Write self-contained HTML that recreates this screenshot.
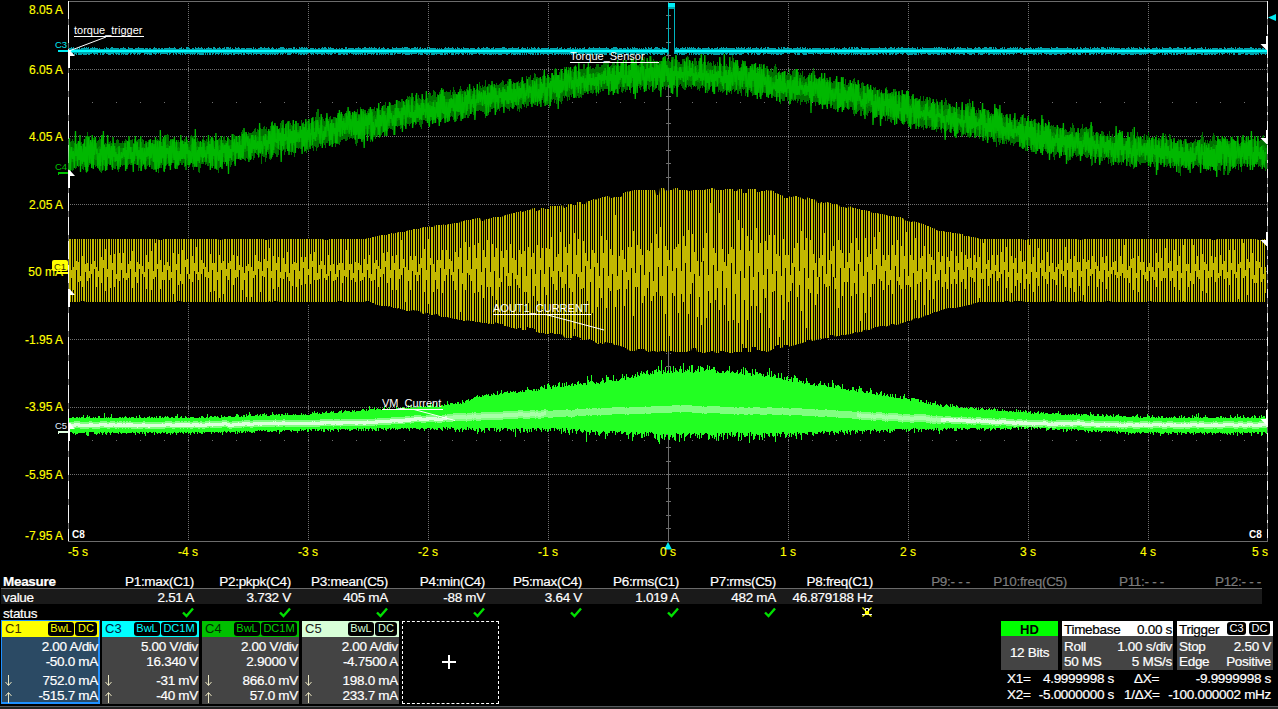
<!DOCTYPE html><html><head><meta charset="utf-8"><style>
*{margin:0;padding:0;box-sizing:border-box}
html,body{width:1278px;height:709px;background:#000;overflow:hidden}
body{position:relative;font-family:"Liberation Sans",sans-serif;color:#fff}
svg{position:absolute;left:0;top:0}
.t{position:absolute;white-space:nowrap;line-height:1}
.yl{color:#ffff00;font-size:12px;-webkit-text-stroke:0.15px currentColor;text-align:right;width:60px;left:3px}
.xl{color:#ffff00;font-size:12px;-webkit-text-stroke:0.15px currentColor}
.m{font-size:13.5px;letter-spacing:-0.3px;-webkit-text-stroke:0.2px currentColor}
.hdr{right:auto}
.box{position:absolute}
</style></head><body>
<svg width="1278" height="709" viewBox="0 0 1278 709">
<path d="M70 69.5H1267M70 136.5H1267M70 204.5H1267M70 271.5H1267M70 339.5H1267M70 407.5H1267M70 474.5H1267" stroke="#707070" stroke-width="1" stroke-dasharray="1 1" fill="none" shape-rendering="crispEdges"/>
<path d="M188.5 3V541M308.5 3V541M428.5 3V541M548.5 3V541M788.5 3V541M908.5 3V541M1028.5 3V541M1148.5 3V541" stroke="#707070" stroke-width="1" stroke-dasharray="1 1" fill="none" shape-rendering="crispEdges"/>
<path d="M92 102h1v1h-1zM116 102h1v1h-1zM140 102h1v1h-1zM164 102h1v1h-1zM188 101h1v3h-1zM212 102h1v1h-1zM236 102h1v1h-1zM260 102h1v1h-1zM284 102h1v1h-1zM308 101h1v3h-1zM332 102h1v1h-1zM356 102h1v1h-1zM380 102h1v1h-1zM404 102h1v1h-1zM428 101h1v3h-1zM452 102h1v1h-1zM476 102h1v1h-1zM500 102h1v1h-1zM524 102h1v1h-1zM548 101h1v3h-1zM572 102h1v1h-1zM596 102h1v1h-1zM620 102h1v1h-1zM644 102h1v1h-1zM668 101h1v3h-1zM692 102h1v1h-1zM716 102h1v1h-1zM740 102h1v1h-1zM764 102h1v1h-1zM788 101h1v3h-1zM812 102h1v1h-1zM836 102h1v1h-1zM860 102h1v1h-1zM884 102h1v1h-1zM908 101h1v3h-1zM932 102h1v1h-1zM956 102h1v1h-1zM980 102h1v1h-1zM1004 102h1v1h-1zM1028 101h1v3h-1zM1052 102h1v1h-1zM1076 102h1v1h-1zM1100 102h1v1h-1zM1124 102h1v1h-1zM1148 101h1v3h-1zM1172 102h1v1h-1zM1196 102h1v1h-1zM1220 102h1v1h-1zM1244 102h1v1h-1zM92 440h1v1h-1zM116 440h1v1h-1zM140 440h1v1h-1zM164 440h1v1h-1zM188 439h1v3h-1zM212 440h1v1h-1zM236 440h1v1h-1zM260 440h1v1h-1zM284 440h1v1h-1zM308 439h1v3h-1zM332 440h1v1h-1zM356 440h1v1h-1zM380 440h1v1h-1zM404 440h1v1h-1zM428 439h1v3h-1zM452 440h1v1h-1zM476 440h1v1h-1zM500 440h1v1h-1zM524 440h1v1h-1zM548 439h1v3h-1zM572 440h1v1h-1zM596 440h1v1h-1zM620 440h1v1h-1zM644 440h1v1h-1zM668 439h1v3h-1zM692 440h1v1h-1zM716 440h1v1h-1zM740 440h1v1h-1zM764 440h1v1h-1zM788 439h1v3h-1zM812 440h1v1h-1zM836 440h1v1h-1zM860 440h1v1h-1zM884 440h1v1h-1zM908 439h1v3h-1zM932 440h1v1h-1zM956 440h1v1h-1zM980 440h1v1h-1zM1004 440h1v1h-1zM1028 439h1v3h-1zM1052 440h1v1h-1zM1076 440h1v1h-1zM1100 440h1v1h-1zM1124 440h1v1h-1zM1148 439h1v3h-1zM1172 440h1v1h-1zM1196 440h1v1h-1zM1220 440h1v1h-1zM1244 440h1v1h-1zM188 68h1v3h-1zM188 135h1v3h-1zM188 203h1v3h-1zM188 270h1v3h-1zM188 338h1v3h-1zM188 406h1v3h-1zM188 473h1v3h-1zM308 68h1v3h-1zM308 135h1v3h-1zM308 203h1v3h-1zM308 270h1v3h-1zM308 338h1v3h-1zM308 406h1v3h-1zM308 473h1v3h-1zM428 68h1v3h-1zM428 135h1v3h-1zM428 203h1v3h-1zM428 270h1v3h-1zM428 338h1v3h-1zM428 406h1v3h-1zM428 473h1v3h-1zM548 68h1v3h-1zM548 135h1v3h-1zM548 203h1v3h-1zM548 270h1v3h-1zM548 338h1v3h-1zM548 406h1v3h-1zM548 473h1v3h-1zM668 68h1v3h-1zM668 135h1v3h-1zM668 203h1v3h-1zM668 270h1v3h-1zM668 338h1v3h-1zM668 406h1v3h-1zM668 473h1v3h-1zM788 68h1v3h-1zM788 135h1v3h-1zM788 203h1v3h-1zM788 270h1v3h-1zM788 338h1v3h-1zM788 406h1v3h-1zM788 473h1v3h-1zM908 68h1v3h-1zM908 135h1v3h-1zM908 203h1v3h-1zM908 270h1v3h-1zM908 338h1v3h-1zM908 406h1v3h-1zM908 473h1v3h-1zM1028 68h1v3h-1zM1028 135h1v3h-1zM1028 203h1v3h-1zM1028 270h1v3h-1zM1028 338h1v3h-1zM1028 406h1v3h-1zM1028 473h1v3h-1zM1148 68h1v3h-1zM1148 135h1v3h-1zM1148 203h1v3h-1zM1148 270h1v3h-1zM1148 338h1v3h-1zM1148 406h1v3h-1zM1148 473h1v3h-1z" fill="#707070" shape-rendering="crispEdges"/>
<path d="M668.5 1V541M666 15.5h5M666 28.5h5M666 42.5h5M666 55.5h5M666 69.5h5M666 82.5h5M666 96.5h5M666 109.5h5M666 123.5h5M666 136.5h5M666 150.5h5M666 163.5h5M666 177.5h5M666 190.5h5M666 204.5h5M666 217.5h5M666 231.5h5M666 244.5h5M666 258.5h5M666 271.5h5M666 285.5h5M666 298.5h5M666 312.5h5M666 325.5h5M666 339.5h5M666 353.5h5M666 366.5h5M666 380.5h5M666 393.5h5M666 407.5h5M666 420.5h5M666 434.5h5M666 447.5h5M666 461.5h5M666 474.5h5M666 488.5h5M666 501.5h5M666 515.5h5M666 528.5h5" stroke="#6e6e6e" stroke-width="1" fill="none" shape-rendering="crispEdges"/>
<path d="M68 1.5H1268M68 541.5H1268" stroke="#6c6c6c" stroke-width="1" shape-rendering="crispEdges"/>
<path d="M68.5 1V541M1267.5 1V541" stroke="#f4f4f4" stroke-width="1" shape-rendering="crispEdges"/>
<path d="M68.5 19V541M1267.5 19V541M1267.5 34V541" stroke="#6c6c6c" stroke-width="1" stroke-dasharray="6 18" shape-rendering="crispEdges"/>
<path d="M69.5 144V168M70.5 142V166M71.5 141V170M72.5 139V171M73.5 141V170M74.5 143V164M75.5 142V169M76.5 144V168M77.5 143V166M78.5 144V167M79.5 142V166M80.5 143V166M81.5 142V166M82.5 144V169M83.5 143V170M84.5 142V165M85.5 136V170M86.5 136V173M87.5 132V172M88.5 136V167M89.5 136V165M90.5 141V164M91.5 142V166M92.5 144V165M93.5 138V168M94.5 137V165M95.5 137V167M96.5 143V166M97.5 141V165M98.5 140V169M99.5 137V171M100.5 139V172M101.5 142V173M102.5 143V171M103.5 144V165M104.5 144V166M105.5 143V167M106.5 144V164M107.5 143V166M108.5 144V164M109.5 142V165M110.5 141V164M111.5 143V167M112.5 144V169M113.5 142V168M114.5 143V169M115.5 143V169M116.5 140V166M117.5 139V170M118.5 140V172M119.5 143V169M120.5 143V167M121.5 143V165M122.5 141V166M123.5 143V165M124.5 141V165M125.5 139V165M126.5 140V165M127.5 142V167M128.5 142V165M129.5 143V164M130.5 140V165M131.5 140V165M132.5 139V165M133.5 143V166M134.5 139V164M135.5 142V164M136.5 141V165M137.5 140V165M138.5 139V171M139.5 139V168M140.5 138V171M141.5 142V165M142.5 139V166M143.5 140V165M144.5 144V167M145.5 141V170M146.5 141V169M147.5 142V166M148.5 142V165M149.5 143V165M150.5 143V165M151.5 143V169M152.5 140V169M153.5 140V170M154.5 140V170M155.5 142V170M156.5 140V164M157.5 139V169M158.5 140V173M159.5 143V166M160.5 140V165M161.5 142V168M162.5 139V165M163.5 141V171M164.5 142V171M165.5 137V169M166.5 135V165M167.5 134V164M168.5 135V163M169.5 141V164M170.5 139V164M171.5 139V165M172.5 141V163M173.5 140V163M174.5 143V168M175.5 142V164M176.5 143V163M177.5 142V165M178.5 140V166M179.5 142V165M180.5 141V163M181.5 140V165M182.5 140V165M183.5 141V163M184.5 139V167M185.5 142V170M186.5 142V170M187.5 140V165M188.5 142V167M189.5 141V167M190.5 136V164M191.5 135V163M192.5 136V167M193.5 136V170M194.5 140V166M195.5 135V166M196.5 142V164M197.5 138V167M198.5 141V172M199.5 142V173M200.5 141V168M201.5 142V164M202.5 139V164M203.5 136V164M204.5 140V162M205.5 141V165M206.5 139V164M207.5 142V166M208.5 141V166M209.5 141V162M210.5 139V166M211.5 139V166M212.5 136V166M213.5 140V166M214.5 141V169M215.5 137V169M216.5 140V170M217.5 141V170M218.5 139V173M219.5 138V168M220.5 140V164M221.5 140V168M222.5 140V164M223.5 137V162M224.5 136V164M225.5 140V162M226.5 141V162M227.5 141V164M228.5 138V164M229.5 139V161M230.5 140V167M231.5 140V165M232.5 135V162M233.5 134V161M234.5 135V164M235.5 136V163M236.5 137V159M237.5 136V159M238.5 137V159M239.5 135V158M240.5 136V158M241.5 132V160M242.5 130V159M243.5 133V156M244.5 134V160M245.5 132V161M246.5 134V158M247.5 134V159M248.5 132V154M249.5 133V158M250.5 133V155M251.5 133V159M252.5 132V156M253.5 131V160M254.5 129V158M255.5 128V153M256.5 132V154M257.5 129V155M258.5 130V158M259.5 131V153M260.5 128V154M261.5 129V164M262.5 129V156M263.5 127V157M264.5 126V157M265.5 129V162M266.5 127V158M267.5 131V152M268.5 129V154M269.5 131V159M270.5 126V160M271.5 123V159M272.5 121V157M273.5 125V153M274.5 127V153M275.5 125V154M276.5 126V157M277.5 129V157M278.5 129V155M279.5 128V150M280.5 123V150M281.5 121V150M282.5 125V151M283.5 129V150M284.5 128V155M285.5 126V152M286.5 123V149M287.5 122V151M288.5 122V151M289.5 121V151M290.5 123V152M291.5 125V155M292.5 126V150M293.5 126V153M294.5 124V157M295.5 121V152M296.5 121V148M297.5 123V148M298.5 123V149M299.5 126V148M300.5 126V149M301.5 120V149M302.5 124V147M303.5 122V147M304.5 124V152M305.5 124V151M306.5 122V153M307.5 121V150M308.5 122V151M309.5 124V147M310.5 123V145M311.5 124V146M312.5 122V148M313.5 122V151M314.5 121V146M315.5 117V147M316.5 112V151M317.5 109V148M318.5 109V147M319.5 117V143M320.5 120V146M321.5 122V144M322.5 117V146M323.5 119V143M324.5 121V145M325.5 118V148M326.5 121V143M327.5 121V143M328.5 119V141M329.5 117V144M330.5 116V145M331.5 119V144M332.5 119V140M333.5 117V144M334.5 117V143M335.5 117V147M336.5 118V143M337.5 115V143M338.5 115V144M339.5 117V145M340.5 114V142M341.5 112V140M342.5 114V140M343.5 116V139M344.5 114V139M345.5 113V141M346.5 111V141M347.5 116V140M348.5 114V137M349.5 114V139M350.5 113V138M351.5 115V138M352.5 113V139M353.5 113V138M354.5 112V139M355.5 114V144M356.5 114V146M357.5 109V143M358.5 114V137M359.5 114V138M360.5 107V139M361.5 109V141M362.5 111V140M363.5 112V139M364.5 114V135M365.5 114V135M366.5 113V134M367.5 111V138M368.5 109V134M369.5 109V136M370.5 113V142M371.5 110V140M372.5 112V142M373.5 109V137M374.5 107V137M375.5 111V139M376.5 108V136M377.5 108V137M378.5 110V135M379.5 110V138M380.5 110V137M381.5 108V135M382.5 109V133M383.5 105V132M384.5 105V132M385.5 102V131M386.5 108V133M387.5 106V131M388.5 106V129M389.5 104V128M390.5 103V129M391.5 105V129M392.5 105V130M393.5 105V135M394.5 104V129M395.5 104V126M396.5 102V126M397.5 100V127M398.5 101V126M399.5 101V126M400.5 102V129M401.5 99V128M402.5 99V128M403.5 101V125M404.5 102V126M405.5 100V127M406.5 99V123M407.5 96V124M408.5 97V124M409.5 96V126M410.5 97V124M411.5 99V123M412.5 97V124M413.5 97V124M414.5 101V122M415.5 95V125M416.5 98V124M417.5 99V122M418.5 95V122M419.5 98V125M420.5 99V127M421.5 100V129M422.5 99V124M423.5 99V120M424.5 100V120M425.5 99V121M426.5 99V121M427.5 98V120M428.5 94V126M429.5 92V123M430.5 93V121M431.5 96V120M432.5 95V119M433.5 90V123M434.5 91V123M435.5 92V120M436.5 97V118M437.5 94V119M438.5 95V120M439.5 92V120M440.5 90V119M441.5 96V120M442.5 91V119M443.5 89V118M444.5 92V119M445.5 92V116M446.5 91V118M447.5 92V121M448.5 92V122M449.5 92V120M450.5 90V117M451.5 95V116M452.5 92V117M453.5 87V120M454.5 90V119M455.5 92V121M456.5 94V121M457.5 94V119M458.5 92V116M459.5 89V115M460.5 86V114M461.5 89V114M462.5 91V115M463.5 91V118M464.5 90V118M465.5 91V118M466.5 89V114M467.5 87V118M468.5 91V118M469.5 91V116M470.5 89V112M471.5 89V114M472.5 91V112M473.5 86V115M474.5 88V113M475.5 90V111M476.5 89V111M477.5 90V111M478.5 90V111M479.5 82V110M480.5 86V111M481.5 88V111M482.5 85V112M483.5 87V112M484.5 86V114M485.5 80V118M486.5 87V116M487.5 86V116M488.5 84V115M489.5 84V112M490.5 86V112M491.5 87V109M492.5 86V109M493.5 87V108M494.5 87V108M495.5 85V110M496.5 83V112M497.5 85V110M498.5 85V108M499.5 84V111M500.5 83V108M501.5 82V107M502.5 80V107M503.5 81V107M504.5 85V106M505.5 84V107M506.5 84V108M507.5 81V109M508.5 82V109M509.5 84V111M510.5 84V107M511.5 81V108M512.5 84V108M513.5 82V108M514.5 83V107M515.5 83V105M516.5 83V106M517.5 83V111M518.5 81V109M519.5 83V112M520.5 82V108M521.5 80V109M522.5 81V104M523.5 81V105M524.5 83V107M525.5 83V104M526.5 76V108M527.5 80V106M528.5 77V106M529.5 77V102M530.5 75V104M531.5 80V104M532.5 80V102M533.5 78V104M534.5 73V105M535.5 74V105M536.5 77V102M537.5 77V101M538.5 78V102M539.5 78V104M540.5 78V103M541.5 79V100M542.5 76V100M543.5 75V103M544.5 70V102M545.5 76V103M546.5 78V101M547.5 74V101M548.5 78V104M549.5 77V108M550.5 78V106M551.5 73V102M552.5 75V100M553.5 76V99M554.5 69V103M555.5 68V100M556.5 73V104M557.5 76V100M558.5 75V102M559.5 72V101M560.5 69V102M561.5 75V104M562.5 71V101M563.5 73V96M564.5 67V98M565.5 74V95M566.5 72V97M567.5 74V101M568.5 67V97M569.5 68V100M570.5 71V95M571.5 71V97M572.5 69V94M573.5 72V95M574.5 66V94M575.5 65V97M576.5 67V98M577.5 71V96M578.5 72V98M579.5 69V98M580.5 69V97M581.5 69V98M582.5 69V95M583.5 64V95M584.5 64V93M585.5 69V93M586.5 68V92M587.5 67V92M588.5 67V91M589.5 67V91M590.5 66V93M591.5 69V93M592.5 68V94M593.5 68V93M594.5 69V90M595.5 67V89M596.5 64V96M597.5 64V92M598.5 64V94M599.5 67V90M600.5 67V92M601.5 65V89M602.5 65V91M603.5 62V91M604.5 63V89M605.5 62V89M606.5 61V89M607.5 62V89M608.5 63V89M609.5 67V91M610.5 66V92M611.5 65V88M612.5 63V91M613.5 63V92M614.5 63V89M615.5 65V90M616.5 63V88M617.5 65V94M618.5 65V94M619.5 66V89M620.5 66V87M621.5 67V92M622.5 63V93M623.5 65V91M624.5 64V89M625.5 64V92M626.5 64V90M627.5 66V90M628.5 65V87M629.5 65V90M630.5 64V93M631.5 63V88M632.5 64V87M633.5 64V87M634.5 65V89M635.5 59V86M636.5 60V86M637.5 65V86M638.5 65V86M639.5 64V88M640.5 61V90M641.5 60V87M642.5 57V86M643.5 59V89M644.5 57V90M645.5 63V86M646.5 64V86M647.5 62V85M648.5 61V89M649.5 56V90M650.5 57V87M651.5 62V86M652.5 61V86M653.5 59V87M654.5 61V90M655.5 64V89M656.5 62V88M657.5 61V84M658.5 63V90M659.5 64V91M660.5 64V93M661.5 61V90M662.5 58V86M663.5 59V89M664.5 61V86M665.5 63V90M666.5 61V87M667.5 58V87M668.5 59V85M669.5 61V86M670.5 62V84M671.5 60V85M672.5 60V86M673.5 57V85M674.5 59V88M675.5 55V86M676.5 56V88M677.5 60V84M678.5 62V87M679.5 62V85M680.5 64V84M681.5 64V86M682.5 59V88M683.5 59V89M684.5 59V90M685.5 62V90M686.5 57V88M687.5 56V85M688.5 57V87M689.5 60V86M690.5 61V87M691.5 63V89M692.5 64V85M693.5 64V87M694.5 58V86M695.5 58V87M696.5 61V86M697.5 65V90M698.5 61V89M699.5 61V91M700.5 59V88M701.5 64V86M702.5 64V88M703.5 62V86M704.5 64V87M705.5 62V86M706.5 65V90M707.5 62V93M708.5 61V91M709.5 63V90M710.5 62V87M711.5 63V86M712.5 66V91M713.5 61V94M714.5 65V91M715.5 64V87M716.5 66V87M717.5 62V87M718.5 66V92M719.5 65V90M720.5 63V92M721.5 64V91M722.5 66V93M723.5 66V92M724.5 67V91M725.5 66V90M726.5 64V89M727.5 66V91M728.5 67V89M729.5 67V93M730.5 67V90M731.5 61V94M732.5 55V90M733.5 58V89M734.5 63V92M735.5 64V91M736.5 64V89M737.5 67V94M738.5 66V94M739.5 68V91M740.5 68V93M741.5 64V96M742.5 60V89M743.5 63V90M744.5 66V89M745.5 69V96M746.5 68V93M747.5 68V93M748.5 68V90M749.5 68V90M750.5 68V92M751.5 68V93M752.5 65V96M753.5 70V95M754.5 70V93M755.5 70V92M756.5 68V93M757.5 68V91M758.5 71V92M759.5 68V97M760.5 67V97M761.5 64V96M762.5 69V95M763.5 64V92M764.5 64V93M765.5 68V93M766.5 66V93M767.5 66V95M768.5 69V95M769.5 71V95M770.5 70V94M771.5 68V93M772.5 72V95M773.5 69V96M774.5 66V97M775.5 64V97M776.5 67V96M777.5 73V97M778.5 73V97M779.5 71V101M780.5 73V104M781.5 73V99M782.5 74V101M783.5 72V101M784.5 72V101M785.5 71V97M786.5 75V97M787.5 72V101M788.5 74V100M789.5 69V105M790.5 74V100M791.5 75V101M792.5 71V100M793.5 70V101M794.5 70V99M795.5 77V101M796.5 72V99M797.5 69V103M798.5 72V101M799.5 75V99M800.5 73V105M801.5 75V102M802.5 71V102M803.5 77V100M804.5 76V102M805.5 79V102M806.5 78V104M807.5 77V101M808.5 77V103M809.5 73V100M810.5 75V101M811.5 80V106M812.5 71V100M813.5 68V102M814.5 71V102M815.5 78V106M816.5 78V102M817.5 79V102M818.5 78V103M819.5 80V102M820.5 81V102M821.5 80V105M822.5 81V105M823.5 78V104M824.5 79V104M825.5 80V105M826.5 78V107M827.5 78V105M828.5 82V104M829.5 81V104M830.5 83V108M831.5 82V108M832.5 83V105M833.5 81V109M834.5 81V109M835.5 79V110M836.5 82V109M837.5 82V111M838.5 82V110M839.5 82V108M840.5 82V107M841.5 82V105M842.5 78V105M843.5 84V108M844.5 84V108M845.5 79V107M846.5 85V108M847.5 85V108M848.5 83V110M849.5 86V109M850.5 85V107M851.5 84V107M852.5 81V110M853.5 79V114M854.5 78V116M855.5 82V113M856.5 84V109M857.5 88V112M858.5 83V111M859.5 84V110M860.5 88V116M861.5 83V116M862.5 82V111M863.5 83V115M864.5 86V116M865.5 86V114M866.5 85V115M867.5 86V116M868.5 87V113M869.5 89V111M870.5 90V113M871.5 89V112M872.5 90V113M873.5 87V112M874.5 88V117M875.5 87V118M876.5 90V116M877.5 91V117M878.5 90V115M879.5 89V115M880.5 93V114M881.5 90V115M882.5 93V117M883.5 93V115M884.5 93V117M885.5 88V121M886.5 87V116M887.5 90V121M888.5 93V119M889.5 94V119M890.5 93V122M891.5 96V123M892.5 94V118M893.5 96V117M894.5 96V118M895.5 89V117M896.5 91V120M897.5 95V118M898.5 92V119M899.5 97V120M900.5 95V121M901.5 96V123M902.5 95V122M903.5 95V125M904.5 94V124M905.5 94V122M906.5 91V121M907.5 90V124M908.5 91V124M909.5 96V123M910.5 99V121M911.5 96V124M912.5 95V125M913.5 98V124M914.5 99V123M915.5 98V123M916.5 101V123M917.5 101V126M918.5 100V129M919.5 99V127M920.5 96V126M921.5 101V128M922.5 101V127M923.5 96V130M924.5 101V125M925.5 99V125M926.5 103V129M927.5 103V128M928.5 100V126M929.5 97V128M930.5 98V127M931.5 104V126M932.5 104V127M933.5 101V127M934.5 102V130M935.5 103V129M936.5 99V132M937.5 101V129M938.5 105V129M939.5 102V127M940.5 102V130M941.5 100V133M942.5 106V128M943.5 105V129M944.5 102V132M945.5 98V129M946.5 100V131M947.5 105V130M948.5 103V129M949.5 106V132M950.5 106V132M951.5 107V129M952.5 106V129M953.5 107V131M954.5 108V137M955.5 108V133M956.5 109V134M957.5 109V133M958.5 107V133M959.5 107V130M960.5 110V132M961.5 110V137M962.5 110V136M963.5 110V135M964.5 110V134M965.5 111V135M966.5 107V132M967.5 111V137M968.5 106V137M969.5 99V138M970.5 103V136M971.5 107V135M972.5 111V133M973.5 111V133M974.5 109V135M975.5 113V134M976.5 110V136M977.5 113V136M978.5 108V136M979.5 110V139M980.5 112V134M981.5 114V137M982.5 114V136M983.5 112V137M984.5 112V138M985.5 115V140M986.5 110V137M987.5 111V137M988.5 114V140M989.5 112V137M990.5 114V138M991.5 113V137M992.5 115V139M993.5 116V140M994.5 114V139M995.5 116V142M996.5 116V147M997.5 115V138M998.5 116V142M999.5 117V145M1000.5 117V143M1001.5 118V140M1002.5 118V139M1003.5 115V140M1004.5 117V144M1005.5 115V141M1006.5 115V144M1007.5 117V140M1008.5 118V142M1009.5 119V141M1010.5 119V145M1011.5 120V143M1012.5 120V143M1013.5 118V146M1014.5 119V144M1015.5 120V143M1016.5 120V142M1017.5 119V142M1018.5 122V142M1019.5 120V146M1020.5 117V146M1021.5 117V148M1022.5 117V148M1023.5 114V149M1024.5 118V148M1025.5 118V151M1026.5 123V145M1027.5 118V147M1028.5 117V146M1029.5 121V146M1030.5 122V148M1031.5 119V152M1032.5 124V152M1033.5 120V152M1034.5 122V147M1035.5 123V149M1036.5 123V147M1037.5 124V146M1038.5 122V149M1039.5 123V148M1040.5 125V150M1041.5 121V153M1042.5 126V152M1043.5 126V151M1044.5 127V149M1045.5 126V151M1046.5 124V152M1047.5 125V154M1048.5 120V150M1049.5 122V151M1050.5 126V154M1051.5 125V154M1052.5 126V152M1053.5 125V157M1054.5 127V160M1055.5 127V155M1056.5 129V154M1057.5 126V150M1058.5 127V153M1059.5 129V151M1060.5 129V152M1061.5 130V152M1062.5 128V152M1063.5 130V155M1064.5 130V152M1065.5 129V153M1066.5 130V154M1067.5 132V160M1068.5 132V161M1069.5 131V157M1070.5 127V156M1071.5 128V157M1072.5 123V158M1073.5 125V153M1074.5 128V153M1075.5 133V155M1076.5 132V157M1077.5 133V156M1078.5 132V156M1079.5 133V155M1080.5 129V155M1081.5 128V156M1082.5 124V154M1083.5 129V154M1084.5 128V155M1085.5 132V157M1086.5 131V158M1087.5 133V158M1088.5 132V157M1089.5 128V155M1090.5 125V159M1091.5 124V166M1092.5 126V165M1093.5 132V157M1094.5 135V157M1095.5 133V161M1096.5 132V159M1097.5 135V157M1098.5 133V157M1099.5 136V156M1100.5 136V163M1101.5 131V161M1102.5 131V161M1103.5 132V158M1104.5 135V160M1105.5 136V158M1106.5 136V157M1107.5 134V158M1108.5 136V164M1109.5 131V159M1110.5 137V163M1111.5 136V166M1112.5 134V162M1113.5 137V160M1114.5 137V158M1115.5 135V159M1116.5 132V162M1117.5 135V163M1118.5 136V165M1119.5 130V163M1120.5 133V162M1121.5 137V165M1122.5 133V162M1123.5 138V163M1124.5 138V160M1125.5 138V159M1126.5 138V161M1127.5 137V161M1128.5 136V162M1129.5 138V166M1130.5 132V167M1131.5 132V162M1132.5 129V165M1133.5 135V169M1134.5 135V168M1135.5 138V163M1136.5 136V161M1137.5 132V161M1138.5 136V162M1139.5 138V164M1140.5 138V165M1141.5 137V163M1142.5 139V163M1143.5 136V163M1144.5 134V163M1145.5 140V163M1146.5 135V162M1147.5 136V162M1148.5 132V161M1149.5 137V162M1150.5 140V163M1151.5 141V164M1152.5 141V162M1153.5 139V164M1154.5 139V167M1155.5 139V162M1156.5 135V163M1157.5 140V167M1158.5 141V163M1159.5 141V163M1160.5 139V164M1161.5 140V163M1162.5 141V163M1163.5 141V163M1164.5 138V163M1165.5 134V165M1166.5 136V167M1167.5 140V166M1168.5 140V164M1169.5 134V166M1170.5 135V163M1171.5 141V163M1172.5 142V166M1173.5 141V168M1174.5 140V166M1175.5 143V164M1176.5 143V164M1177.5 143V164M1178.5 139V173M1179.5 140V173M1180.5 139V176M1181.5 141V167M1182.5 144V165M1183.5 141V168M1184.5 139V166M1185.5 141V165M1186.5 142V166M1187.5 143V166M1188.5 143V167M1189.5 143V169M1190.5 142V165M1191.5 142V164M1192.5 143V169M1193.5 142V165M1194.5 141V166M1195.5 139V165M1196.5 142V165M1197.5 141V166M1198.5 143V167M1199.5 143V165M1200.5 139V167M1201.5 135V164M1202.5 132V165M1203.5 137V166M1204.5 142V166M1205.5 140V169M1206.5 143V171M1207.5 140V167M1208.5 143V169M1209.5 141V169M1210.5 139V171M1211.5 141V166M1212.5 136V166M1213.5 133V170M1214.5 135V169M1215.5 140V165M1216.5 141V165M1217.5 143V166M1218.5 141V170M1219.5 140V170M1220.5 139V171M1221.5 142V166M1222.5 142V165M1223.5 138V175M1224.5 140V175M1225.5 141V171M1226.5 141V165M1227.5 143V175M1228.5 141V175M1229.5 141V173M1230.5 143V164M1231.5 137V167M1232.5 136V169M1233.5 139V167M1234.5 143V167M1235.5 143V169M1236.5 141V166M1237.5 140V164M1238.5 143V170M1239.5 144V164M1240.5 143V167M1241.5 137V172M1242.5 136V166M1243.5 140V164M1244.5 140V166M1245.5 141V164M1246.5 138V164M1247.5 142V165M1248.5 141V164M1249.5 141V166M1250.5 142V165M1251.5 143V165M1252.5 139V164M1253.5 139V165M1254.5 137V164M1255.5 140V164M1256.5 141V165M1257.5 143V164M1258.5 139V167M1259.5 141V166M1260.5 140V167M1261.5 140V165M1262.5 136V164M1263.5 135V165M1264.5 138V168M1265.5 141V171M1266.5 142V169" stroke="#007000" stroke-width="1"/>
<path d="M69.5 149V161M70.5 149V160M71.5 148V162M72.5 147V162M73.5 148V162M74.5 149V159M75.5 149V161M76.5 149V161M77.5 149V160M78.5 149V160M79.5 148V160M80.5 149V160M81.5 149V160M82.5 149V161M83.5 149V161M84.5 148V160M85.5 146V161M86.5 146V163M87.5 145V162M88.5 146V160M89.5 146V160M90.5 148V159M91.5 148V160M92.5 149V160M93.5 147V161M94.5 146V159M95.5 146V160M96.5 149V160M97.5 148V160M98.5 147V161M99.5 146V162M100.5 147V162M101.5 148V162M102.5 149V162M103.5 149V160M104.5 149V160M105.5 149V160M106.5 149V159M107.5 148V160M108.5 149V159M109.5 148V159M110.5 148V159M111.5 149V160M112.5 149V161M113.5 148V161M114.5 148V161M115.5 149V161M116.5 148V160M117.5 147V161M118.5 147V162M119.5 149V161M120.5 148V160M121.5 148V159M122.5 148V160M123.5 148V159M124.5 148V159M125.5 147V159M126.5 147V159M127.5 148V160M128.5 148V159M129.5 149V159M130.5 147V159M131.5 147V159M132.5 147V159M133.5 149V160M134.5 147V159M135.5 148V159M136.5 148V159M137.5 147V159M138.5 147V161M139.5 147V160M140.5 146V162M141.5 148V159M142.5 147V160M143.5 147V159M144.5 149V160M145.5 148V161M146.5 148V161M147.5 148V159M148.5 148V159M149.5 148V159M150.5 148V159M151.5 148V161M152.5 147V161M153.5 147V161M154.5 147V161M155.5 148V161M156.5 147V159M157.5 147V161M158.5 147V162M159.5 148V159M160.5 147V159M161.5 148V160M162.5 147V159M163.5 148V161M164.5 148V161M165.5 146V160M166.5 145V159M167.5 144V158M168.5 145V158M169.5 147V158M170.5 147V158M171.5 146V159M172.5 147V158M173.5 147V158M174.5 148V160M175.5 147V158M176.5 148V158M177.5 148V159M178.5 147V159M179.5 148V159M180.5 147V158M181.5 147V159M182.5 147V159M183.5 147V158M184.5 146V159M185.5 147V160M186.5 147V160M187.5 146V158M188.5 147V159M189.5 147V159M190.5 145V158M191.5 144V158M192.5 145V159M193.5 145V160M194.5 147V159M195.5 145V159M196.5 147V158M197.5 146V159M198.5 147V161M199.5 147V161M200.5 147V160M201.5 147V158M202.5 146V158M203.5 145V158M204.5 146V157M205.5 147V158M206.5 146V158M207.5 147V158M208.5 147V159M209.5 147V157M210.5 146V158M211.5 146V159M212.5 144V159M213.5 146V159M214.5 147V160M215.5 145V160M216.5 146V160M217.5 147V160M218.5 146V161M219.5 145V159M220.5 146V158M221.5 146V159M222.5 146V158M223.5 145V157M224.5 144V158M225.5 146V157M226.5 146V157M227.5 146V157M228.5 145V157M229.5 145V156M230.5 145V158M231.5 145V157M232.5 143V156M233.5 142V155M234.5 143V156M235.5 143V156M236.5 143V154M237.5 142V153M238.5 142V153M239.5 141V152M240.5 141V152M241.5 139V152M242.5 138V152M243.5 139V151M244.5 140V152M245.5 139V152M246.5 139V151M247.5 139V151M248.5 138V149M249.5 138V150M250.5 138V149M251.5 138V150M252.5 138V149M253.5 137V151M254.5 136V150M255.5 136V148M256.5 137V148M257.5 136V149M258.5 137V150M259.5 137V148M260.5 136V148M261.5 136V152M262.5 136V148M263.5 135V149M264.5 134V149M265.5 135V151M266.5 135V149M267.5 136V147M268.5 135V147M269.5 136V149M270.5 134V150M271.5 133V149M272.5 132V148M273.5 133V146M274.5 134V146M275.5 133V147M276.5 133V148M277.5 135V148M278.5 135V147M279.5 134V145M280.5 132V145M281.5 131V144M282.5 132V145M283.5 134V144M284.5 134V146M285.5 133V145M286.5 131V144M287.5 131V144M288.5 131V144M289.5 130V144M290.5 131V144M291.5 132V146M292.5 132V143M293.5 132V145M294.5 131V146M295.5 130V144M296.5 130V142M297.5 130V142M298.5 130V143M299.5 131V142M300.5 131V142M301.5 129V142M302.5 130V141M303.5 129V141M304.5 130V143M305.5 130V143M306.5 129V143M307.5 128V142M308.5 129V142M309.5 130V141M310.5 129V140M311.5 129V140M312.5 128V141M313.5 128V142M314.5 128V140M315.5 126V140M316.5 124V141M317.5 122V140M318.5 122V140M319.5 125V138M320.5 127V139M321.5 127V138M322.5 125V139M323.5 126V137M324.5 126V138M325.5 125V139M326.5 126V137M327.5 126V137M328.5 125V136M329.5 124V137M330.5 124V137M331.5 125V136M332.5 124V135M333.5 123V136M334.5 123V136M335.5 123V137M336.5 124V135M337.5 122V135M338.5 122V136M339.5 123V136M340.5 121V135M341.5 120V134M342.5 121V134M343.5 122V133M344.5 121V133M345.5 120V134M346.5 120V134M347.5 122V133M348.5 121V132M349.5 121V133M350.5 120V132M351.5 121V132M352.5 120V132M353.5 120V132M354.5 119V132M355.5 120V134M356.5 120V135M357.5 118V134M358.5 120V131M359.5 120V131M360.5 117V132M361.5 118V132M362.5 118V132M363.5 119V131M364.5 119V130M365.5 119V129M366.5 119V129M367.5 118V131M368.5 117V129M369.5 117V129M370.5 118V132M371.5 117V131M372.5 117V131M373.5 116V129M374.5 115V129M375.5 117V130M376.5 115V128M377.5 115V129M378.5 116V127M379.5 115V129M380.5 115V128M381.5 114V127M382.5 114V126M383.5 113V125M384.5 112V125M385.5 111V125M386.5 113V125M387.5 112V124M388.5 112V123M389.5 111V123M390.5 110V123M391.5 111V123M392.5 111V123M393.5 111V125M394.5 110V122M395.5 110V121M396.5 109V120M397.5 108V121M398.5 108V120M399.5 108V120M400.5 108V121M401.5 107V121M402.5 107V121M403.5 108V119M404.5 108V119M405.5 107V120M406.5 106V118M407.5 105V118M408.5 105V118M409.5 105V119M410.5 105V118M411.5 106V117M412.5 105V118M413.5 105V118M414.5 106V117M415.5 104V118M416.5 105V117M417.5 105V116M418.5 104V116M419.5 105V117M420.5 105V118M421.5 105V119M422.5 105V116M423.5 105V115M424.5 105V115M425.5 104V115M426.5 104V115M427.5 104V115M428.5 102V117M429.5 101V116M430.5 101V115M431.5 102V114M432.5 102V114M433.5 100V115M434.5 100V115M435.5 100V114M436.5 102V113M437.5 101V113M438.5 101V113M439.5 100V113M440.5 99V113M441.5 101V113M442.5 99V112M443.5 98V112M444.5 100V112M445.5 99V111M446.5 99V112M447.5 99V113M448.5 99V113M449.5 99V112M450.5 98V111M451.5 100V111M452.5 99V111M453.5 96V112M454.5 98V111M455.5 98V112M456.5 99V112M457.5 99V111M458.5 98V110M459.5 97V109M460.5 95V109M461.5 96V108M462.5 97V109M463.5 97V110M464.5 97V110M465.5 97V110M466.5 96V108M467.5 95V109M468.5 97V109M469.5 97V109M470.5 96V107M471.5 96V107M472.5 96V107M473.5 94V108M474.5 95V107M475.5 95V106M476.5 95V106M477.5 95V105M478.5 95V105M479.5 92V105M480.5 93V105M481.5 94V105M482.5 93V106M483.5 93V105M484.5 93V106M485.5 90V108M486.5 93V107M487.5 93V107M488.5 92V106M489.5 92V105M490.5 92V105M491.5 93V104M492.5 92V103M493.5 93V103M494.5 92V103M495.5 91V104M496.5 91V104M497.5 91V103M498.5 91V102M499.5 91V103M500.5 90V102M501.5 90V102M502.5 89V102M503.5 89V101M504.5 91V101M505.5 90V101M506.5 90V102M507.5 89V102M508.5 89V102M509.5 90V103M510.5 90V101M511.5 88V101M512.5 90V101M513.5 89V101M514.5 89V101M515.5 89V99M516.5 89V100M517.5 89V102M518.5 88V101M519.5 88V102M520.5 88V100M521.5 87V100M522.5 87V99M523.5 87V99M524.5 88V99M525.5 88V98M526.5 85V100M527.5 86V99M528.5 85V99M529.5 85V97M530.5 84V98M531.5 86V97M532.5 86V96M533.5 85V97M534.5 83V98M535.5 83V98M536.5 84V96M537.5 84V96M538.5 84V96M539.5 84V97M540.5 84V96M541.5 84V95M542.5 83V95M543.5 83V96M544.5 80V95M545.5 83V96M546.5 83V95M547.5 82V95M548.5 83V96M549.5 83V97M550.5 83V96M551.5 81V95M552.5 82V94M553.5 82V93M554.5 79V94M555.5 78V93M556.5 80V94M557.5 81V93M558.5 81V93M559.5 80V93M560.5 78V93M561.5 80V94M562.5 79V93M563.5 79V91M564.5 77V91M565.5 79V90M566.5 79V91M567.5 79V92M568.5 77V90M569.5 76V91M570.5 78V89M571.5 77V90M572.5 77V88M573.5 78V89M574.5 75V89M575.5 75V89M576.5 75V90M577.5 77V89M578.5 77V89M579.5 76V89M580.5 76V89M581.5 76V89M582.5 75V88M583.5 73V88M584.5 73V87M585.5 75V87M586.5 75V86M587.5 74V86M588.5 74V85M589.5 74V85M590.5 73V86M591.5 74V86M592.5 74V86M593.5 74V86M594.5 74V84M595.5 73V84M596.5 72V87M597.5 72V85M598.5 72V86M599.5 73V84M600.5 73V85M601.5 72V83M602.5 72V84M603.5 70V84M604.5 71V83M605.5 71V83M606.5 70V83M607.5 70V83M608.5 71V83M609.5 72V84M610.5 72V84M611.5 71V82M612.5 71V84M613.5 71V84M614.5 70V83M615.5 71V83M616.5 70V82M617.5 71V85M618.5 71V85M619.5 72V83M620.5 71V82M621.5 72V84M622.5 70V84M623.5 71V83M624.5 70V82M625.5 70V84M626.5 70V83M627.5 71V83M628.5 71V81M629.5 71V83M630.5 70V84M631.5 70V82M632.5 70V81M633.5 70V81M634.5 71V82M635.5 68V81M636.5 68V81M637.5 70V81M638.5 70V81M639.5 70V82M640.5 69V82M641.5 68V81M642.5 67V81M643.5 68V82M644.5 67V82M645.5 69V80M646.5 70V80M647.5 69V80M648.5 68V81M649.5 66V82M650.5 67V81M651.5 68V80M652.5 68V80M653.5 67V80M654.5 68V81M655.5 69V81M656.5 68V81M657.5 68V79M658.5 69V81M659.5 69V82M660.5 69V83M661.5 68V82M662.5 67V80M663.5 67V81M664.5 68V80M665.5 68V81M666.5 68V80M667.5 67V80M668.5 67V79M669.5 68V80M670.5 68V79M671.5 67V79M672.5 67V80M673.5 66V79M674.5 67V80M675.5 65V80M676.5 66V81M677.5 67V79M678.5 68V80M679.5 68V79M680.5 69V79M681.5 69V80M682.5 67V81M683.5 67V81M684.5 67V82M685.5 68V82M686.5 67V81M687.5 66V80M688.5 66V81M689.5 68V80M690.5 68V81M691.5 69V81M692.5 69V80M693.5 69V81M694.5 67V80M695.5 67V80M696.5 68V80M697.5 70V82M698.5 69V82M699.5 69V83M700.5 67V81M701.5 70V80M702.5 70V81M703.5 69V81M704.5 70V81M705.5 69V81M706.5 70V82M707.5 69V83M708.5 69V83M709.5 70V82M710.5 69V81M711.5 70V81M712.5 71V83M713.5 69V84M714.5 71V83M715.5 70V81M716.5 71V82M717.5 70V82M718.5 72V84M719.5 71V83M720.5 70V84M721.5 71V84M722.5 72V84M723.5 72V84M724.5 72V84M725.5 72V83M726.5 71V83M727.5 72V84M728.5 72V83M729.5 72V85M730.5 73V84M731.5 70V85M732.5 68V84M733.5 69V84M734.5 71V85M735.5 71V84M736.5 72V84M737.5 73V85M738.5 73V86M739.5 73V85M740.5 73V86M741.5 72V87M742.5 70V84M743.5 72V84M744.5 73V84M745.5 74V87M746.5 74V86M747.5 74V86M748.5 74V85M749.5 74V85M750.5 74V86M751.5 74V86M752.5 73V87M753.5 75V87M754.5 75V86M755.5 75V86M756.5 75V87M757.5 74V86M758.5 76V86M759.5 75V88M760.5 74V89M761.5 73V88M762.5 75V88M763.5 74V87M764.5 74V87M765.5 76V87M766.5 75V87M767.5 75V88M768.5 76V89M769.5 77V89M770.5 77V88M771.5 76V88M772.5 78V89M773.5 77V90M774.5 76V90M775.5 75V90M776.5 76V90M777.5 79V91M778.5 79V91M779.5 78V92M780.5 79V93M781.5 79V92M782.5 80V93M783.5 79V93M784.5 79V93M785.5 79V91M786.5 81V92M787.5 80V93M788.5 80V93M789.5 79V95M790.5 81V93M791.5 81V94M792.5 80V93M793.5 79V94M794.5 80V93M795.5 83V94M796.5 80V93M797.5 79V95M798.5 81V94M799.5 82V94M800.5 81V96M801.5 82V95M802.5 81V95M803.5 83V94M804.5 83V95M805.5 84V96M806.5 84V96M807.5 84V95M808.5 84V96M809.5 82V95M810.5 83V96M811.5 85V97M812.5 82V95M813.5 81V96M814.5 82V96M815.5 85V98M816.5 85V96M817.5 85V96M818.5 85V97M819.5 86V97M820.5 86V97M821.5 86V98M822.5 87V98M823.5 86V98M824.5 86V98M825.5 87V98M826.5 86V99M827.5 86V99M828.5 88V98M829.5 87V98M830.5 88V100M831.5 88V100M832.5 88V99M833.5 88V101M834.5 88V101M835.5 87V101M836.5 88V101M837.5 88V102M838.5 88V102M839.5 89V101M840.5 89V101M841.5 89V100M842.5 87V100M843.5 90V101M844.5 90V101M845.5 88V101M846.5 90V102M847.5 90V102M848.5 90V102M849.5 91V102M850.5 91V102M851.5 91V102M852.5 90V103M853.5 89V105M854.5 89V106M855.5 90V105M856.5 91V103M857.5 93V105M858.5 91V104M859.5 92V104M860.5 94V106M861.5 92V107M862.5 91V105M863.5 92V107M864.5 93V107M865.5 94V106M866.5 93V107M867.5 94V108M868.5 94V106M869.5 95V106M870.5 96V107M871.5 95V107M872.5 96V107M873.5 95V107M874.5 95V109M875.5 95V110M876.5 96V109M877.5 97V109M878.5 97V109M879.5 96V109M880.5 98V109M881.5 97V109M882.5 98V110M883.5 99V109M884.5 99V110M885.5 97V112M886.5 97V110M887.5 98V112M888.5 99V112M889.5 100V112M890.5 100V113M891.5 101V114M892.5 100V112M893.5 101V112M894.5 101V112M895.5 99V112M896.5 100V113M897.5 101V113M898.5 100V113M899.5 102V114M900.5 102V114M901.5 103V115M902.5 102V115M903.5 102V116M904.5 102V116M905.5 102V115M906.5 101V115M907.5 101V116M908.5 101V116M909.5 104V116M910.5 105V116M911.5 104V117M912.5 103V117M913.5 105V117M914.5 105V117M915.5 105V117M916.5 106V117M917.5 106V119M918.5 106V120M919.5 106V119M920.5 105V119M921.5 107V120M922.5 107V119M923.5 105V121M924.5 107V119M925.5 107V119M926.5 108V121M927.5 108V120M928.5 107V120M929.5 106V120M930.5 107V120M931.5 109V120M932.5 109V120M933.5 108V121M934.5 109V122M935.5 109V122M936.5 108V123M937.5 109V122M938.5 111V122M939.5 109V121M940.5 109V123M941.5 109V124M942.5 111V122M943.5 111V122M944.5 110V124M945.5 109V123M946.5 109V124M947.5 111V123M948.5 111V123M949.5 112V124M950.5 112V125M951.5 113V124M952.5 113V124M953.5 113V125M954.5 113V127M955.5 114V126M956.5 114V126M957.5 114V126M958.5 114V126M959.5 114V125M960.5 115V126M961.5 115V128M962.5 115V128M963.5 115V127M964.5 116V127M965.5 116V128M966.5 115V127M967.5 117V129M968.5 115V129M969.5 112V129M970.5 113V129M971.5 115V129M972.5 117V128M973.5 117V128M974.5 116V129M975.5 118V129M976.5 117V129M977.5 118V130M978.5 117V130M979.5 118V131M980.5 118V129M981.5 119V130M982.5 119V130M983.5 119V131M984.5 119V131M985.5 120V132M986.5 118V131M987.5 119V131M988.5 120V132M989.5 119V131M990.5 120V132M991.5 120V132M992.5 121V132M993.5 122V133M994.5 121V133M995.5 122V134M996.5 122V136M997.5 122V133M998.5 122V135M999.5 122V136M1000.5 123V135M1001.5 123V134M1002.5 123V134M1003.5 122V134M1004.5 123V136M1005.5 122V135M1006.5 123V136M1007.5 123V135M1008.5 124V136M1009.5 125V135M1010.5 125V137M1011.5 125V136M1012.5 125V136M1013.5 125V138M1014.5 125V137M1015.5 126V137M1016.5 126V137M1017.5 126V137M1018.5 127V137M1019.5 126V139M1020.5 125V139M1021.5 125V140M1022.5 125V140M1023.5 124V141M1024.5 126V140M1025.5 126V141M1026.5 128V139M1027.5 127V140M1028.5 126V140M1029.5 128V140M1030.5 128V141M1031.5 128V143M1032.5 130V143M1033.5 128V143M1034.5 129V141M1035.5 130V142M1036.5 130V141M1037.5 130V141M1038.5 130V142M1039.5 130V142M1040.5 131V143M1041.5 129V144M1042.5 131V144M1043.5 132V144M1044.5 132V143M1045.5 132V144M1046.5 131V144M1047.5 132V145M1048.5 130V144M1049.5 131V144M1050.5 133V146M1051.5 132V146M1052.5 133V145M1053.5 132V147M1054.5 133V149M1055.5 134V147M1056.5 134V146M1057.5 133V145M1058.5 134V146M1059.5 135V146M1060.5 135V146M1061.5 135V146M1062.5 135V146M1063.5 136V148M1064.5 136V146M1065.5 135V147M1066.5 136V148M1067.5 137V150M1068.5 137V150M1069.5 137V149M1070.5 135V149M1071.5 135V149M1072.5 133V150M1073.5 135V148M1074.5 136V148M1075.5 138V149M1076.5 137V149M1077.5 138V149M1078.5 138V149M1079.5 138V149M1080.5 137V149M1081.5 137V150M1082.5 135V149M1083.5 137V149M1084.5 137V150M1085.5 138V150M1086.5 138V151M1087.5 139V151M1088.5 139V151M1089.5 137V150M1090.5 136V152M1091.5 136V155M1092.5 137V154M1093.5 139V151M1094.5 140V151M1095.5 140V153M1096.5 139V152M1097.5 141V151M1098.5 140V152M1099.5 141V151M1100.5 141V154M1101.5 139V153M1102.5 139V153M1103.5 140V152M1104.5 141V153M1105.5 142V152M1106.5 141V152M1107.5 141V153M1108.5 142V155M1109.5 140V153M1110.5 142V155M1111.5 142V156M1112.5 141V154M1113.5 143V154M1114.5 143V153M1115.5 142V153M1116.5 141V155M1117.5 142V155M1118.5 142V156M1119.5 140V155M1120.5 141V155M1121.5 143V156M1122.5 142V155M1123.5 144V155M1124.5 144V154M1125.5 144V154M1126.5 144V155M1127.5 143V155M1128.5 143V155M1129.5 144V157M1130.5 142V158M1131.5 141V156M1132.5 140V157M1133.5 143V158M1134.5 143V158M1135.5 144V156M1136.5 143V155M1137.5 142V155M1138.5 143V156M1139.5 144V157M1140.5 144V157M1141.5 144V156M1142.5 145V157M1143.5 144V156M1144.5 143V156M1145.5 145V157M1146.5 143V156M1147.5 144V156M1148.5 142V156M1149.5 144V156M1150.5 146V157M1151.5 146V157M1152.5 146V157M1153.5 145V157M1154.5 145V159M1155.5 146V157M1156.5 144V157M1157.5 146V159M1158.5 146V157M1159.5 146V158M1160.5 146V158M1161.5 146V157M1162.5 147V158M1163.5 147V157M1164.5 146V158M1165.5 144V159M1166.5 145V159M1167.5 147V159M1168.5 147V158M1169.5 145V159M1170.5 145V158M1171.5 147V158M1172.5 148V159M1173.5 147V160M1174.5 147V159M1175.5 148V159M1176.5 148V159M1177.5 149V159M1178.5 147V162M1179.5 147V162M1180.5 147V164M1181.5 148V160M1182.5 149V159M1183.5 148V160M1184.5 147V160M1185.5 148V159M1186.5 148V160M1187.5 149V160M1188.5 149V160M1189.5 149V161M1190.5 148V159M1191.5 148V159M1192.5 149V161M1193.5 148V160M1194.5 148V160M1195.5 147V159M1196.5 148V159M1197.5 148V160M1198.5 148V160M1199.5 149V159M1200.5 147V160M1201.5 145V159M1202.5 144V159M1203.5 146V160M1204.5 148V160M1205.5 147V161M1206.5 149V162M1207.5 147V160M1208.5 149V161M1209.5 148V161M1210.5 147V162M1211.5 148V160M1212.5 146V160M1213.5 144V161M1214.5 145V161M1215.5 147V159M1216.5 148V159M1217.5 148V160M1218.5 148V161M1219.5 147V161M1220.5 147V162M1221.5 148V160M1222.5 148V159M1223.5 147V163M1224.5 147V163M1225.5 147V162M1226.5 148V159M1227.5 149V163M1228.5 147V163M1229.5 148V163M1230.5 148V159M1231.5 146V160M1232.5 146V161M1233.5 147V160M1234.5 148V160M1235.5 148V161M1236.5 147V160M1237.5 147V159M1238.5 149V161M1239.5 149V159M1240.5 148V160M1241.5 146V162M1242.5 146V159M1243.5 147V159M1244.5 147V160M1245.5 148V159M1246.5 146V159M1247.5 148V159M1248.5 148V159M1249.5 147V159M1250.5 148V159M1251.5 148V159M1252.5 147V159M1253.5 147V159M1254.5 146V159M1255.5 147V159M1256.5 147V159M1257.5 148V159M1258.5 147V160M1259.5 148V159M1260.5 147V160M1261.5 147V159M1262.5 145V159M1263.5 145V159M1264.5 146V160M1265.5 148V161M1266.5 148V161" stroke="#008c00" stroke-width="1"/>
<path d="M69.0 170 L69.5 138 L70.3 172 L71.4 147 L72.5 159 L73.3 151 L74.4 168 L75.5 131 L76.0 156 L76.5 144 L77.6 166 L78.4 141 L79.2 160 L80.0 135 L80.5 172 L81.3 146 L82.4 164 L83.5 144 L84.0 162 L84.5 139 L85.0 167 L85.5 147 L86.3 172 L87.1 136 L87.6 171 L88.7 137 L89.8 163 L90.6 140 L91.7 168 L92.2 135 L93.3 169 L94.1 140 L94.6 155 L95.4 137 L96.5 154 L97.0 149 L97.8 168 L98.9 153 L99.7 170 L100.2 149 L100.7 166 L101.8 135 L102.9 170 L103.4 131 L103.9 160 L104.4 145 L105.5 171 L106.0 147 L106.8 170 L107.6 135 L108.7 158 L109.5 144 L110.3 165 L111.4 146 L112.5 170 L113.0 137 L114.1 157 L114.6 146 L115.1 162 L115.9 152 L116.4 161 L117.2 154 L118.0 169 L119.1 146 L120.2 167 L121.3 152 L122.4 158 L123.5 148 L124.3 157 L125.1 143 L125.6 171 L126.4 150 L126.9 169 L127.4 141 L128.2 159 L129.0 136 L130.1 159 L130.9 147 L131.4 163 L132.5 152 L133.3 172 L133.8 144 L134.3 161 L135.4 136 L136.2 156 L137.3 142 L137.8 165 L138.9 150 L140.0 159 L140.8 136 L141.3 171 L142.4 148 L143.5 164 L144.3 148 L145.1 169 L146.2 143 L147.0 157 L148.1 147 L148.6 156 L149.1 140 L149.6 167 L150.4 139 L151.2 158 L152.3 143 L153.4 162 L153.9 144 L155.0 169 L155.5 137 L156.3 172 L157.4 141 L158.2 169 L159.3 141 L159.8 168 L160.3 130 L161.4 163 L161.9 146 L163.0 158 L163.5 137 L164.3 172 L165.1 135 L165.6 166 L166.7 148 L167.2 154 L168.0 148 L169.1 166 L169.6 146 L170.4 170 L170.9 140 L171.7 163 L172.8 139 L173.9 160 L174.4 137 L175.5 169 L176.6 140 L177.1 169 L177.6 151 L178.4 165 L179.2 151 L180.3 161 L180.8 135 L181.6 159 L182.4 141 L182.9 159 L183.7 144 L184.5 159 L185.0 142 L185.5 166 L186.3 137 L187.1 154 L187.6 144 L188.4 165 L189.2 150 L189.7 165 L190.2 151 L191.3 163 L192.4 138 L193.2 164 L194.0 139 L194.8 167 L195.3 129 L196.4 167 L197.5 150 L198.0 161 L198.8 147 L199.3 163 L200.4 141 L201.2 157 L201.7 147 L202.5 162 L203.0 140 L203.5 158 L204.0 143 L204.5 157 L205.0 150 L206.1 162 L207.2 146 L207.7 154 L208.5 135 L209.3 163 L209.8 144 L210.3 170 L211.4 137 L212.2 168 L212.7 138 L213.8 156 L214.6 149 L215.4 168 L215.9 133 L216.4 169 L217.5 140 L218.6 161 L219.7 150 L220.5 167 L221.3 136 L222.1 169 L222.9 143 L223.7 153 L224.8 145 L225.3 162 L226.1 143 L226.6 166 L227.7 137 L228.5 174 L229.0 146 L230.1 158 L230.6 149 L231.7 160 L232.2 134 L233.3 152 L234.4 139 L235.2 166 L236.3 136 L236.8 153 L237.6 142 L238.7 159 L239.5 136 L240.3 160 L241.1 145 L241.9 158 L242.4 134 L243.2 159 L244.0 128 L245.1 149 L246.2 132 L247.3 146 L248.1 136 L248.9 162 L249.7 139 L250.5 160 L251.6 135 L252.1 153 L252.9 135 L253.7 149 L254.5 140 L255.0 153 L255.5 135 L256.6 150 L257.7 141 L258.8 157 L259.6 123 L260.4 153 L261.5 141 L262.6 154 L263.7 136 L264.8 146 L265.6 134 L266.1 155 L266.9 140 L268.0 150 L268.8 129 L269.3 144 L270.1 131 L271.2 158 L272.0 122 L272.8 155 L273.3 126 L273.8 150 L274.9 123 L275.4 142 L276.2 139 L276.7 143 L277.2 126 L278.3 149 L278.8 129 L279.9 141 L280.4 133 L281.2 162 L282.0 128 L282.5 146 L283.0 120 L283.8 149 L284.3 134 L285.4 141 L285.9 124 L286.4 140 L287.2 137 L287.7 151 L288.2 121 L289.0 155 L290.1 129 L290.9 143 L291.7 131 L292.2 152 L293.3 120 L293.8 143 L294.3 130 L295.4 153 L295.9 121 L297.0 142 L298.1 132 L299.2 142 L300.3 126 L300.8 138 L301.6 130 L302.1 154 L302.9 123 L303.7 146 L304.2 127 L305.0 151 L305.8 119 L306.9 149 L307.7 130 L308.2 140 L309.0 119 L310.1 149 L310.6 133 L311.1 135 L311.9 118 L312.4 145 L312.9 117 L313.7 139 L314.5 132 L315.3 141 L316.1 120 L316.6 137 L317.7 120 L318.5 134 L319.0 128 L320.1 144 L321.2 114 L322.3 148 L323.4 131 L324.2 140 L325.0 127 L325.8 137 L326.9 113 L328.0 131 L328.5 121 L329.6 146 L330.7 123 L331.2 140 L331.7 120 L332.2 147 L333.3 123 L334.4 134 L334.9 128 L335.7 143 L336.2 118 L337.0 144 L338.1 113 L338.9 132 L339.4 110 L340.2 137 L341.3 112 L342.4 136 L342.9 121 L343.4 130 L343.9 118 L344.7 134 L345.2 123 L345.7 130 L346.2 113 L347.3 130 L348.1 107 L349.2 134 L349.7 111 L350.2 130 L350.7 119 L351.5 136 L352.6 112 L353.7 135 L354.5 111 L355.3 140 L356.1 112 L356.6 135 L357.7 121 L358.5 139 L359.0 115 L360.1 139 L361.2 109 L362.0 142 L363.1 109 L364.2 148 L365.0 110 L365.8 126 L366.9 115 L367.4 141 L368.5 113 L369.3 125 L370.4 107 L371.2 139 L372.0 109 L372.5 141 L373.3 122 L374.4 135 L375.5 119 L376.6 127 L377.7 109 L378.2 135 L378.7 103 L379.8 137 L380.3 115 L381.4 126 L382.5 106 L383.3 132 L384.1 111 L384.9 136 L385.7 115 L386.8 136 L387.9 106 L389.0 126 L389.5 102 L390.6 119 L391.4 113 L392.5 126 L393.6 115 L394.7 135 L395.2 108 L396.0 126 L396.5 100 L397.3 118 L398.1 108 L398.9 118 L400.0 111 L400.8 125 L401.9 108 L402.4 132 L403.5 101 L404.0 115 L404.8 105 L405.9 129 L406.7 99 L407.8 117 L408.6 100 L409.7 117 L410.5 112 L411.0 118 L412.1 93 L412.6 128 L413.7 112 L414.2 122 L415.0 110 L415.5 123 L416.6 93 L417.1 118 L417.6 103 L418.1 118 L419.2 105 L419.7 120 L420.2 108 L420.7 119 L421.2 103 L421.7 120 L422.2 94 L423.3 115 L423.8 103 L424.3 112 L424.8 109 L425.6 118 L426.4 91 L427.5 123 L428.3 103 L429.4 127 L429.9 105 L431.0 117 L431.8 106 L432.6 124 L433.4 102 L433.9 120 L434.7 107 L435.5 123 L436.6 102 L437.7 117 L438.2 95 L439.3 126 L440.1 94 L440.6 122 L441.7 88 L442.5 113 L443.0 90 L443.5 114 L444.3 96 L445.1 123 L446.2 102 L447.3 122 L448.1 102 L449.2 121 L449.7 99 L450.2 113 L451.3 98 L451.8 108 L452.9 99 L453.4 111 L453.9 94 L455.0 122 L456.1 94 L456.6 111 L457.1 95 L457.9 112 L458.4 92 L459.2 112 L460.0 91 L461.1 121 L462.2 94 L462.7 119 L463.2 102 L464.0 113 L465.1 92 L466.2 115 L466.7 95 L467.2 111 L467.7 90 L468.8 104 L469.6 84 L470.7 114 L471.8 99 L472.6 104 L473.1 94 L473.6 108 L474.1 88 L474.9 120 L476.0 99 L476.8 103 L477.3 84 L478.4 103 L479.5 91 L480.3 102 L481.4 92 L482.5 106 L483.6 90 L484.7 104 L485.2 91 L486.3 116 L486.8 95 L487.3 105 L487.8 87 L488.3 113 L489.4 93 L490.5 107 L491.0 85 L491.5 104 L492.0 81 L493.1 102 L494.2 84 L495.3 115 L495.8 88 L496.6 102 L497.4 95 L498.2 109 L499.3 88 L500.1 98 L501.2 92 L502.0 104 L503.1 87 L503.9 113 L504.7 89 L505.5 100 L506.3 92 L507.1 104 L507.6 86 L508.7 104 L509.2 79 L510.0 100 L510.5 79 L511.3 103 L512.1 89 L512.9 109 L514.0 83 L514.8 102 L515.3 89 L516.1 105 L517.2 82 L518.3 105 L519.1 86 L519.6 99 L520.7 88 L521.2 98 L522.3 77 L523.1 104 L523.9 84 L525.0 102 L526.1 90 L526.6 96 L527.4 79 L528.5 98 L529.6 86 L530.4 93 L530.9 87 L532.0 107 L532.8 80 L533.6 103 L534.7 81 L535.5 102 L536.6 79 L537.4 106 L538.5 89 L539.6 101 L540.4 77 L540.9 107 L541.4 82 L541.9 98 L542.7 84 L543.2 93 L544.3 70 L545.1 106 L546.2 87 L547.0 105 L548.1 75 L548.6 88 L549.7 83 L550.2 106 L550.7 81 L551.2 99 L552.3 73 L553.4 92 L553.9 75 L555.0 93 L556.1 69 L556.6 97 L557.7 75 L558.2 109 L559.0 75 L559.5 98 L560.3 80 L560.8 93 L561.6 69 L562.1 92 L563.2 81 L564.0 90 L565.1 69 L565.9 96 L566.4 67 L567.2 91 L568.3 70 L569.4 88 L570.5 67 L571.6 89 L572.7 80 L573.8 98 L574.3 67 L574.8 98 L575.6 66 L576.7 87 L577.8 79 L578.3 93 L578.8 62 L579.3 86 L579.8 72 L580.6 94 L581.4 77 L582.2 83 L583.3 76 L584.4 91 L585.2 78 L586.3 91 L587.4 67 L587.9 94 L588.4 63 L588.9 85 L590.0 74 L591.1 90 L591.6 78 L592.7 85 L593.2 73 L594.3 86 L595.4 77 L596.2 93 L596.7 77 L597.2 86 L598.0 74 L598.5 93 L599.0 73 L599.8 80 L600.3 75 L601.4 87 L601.9 74 L602.7 81 L603.8 71 L604.3 84 L605.1 68 L605.9 80 L606.4 76 L607.2 86 L608.0 65 L608.8 95 L609.6 67 L610.4 81 L611.2 74 L611.7 91 L612.5 68 L613.3 95 L614.1 66 L614.6 93 L615.4 75 L616.2 89 L616.7 66 L617.2 93 L617.7 60 L618.8 84 L619.3 72 L620.1 80 L621.2 63 L621.7 78 L622.2 63 L623.0 87 L623.5 60 L624.0 87 L624.5 75 L625.3 83 L626.1 60 L627.2 86 L627.7 75 L628.5 86 L629.0 65 L629.8 90 L630.6 70 L631.1 83 L631.6 58 L632.7 78 L633.2 59 L633.7 94 L634.5 63 L635.3 99 L636.1 61 L637.2 93 L638.0 66 L639.1 84 L640.2 67 L640.7 85 L641.8 57 L642.9 80 L643.4 66 L644.5 92 L645.6 69 L646.1 91 L647.2 58 L648.0 81 L649.1 68 L649.9 82 L650.7 56 L651.8 81 L652.3 67 L652.8 92 L653.9 68 L654.4 78 L654.9 61 L656.0 88 L656.8 61 L657.3 85 L658.1 65 L659.2 78 L660.0 61 L660.8 97 L661.9 61 L662.7 87 L663.5 57 L664.3 82 L665.1 56 L666.2 76 L667.0 65 L667.8 82 L668.6 68 L669.7 88 L670.5 68 L671.3 93 L672.1 57 L672.6 94 L673.7 71 L674.2 85 L675.0 66 L675.5 76 L676.0 55 L677.1 97 L677.9 71 L679.0 78 L679.8 67 L680.3 80 L680.8 67 L681.9 78 L682.7 72 L683.5 82 L684.6 61 L685.7 87 L686.5 58 L687.6 80 L688.4 71 L688.9 76 L689.7 60 L690.2 77 L691.3 68 L691.8 76 L692.6 61 L693.1 85 L693.6 73 L694.4 86 L695.5 66 L696.0 81 L696.5 72 L697.6 80 L698.7 72 L699.5 78 L700.0 58 L700.8 81 L701.3 52 L702.4 85 L703.2 73 L703.7 80 L704.8 55 L705.6 93 L706.7 71 L707.5 83 L708.3 73 L709.1 89 L710.2 70 L711.3 82 L712.4 70 L712.9 92 L713.7 74 L714.5 94 L715.0 66 L715.5 81 L716.6 72 L717.4 86 L718.2 71 L719.3 78 L719.8 57 L720.9 82 L721.4 76 L722.5 86 L723.0 76 L723.5 89 L724.3 54 L725.1 83 L726.2 70 L726.7 95 L727.5 75 L728.0 90 L728.5 70 L729.0 92 L729.8 57 L730.6 91 L731.7 72 L732.8 86 L733.9 62 L735.0 82 L735.8 60 L736.3 90 L737.4 60 L738.5 80 L739.6 71 L740.1 89 L741.2 67 L742.3 87 L743.1 61 L743.9 81 L745.0 61 L746.1 87 L746.6 66 L747.7 97 L748.8 72 L749.9 88 L750.4 66 L751.5 91 L752.0 64 L753.1 81 L754.2 64 L755.0 95 L755.5 63 L756.0 95 L756.5 73 L757.3 99 L757.8 67 L758.9 93 L759.7 64 L760.8 99 L761.6 69 L762.7 93 L763.5 65 L764.6 85 L765.7 77 L766.8 97 L767.6 69 L768.4 98 L768.9 75 L770.0 94 L770.8 77 L771.9 98 L773.0 82 L774.1 89 L775.2 82 L775.7 91 L776.2 75 L776.7 101 L777.5 79 L778.3 93 L778.8 72 L779.6 102 L780.4 75 L780.9 91 L781.4 81 L781.9 93 L782.4 72 L783.5 94 L784.3 71 L784.8 92 L785.3 83 L786.4 97 L787.5 80 L788.0 89 L789.1 80 L790.2 104 L790.7 76 L791.8 99 L792.9 80 L793.7 93 L794.2 77 L795.0 100 L796.1 69 L796.6 95 L797.1 69 L797.6 95 L798.4 86 L799.2 95 L800.0 78 L801.1 90 L802.2 85 L803.3 94 L804.4 85 L804.9 96 L806.0 82 L806.8 95 L807.6 86 L808.1 92 L808.9 75 L809.7 98 L810.5 81 L811.0 113 L811.5 73 L812.3 102 L813.4 82 L813.9 96 L814.7 75 L815.8 94 L816.9 79 L818.0 98 L818.8 79 L819.3 105 L819.8 77 L820.6 104 L821.7 73 L822.5 109 L823.0 79 L824.1 105 L824.6 73 L825.4 104 L826.5 82 L827.3 109 L827.8 80 L828.9 101 L830.0 77 L831.1 106 L831.6 90 L832.1 101 L832.9 89 L834.0 102 L835.1 89 L835.6 99 L836.7 76 L837.8 112 L838.6 82 L839.1 108 L839.6 93 L840.7 107 L841.5 77 L842.3 112 L843.1 77 L843.6 110 L844.1 87 L844.6 101 L845.4 90 L846.5 103 L847.3 91 L847.8 109 L848.6 87 L849.4 100 L850.2 80 L850.7 101 L851.5 83 L852.6 102 L853.4 84 L854.5 110 L855.6 84 L856.1 114 L856.9 85 L857.4 101 L858.2 80 L859.0 101 L860.1 96 L861.2 107 L862.3 99 L863.1 109 L863.9 86 L865.0 119 L865.5 93 L866.6 104 L867.7 84 L868.5 103 L869.0 90 L869.8 101 L870.6 85 L871.4 105 L872.5 90 L873.0 125 L874.1 101 L874.9 118 L875.4 94 L876.5 117 L877.6 90 L878.4 111 L879.5 97 L880.6 126 L881.4 92 L881.9 119 L883.0 94 L883.8 116 L884.3 101 L885.1 106 L885.9 89 L886.7 115 L887.8 94 L888.6 116 L889.1 99 L889.6 108 L890.1 93 L890.9 117 L892.0 92 L893.1 120 L893.9 89 L894.7 125 L895.8 92 L896.6 124 L897.4 104 L898.5 118 L899.0 91 L899.8 111 L900.9 108 L901.7 121 L902.2 90 L902.7 124 L903.5 94 L904.3 122 L904.8 95 L905.9 114 L906.7 91 L907.2 118 L908.3 91 L909.1 127 L910.2 106 L910.7 129 L911.5 108 L912.0 113 L913.1 94 L914.2 124 L915.3 99 L916.1 129 L916.9 98 L917.4 118 L918.2 101 L918.7 127 L919.2 99 L920.3 118 L921.4 111 L922.5 117 L923.6 110 L924.4 120 L925.5 104 L926.0 128 L927.1 97 L927.9 116 L929.0 112 L929.5 118 L930.0 110 L930.5 118 L931.6 103 L932.1 130 L933.2 99 L934.0 130 L934.5 104 L935.3 129 L936.4 114 L936.9 127 L937.4 102 L938.5 117 L939.6 113 L940.1 118 L940.9 114 L941.4 129 L941.9 100 L943.0 123 L944.1 116 L945.2 140 L946.3 115 L947.4 122 L948.2 109 L948.7 125 L949.8 104 L950.9 133 L952.0 113 L953.1 127 L954.2 107 L954.7 136 L955.2 112 L956.0 138 L956.5 103 L957.0 134 L958.1 118 L959.2 122 L960.0 119 L961.1 127 L962.2 102 L963.0 134 L964.1 120 L965.2 123 L966.0 104 L967.1 133 L967.9 103 L968.4 133 L969.5 116 L970.6 137 L971.1 109 L972.2 129 L972.7 101 L973.2 128 L974.0 107 L975.1 138 L975.9 116 L976.4 127 L976.9 122 L978.0 126 L979.1 119 L979.9 137 L980.4 110 L981.5 125 L982.6 103 L983.1 141 L983.6 109 L984.4 128 L984.9 109 L985.4 136 L986.5 123 L987.6 143 L988.1 110 L989.2 132 L989.7 118 L990.2 132 L990.7 116 L991.8 137 L992.9 114 L994.0 142 L994.8 104 L995.9 133 L996.4 108 L997.5 131 L998.0 109 L999.1 138 L999.9 105 L1001.0 138 L1001.8 113 L1002.9 144 L1003.4 126 L1003.9 136 L1005.0 127 L1006.1 139 L1006.9 114 L1008.0 139 L1008.5 123 L1009.0 140 L1010.1 114 L1010.9 136 L1011.7 122 L1012.2 138 L1013.3 129 L1013.8 139 L1014.9 113 L1015.4 133 L1015.9 128 L1016.7 136 L1017.8 126 L1018.6 135 L1019.1 122 L1019.9 147 L1020.7 124 L1021.8 143 L1022.3 115 L1022.8 149 L1023.3 126 L1024.4 147 L1025.5 126 L1026.3 140 L1026.8 121 L1027.3 151 L1028.1 116 L1028.6 137 L1029.4 127 L1029.9 138 L1030.4 121 L1031.2 150 L1032.0 121 L1032.8 145 L1033.3 127 L1034.1 152 L1034.9 119 L1036.0 154 L1037.1 133 L1037.6 151 L1038.4 123 L1039.5 149 L1040.3 135 L1040.8 153 L1041.9 115 L1042.4 155 L1042.9 119 L1043.4 147 L1043.9 131 L1044.4 144 L1045.5 123 L1046.0 149 L1047.1 126 L1047.9 153 L1048.7 122 L1049.5 160 L1050.3 129 L1051.4 153 L1052.5 136 L1053.3 152 L1053.8 138 L1054.9 146 L1055.7 135 L1056.2 143 L1057.3 125 L1057.8 152 L1058.9 138 L1059.7 158 L1060.2 128 L1061.3 156 L1062.1 128 L1062.6 147 L1063.4 123 L1063.9 145 L1064.7 137 L1065.2 155 L1066.0 135 L1066.5 164 L1067.6 135 L1068.1 148 L1069.2 135 L1070.0 160 L1070.5 134 L1071.0 147 L1072.1 132 L1072.9 156 L1074.0 137 L1075.1 151 L1076.2 132 L1077.3 148 L1078.1 128 L1079.2 154 L1080.0 141 L1080.5 161 L1081.3 141 L1082.1 156 L1083.2 140 L1083.7 147 L1084.5 132 L1085.6 152 L1086.1 127 L1086.9 150 L1088.0 129 L1088.8 153 L1089.9 138 L1090.7 159 L1091.2 122 L1091.7 156 L1092.8 136 L1093.9 149 L1094.7 141 L1095.2 163 L1095.7 144 L1096.2 154 L1097.0 132 L1097.8 149 L1098.6 144 L1099.7 165 L1100.5 134 L1101.3 157 L1102.1 136 L1103.2 148 L1103.7 136 L1104.5 154 L1105.6 142 L1106.4 157 L1107.2 136 L1108.3 157 L1108.8 140 L1109.9 150 L1110.4 138 L1111.5 157 L1112.6 143 L1113.4 165 L1114.5 143 L1115.3 162 L1116.1 126 L1117.2 158 L1118.3 133 L1118.8 162 L1119.6 130 L1120.1 150 L1120.6 132 L1121.7 155 L1122.2 131 L1123.3 162 L1124.1 146 L1125.2 150 L1126.3 141 L1126.8 166 L1127.9 132 L1128.7 158 L1129.5 137 L1130.0 154 L1130.8 148 L1131.9 164 L1133.0 145 L1133.5 156 L1134.3 127 L1134.8 167 L1135.9 139 L1136.4 167 L1137.2 149 L1137.7 155 L1138.5 137 L1139.6 157 L1140.4 136 L1141.5 155 L1142.0 146 L1143.1 153 L1144.2 143 L1145.3 160 L1146.1 143 L1146.6 155 L1147.7 140 L1148.5 166 L1149.3 138 L1150.4 167 L1151.5 138 L1152.3 162 L1152.8 137 L1153.6 154 L1154.4 149 L1154.9 155 L1155.7 137 L1156.5 175 L1157.3 145 L1157.8 170 L1158.9 138 L1159.7 157 L1160.2 148 L1161.0 165 L1162.1 136 L1162.6 159 L1163.1 133 L1164.2 167 L1165.3 143 L1166.1 156 L1166.6 139 L1167.1 159 L1168.2 146 L1169.3 163 L1169.8 151 L1170.6 168 L1171.1 139 L1171.9 158 L1172.7 149 L1173.2 162 L1174.0 138 L1174.8 166 L1175.9 143 L1176.7 172 L1177.5 141 L1178.6 166 L1179.4 151 L1180.5 158 L1181.0 140 L1181.8 166 L1182.6 147 L1183.1 165 L1184.2 152 L1185.3 168 L1185.8 139 L1186.3 168 L1187.4 144 L1188.2 170 L1189.0 151 L1190.1 173 L1190.6 147 L1191.7 162 L1192.8 143 L1193.3 168 L1194.1 153 L1195.2 161 L1196.3 146 L1196.8 155 L1197.9 140 L1199.0 163 L1199.5 140 L1200.6 173 L1201.7 144 L1202.5 155 L1203.3 152 L1203.8 169 L1204.6 143 L1205.4 169 L1206.5 145 L1207.0 169 L1207.5 148 L1208.3 170 L1208.8 144 L1209.6 166 L1210.4 150 L1210.9 167 L1211.4 147 L1212.5 167 L1213.0 149 L1213.8 170 L1214.3 149 L1215.4 171 L1216.2 145 L1216.7 177 L1217.8 136 L1218.6 163 L1219.1 139 L1219.6 163 L1220.4 141 L1221.2 165 L1222.3 136 L1223.1 154 L1223.9 139 L1224.4 169 L1225.2 137 L1226.3 166 L1227.1 139 L1228.2 157 L1229.0 144 L1230.1 171 L1231.2 137 L1232.3 166 L1232.8 139 L1233.3 168 L1234.1 140 L1234.9 167 L1235.4 141 L1235.9 159 L1236.4 151 L1236.9 158 L1237.7 136 L1238.8 158 L1239.9 146 L1241.0 167 L1241.8 142 L1242.3 157 L1243.1 135 L1244.2 163 L1244.7 143 L1245.8 160 L1246.3 137 L1247.4 167 L1248.2 136 L1248.7 156 L1249.8 140 L1250.3 170 L1251.4 131 L1252.5 170 L1253.6 152 L1254.4 167 L1254.9 136 L1256.0 164 L1256.5 146 L1257.3 162 L1257.8 136 L1258.3 156 L1259.1 152 L1259.9 159 L1260.4 147 L1260.9 159 L1261.7 146 L1262.2 169 L1263.3 150 L1264.1 167 L1265.2 152" fill="none" stroke="#00b800" stroke-width="1.3"/>
<path d="M69.5 48V55M70.5 48V55M71.5 47V53M72.5 48V55M73.5 47V53M74.5 49V55M75.5 48V54M76.5 49V55M77.5 48V53M78.5 49V55M79.5 47V55M80.5 49V55M81.5 48V55M82.5 48V54M83.5 48V55M84.5 47V55M85.5 48V55M86.5 47V55M87.5 48V54M88.5 47V55M89.5 49V55M90.5 48V54M91.5 48V54M92.5 47V53M93.5 48V54M94.5 47V55M95.5 48V54M96.5 48V54M97.5 48V55M98.5 49V53M99.5 48V53M100.5 49V55M101.5 49V53M102.5 49V55M103.5 49V55M104.5 48V54M105.5 49V53M106.5 47V54M107.5 48V54M108.5 48V55M109.5 49V55M110.5 48V55M111.5 47V54M112.5 47V54M113.5 48V55M114.5 48V53M115.5 48V54M116.5 48V55M117.5 48V54M118.5 48V55M119.5 49V55M120.5 48V53M121.5 48V55M122.5 48V54M123.5 47V55M124.5 48V54M125.5 48V55M126.5 49V55M127.5 49V55M128.5 47V54M129.5 48V53M130.5 48V55M131.5 48V54M132.5 48V53M133.5 49V54M134.5 49V55M135.5 48V54M136.5 48V53M137.5 48V55M138.5 47V54M139.5 48V55M140.5 48V54M141.5 48V53M142.5 48V53M143.5 48V53M144.5 49V55M145.5 48V54M146.5 48V54M147.5 48V55M148.5 49V54M149.5 48V55M150.5 48V55M151.5 49V55M152.5 49V53M153.5 48V54M154.5 47V54M155.5 48V55M156.5 48V54M157.5 49V53M158.5 48V54M159.5 48V53M160.5 49V55M161.5 48V54M162.5 48V54M163.5 49V54M164.5 48V54M165.5 48V54M166.5 48V54M167.5 48V55M168.5 48V53M169.5 47V55M170.5 48V54M171.5 48V53M172.5 48V53M173.5 48V55M174.5 47V53M175.5 48V54M176.5 49V55M177.5 49V53M178.5 49V54M179.5 48V54M180.5 48V55M181.5 47V53M182.5 49V55M183.5 48V53M184.5 49V54M185.5 49V55M186.5 47V54M187.5 47V54M188.5 47V54M189.5 48V54M190.5 49V55M191.5 49V54M192.5 48V55M193.5 48V54M194.5 49V55M195.5 47V54M196.5 48V53M197.5 48V55M198.5 47V54M199.5 48V55M200.5 48V55M201.5 47V55M202.5 48V55M203.5 49V55M204.5 48V53M205.5 49V55M206.5 48V53M207.5 48V55M208.5 47V53M209.5 48V55M210.5 48V55M211.5 48V53M212.5 49V55M213.5 47V54M214.5 47V53M215.5 48V55M216.5 49V54M217.5 48V54M218.5 48V55M219.5 47V54M220.5 48V53M221.5 49V55M222.5 48V53M223.5 48V55M224.5 47V54M225.5 49V55M226.5 47V54M227.5 47V55M228.5 47V55M229.5 48V54M230.5 47V54M231.5 49V55M232.5 48V53M233.5 49V55M234.5 49V55M235.5 47V54M236.5 48V54M237.5 48V54M238.5 47V55M239.5 48V54M240.5 49V54M241.5 48V55M242.5 48V53M243.5 48V55M244.5 48V55M245.5 49V53M246.5 48V54M247.5 48V54M248.5 48V55M249.5 48V54M250.5 48V54M251.5 48V55M252.5 49V53M253.5 47V55M254.5 49V54M255.5 48V54M256.5 49V55M257.5 49V54M258.5 48V54M259.5 48V54M260.5 47V55M261.5 47V55M262.5 48V54M263.5 48V54M264.5 47V54M265.5 48V55M266.5 48V54M267.5 48V55M268.5 47V55M269.5 48V54M270.5 49V55M271.5 48V54M272.5 47V55M273.5 48V54M274.5 49V55M275.5 49V55M276.5 48V54M277.5 49V55M278.5 48V54M279.5 48V53M280.5 47V55M281.5 47V54M282.5 47V55M283.5 47V54M284.5 48V53M285.5 49V54M286.5 48V53M287.5 49V55M288.5 48V55M289.5 48V55M290.5 48V55M291.5 48V54M292.5 49V53M293.5 47V54M294.5 47V53M295.5 49V54M296.5 48V54M297.5 49V53M298.5 49V55M299.5 47V54M300.5 48V55M301.5 47V55M302.5 47V54M303.5 48V55M304.5 47V55M305.5 48V54M306.5 47V55M307.5 48V54M308.5 49V53M309.5 49V53M310.5 48V54M311.5 48V55M312.5 48V54M313.5 48V55M314.5 49V53M315.5 48V54M316.5 49V54M317.5 49V55M318.5 48V54M319.5 48V54M320.5 49V54M321.5 48V55M322.5 47V55M323.5 48V54M324.5 47V55M325.5 47V53M326.5 48V54M327.5 49V54M328.5 47V55M329.5 48V54M330.5 47V55M331.5 48V55M332.5 48V54M333.5 48V53M334.5 49V54M335.5 49V54M336.5 48V53M337.5 49V53M338.5 49V55M339.5 48V55M340.5 49V55M341.5 48V54M342.5 48V54M343.5 49V55M344.5 49V55M345.5 47V54M346.5 47V55M347.5 49V55M348.5 48V53M349.5 48V54M350.5 48V53M351.5 48V54M352.5 48V54M353.5 48V55M354.5 49V54M355.5 48V55M356.5 48V55M357.5 48V54M358.5 47V55M359.5 48V54M360.5 48V55M361.5 49V54M362.5 48V55M363.5 48V53M364.5 47V55M365.5 47V55M366.5 48V53M367.5 48V55M368.5 48V54M369.5 47V54M370.5 48V54M371.5 47V55M372.5 48V54M373.5 48V55M374.5 47V54M375.5 48V53M376.5 48V55M377.5 49V55M378.5 48V53M379.5 47V55M380.5 49V54M381.5 48V55M382.5 48V54M383.5 47V55M384.5 48V54M385.5 49V55M386.5 49V54M387.5 48V54M388.5 48V55M389.5 49V53M390.5 49V55M391.5 49V55M392.5 47V55M393.5 48V53M394.5 48V55M395.5 48V54M396.5 47V53M397.5 48V54M398.5 48V54M399.5 48V54M400.5 48V54M401.5 48V53M402.5 47V55M403.5 48V54M404.5 47V54M405.5 47V55M406.5 47V55M407.5 47V55M408.5 48V55M409.5 48V55M410.5 49V54M411.5 48V55M412.5 48V54M413.5 48V54M414.5 47V54M415.5 47V54M416.5 48V54M417.5 47V53M418.5 49V55M419.5 48V54M420.5 47V55M421.5 49V55M422.5 48V55M423.5 49V53M424.5 48V54M425.5 48V54M426.5 49V55M427.5 47V55M428.5 49V54M429.5 47V55M430.5 48V53M431.5 48V55M432.5 48V55M433.5 48V55M434.5 48V55M435.5 48V54M436.5 49V55M437.5 48V54M438.5 49V54M439.5 48V54M440.5 49V55M441.5 48V55M442.5 49V55M443.5 49V53M444.5 48V55M445.5 47V55M446.5 48V54M447.5 48V55M448.5 47V53M449.5 48V54M450.5 48V53M451.5 48V55M452.5 47V55M453.5 48V55M454.5 49V53M455.5 48V55M456.5 49V54M457.5 47V54M458.5 48V55M459.5 48V54M460.5 49V53M461.5 48V54M462.5 49V55M463.5 47V55M464.5 48V53M465.5 48V54M466.5 48V53M467.5 48V55M468.5 48V53M469.5 49V55M470.5 48V54M471.5 48V55M472.5 48V55M473.5 48V54M474.5 48V54M475.5 49V54M476.5 49V54M477.5 48V53M478.5 47V54M479.5 48V55M480.5 49V54M481.5 48V54M482.5 48V54M483.5 47V55M484.5 48V55M485.5 48V54M486.5 47V54M487.5 47V55M488.5 48V54M489.5 48V55M490.5 49V55M491.5 48V55M492.5 48V54M493.5 47V55M494.5 49V54M495.5 48V55M496.5 48V54M497.5 48V54M498.5 48V55M499.5 48V55M500.5 48V55M501.5 48V55M502.5 47V54M503.5 47V54M504.5 47V54M505.5 48V54M506.5 48V55M507.5 49V55M508.5 48V54M509.5 48V54M510.5 48V53M511.5 48V55M512.5 47V54M513.5 48V55M514.5 48V55M515.5 48V55M516.5 48V54M517.5 48V55M518.5 47V54M519.5 49V55M520.5 49V55M521.5 48V53M522.5 47V55M523.5 48V53M524.5 48V55M525.5 48V53M526.5 49V55M527.5 47V53M528.5 49V54M529.5 48V54M530.5 49V55M531.5 47V54M532.5 48V55M533.5 48V55M534.5 47V53M535.5 48V55M536.5 49V53M537.5 48V55M538.5 47V55M539.5 48V53M540.5 49V55M541.5 48V54M542.5 48V54M543.5 48V55M544.5 48V54M545.5 48V54M546.5 48V54M547.5 48V55M548.5 47V55M549.5 49V54M550.5 48V54M551.5 48V54M552.5 48V55M553.5 48V53M554.5 48V55M555.5 48V55M556.5 48V54M557.5 47V54M558.5 49V55M559.5 48V54M560.5 48V54M561.5 47V55M562.5 49V54M563.5 49V55M564.5 48V54M565.5 49V55M566.5 49V54M567.5 48V55M568.5 48V54M569.5 48V55M570.5 47V54M571.5 49V55M572.5 48V54M573.5 48V55M574.5 49V54M575.5 47V54M576.5 49V55M577.5 48V53M578.5 49V54M579.5 48V55M580.5 48V54M581.5 49V54M582.5 48V55M583.5 48V54M584.5 47V53M585.5 49V54M586.5 49V54M587.5 49V55M588.5 48V55M589.5 47V55M590.5 48V54M591.5 48V55M592.5 48V55M593.5 47V53M594.5 48V55M595.5 48V55M596.5 48V55M597.5 48V55M598.5 48V54M599.5 47V54M600.5 48V54M601.5 48V54M602.5 48V55M603.5 48V54M604.5 48V55M605.5 48V55M606.5 47V55M607.5 48V53M608.5 48V53M609.5 49V55M610.5 49V55M611.5 48V53M612.5 48V53M613.5 47V54M614.5 47V53M615.5 47V55M616.5 47V54M617.5 48V55M618.5 49V55M619.5 48V54M620.5 48V55M621.5 48V55M622.5 49V54M623.5 48V54M624.5 48V53M625.5 48V53M626.5 49V55M627.5 47V55M628.5 48V55M629.5 49V53M630.5 48V55M631.5 49V55M632.5 47V54M633.5 48V54M634.5 47V55M635.5 48V53M636.5 48V54M637.5 48V54M638.5 49V54M639.5 48V54M640.5 49V54M641.5 48V55M642.5 49V55M643.5 48V55M644.5 49V55M645.5 47V54M646.5 48V54M647.5 49V55M648.5 47V53M649.5 48V54M650.5 48V55M651.5 47V53M652.5 49V54M653.5 49V55M654.5 48V55M655.5 47V54M656.5 47V54M657.5 47V55M658.5 48V54M659.5 48V54M660.5 49V55M661.5 49V55M662.5 47V55M663.5 48V54M664.5 48V55M665.5 48V53M666.5 49V53M667.5 49V55M675.5 48V54M676.5 47V54M677.5 48V55M678.5 48V53M679.5 49V55M680.5 48V54M681.5 48V55M682.5 47V55M683.5 48V55M684.5 48V55M685.5 47V54M686.5 49V54M687.5 47V53M688.5 48V53M689.5 47V55M690.5 48V53M691.5 47V55M692.5 48V53M693.5 47V55M694.5 48V54M695.5 48V55M696.5 49V55M697.5 48V54M698.5 47V55M699.5 48V55M700.5 48V54M701.5 49V54M702.5 48V54M703.5 48V55M704.5 48V54M705.5 48V54M706.5 48V54M707.5 48V55M708.5 47V55M709.5 48V54M710.5 49V54M711.5 48V55M712.5 48V54M713.5 49V55M714.5 48V55M715.5 48V55M716.5 48V55M717.5 47V55M718.5 49V55M719.5 48V55M720.5 48V54M721.5 47V55M722.5 48V55M723.5 47V54M724.5 48V53M725.5 48V54M726.5 47V55M727.5 48V54M728.5 48V53M729.5 48V55M730.5 48V55M731.5 48V55M732.5 48V55M733.5 48V55M734.5 48V54M735.5 49V55M736.5 47V55M737.5 48V54M738.5 47V54M739.5 48V55M740.5 48V55M741.5 47V55M742.5 48V54M743.5 48V54M744.5 47V53M745.5 49V53M746.5 48V53M747.5 48V54M748.5 47V55M749.5 48V53M750.5 47V53M751.5 49V55M752.5 48V54M753.5 48V53M754.5 48V55M755.5 48V53M756.5 47V54M757.5 48V55M758.5 48V55M759.5 49V55M760.5 48V54M761.5 47V53M762.5 49V53M763.5 48V55M764.5 48V54M765.5 47V54M766.5 49V53M767.5 47V54M768.5 47V54M769.5 48V54M770.5 48V54M771.5 48V55M772.5 48V54M773.5 48V55M774.5 48V54M775.5 48V54M776.5 49V55M777.5 49V55M778.5 47V55M779.5 48V54M780.5 49V55M781.5 47V55M782.5 49V54M783.5 47V54M784.5 47V53M785.5 48V53M786.5 48V53M787.5 47V54M788.5 48V54M789.5 48V54M790.5 48V53M791.5 48V53M792.5 49V53M793.5 48V53M794.5 48V54M795.5 48V55M796.5 48V53M797.5 47V55M798.5 48V55M799.5 48V55M800.5 47V53M801.5 49V53M802.5 47V54M803.5 48V55M804.5 48V55M805.5 47V55M806.5 49V55M807.5 48V53M808.5 49V54M809.5 48V54M810.5 48V54M811.5 49V54M812.5 48V54M813.5 48V55M814.5 48V53M815.5 48V54M816.5 48V53M817.5 48V54M818.5 48V54M819.5 48V54M820.5 48V55M821.5 49V54M822.5 48V54M823.5 48V53M824.5 49V54M825.5 48V54M826.5 48V54M827.5 48V54M828.5 48V54M829.5 49V54M830.5 48V53M831.5 48V55M832.5 48V53M833.5 48V54M834.5 47V55M835.5 49V53M836.5 48V53M837.5 48V54M838.5 49V55M839.5 48V54M840.5 49V54M841.5 49V55M842.5 48V54M843.5 48V54M844.5 47V55M845.5 48V55M846.5 48V54M847.5 49V54M848.5 48V55M849.5 47V54M850.5 49V53M851.5 47V55M852.5 47V53M853.5 49V55M854.5 47V54M855.5 48V55M856.5 47V54M857.5 47V55M858.5 48V54M859.5 49V54M860.5 49V55M861.5 47V55M862.5 48V54M863.5 48V55M864.5 48V55M865.5 48V55M866.5 48V53M867.5 48V55M868.5 48V55M869.5 49V55M870.5 48V54M871.5 48V54M872.5 48V55M873.5 48V55M874.5 48V54M875.5 48V54M876.5 48V55M877.5 48V55M878.5 48V53M879.5 47V54M880.5 48V54M881.5 48V53M882.5 48V54M883.5 48V55M884.5 48V53M885.5 47V54M886.5 48V55M887.5 49V53M888.5 48V53M889.5 48V55M890.5 47V55M891.5 47V54M892.5 48V55M893.5 48V54M894.5 47V53M895.5 49V55M896.5 48V55M897.5 48V54M898.5 47V54M899.5 48V53M900.5 48V54M901.5 47V54M902.5 47V55M903.5 48V54M904.5 48V53M905.5 48V53M906.5 48V54M907.5 48V55M908.5 47V55M909.5 48V55M910.5 48V55M911.5 48V55M912.5 47V55M913.5 48V54M914.5 48V55M915.5 48V55M916.5 49V55M917.5 47V53M918.5 49V55M919.5 49V53M920.5 48V54M921.5 49V55M922.5 47V54M923.5 48V54M924.5 48V54M925.5 48V54M926.5 48V53M927.5 48V54M928.5 48V55M929.5 48V55M930.5 48V55M931.5 48V54M932.5 48V54M933.5 48V55M934.5 47V54M935.5 48V54M936.5 47V54M937.5 48V55M938.5 47V55M939.5 47V55M940.5 48V53M941.5 47V55M942.5 48V54M943.5 48V55M944.5 48V54M945.5 48V55M946.5 49V53M947.5 47V53M948.5 49V54M949.5 48V54M950.5 49V55M951.5 48V53M952.5 49V53M953.5 48V54M954.5 47V53M955.5 49V55M956.5 48V54M957.5 47V54M958.5 47V54M959.5 48V55M960.5 47V54M961.5 48V54M962.5 48V54M963.5 48V55M964.5 48V55M965.5 48V53M966.5 49V53M967.5 47V54M968.5 48V54M969.5 48V55M970.5 48V55M971.5 48V55M972.5 49V54M973.5 49V54M974.5 48V55M975.5 47V53M976.5 48V53M977.5 48V53M978.5 47V55M979.5 47V54M980.5 48V55M981.5 49V55M982.5 48V55M983.5 48V54M984.5 47V54M985.5 47V53M986.5 47V54M987.5 48V53M988.5 48V55M989.5 47V55M990.5 47V54M991.5 47V54M992.5 49V54M993.5 47V55M994.5 49V55M995.5 47V54M996.5 48V55M997.5 49V54M998.5 49V55M999.5 49V54M1000.5 48V55M1001.5 48V53M1002.5 47V54M1003.5 49V55M1004.5 47V55M1005.5 49V53M1006.5 49V55M1007.5 48V54M1008.5 48V54M1009.5 48V55M1010.5 47V54M1011.5 48V54M1012.5 48V54M1013.5 47V55M1014.5 48V54M1015.5 47V53M1016.5 48V54M1017.5 47V53M1018.5 49V53M1019.5 48V53M1020.5 47V54M1021.5 48V54M1022.5 48V53M1023.5 49V55M1024.5 49V55M1025.5 48V55M1026.5 48V53M1027.5 48V55M1028.5 48V54M1029.5 48V54M1030.5 47V54M1031.5 48V54M1032.5 49V54M1033.5 48V55M1034.5 49V55M1035.5 48V54M1036.5 48V55M1037.5 48V53M1038.5 47V55M1039.5 48V54M1040.5 47V54M1041.5 47V55M1042.5 48V53M1043.5 48V53M1044.5 48V54M1045.5 48V54M1046.5 48V55M1047.5 48V54M1048.5 48V54M1049.5 48V55M1050.5 49V55M1051.5 47V55M1052.5 48V54M1053.5 48V54M1054.5 48V55M1055.5 48V55M1056.5 47V55M1057.5 47V54M1058.5 48V54M1059.5 48V54M1060.5 48V55M1061.5 48V55M1062.5 48V54M1063.5 48V54M1064.5 48V55M1065.5 48V54M1066.5 48V54M1067.5 47V53M1068.5 48V53M1069.5 48V54M1070.5 48V54M1071.5 48V53M1072.5 49V55M1073.5 48V55M1074.5 48V54M1075.5 49V55M1076.5 48V53M1077.5 47V54M1078.5 49V55M1079.5 49V55M1080.5 47V55M1081.5 48V53M1082.5 49V54M1083.5 48V53M1084.5 48V53M1085.5 47V55M1086.5 48V53M1087.5 48V53M1088.5 48V53M1089.5 49V55M1090.5 47V55M1091.5 49V54M1092.5 48V54M1093.5 48V55M1094.5 47V54M1095.5 48V53M1096.5 48V55M1097.5 47V53M1098.5 48V54M1099.5 48V54M1100.5 49V53M1101.5 47V55M1102.5 47V55M1103.5 47V54M1104.5 48V53M1105.5 48V55M1106.5 49V54M1107.5 47V54M1108.5 49V54M1109.5 47V54M1110.5 48V54M1111.5 47V55M1112.5 48V53M1113.5 47V55M1114.5 48V54M1115.5 48V53M1116.5 48V53M1117.5 48V55M1118.5 48V54M1119.5 48V54M1120.5 49V54M1121.5 48V55M1122.5 48V55M1123.5 48V55M1124.5 48V55M1125.5 49V54M1126.5 48V54M1127.5 48V55M1128.5 47V54M1129.5 48V54M1130.5 49V55M1131.5 47V55M1132.5 48V55M1133.5 47V55M1134.5 48V54M1135.5 48V55M1136.5 48V54M1137.5 48V54M1138.5 49V54M1139.5 47V55M1140.5 48V55M1141.5 48V55M1142.5 49V54M1143.5 49V55M1144.5 47V54M1145.5 48V55M1146.5 49V54M1147.5 48V54M1148.5 48V54M1149.5 48V53M1150.5 49V54M1151.5 49V54M1152.5 48V54M1153.5 48V55M1154.5 48V55M1155.5 48V55M1156.5 47V54M1157.5 48V54M1158.5 49V53M1159.5 48V54M1160.5 49V53M1161.5 49V53M1162.5 47V55M1163.5 48V53M1164.5 48V55M1165.5 48V55M1166.5 48V54M1167.5 48V55M1168.5 48V53M1169.5 47V54M1170.5 47V54M1171.5 48V55M1172.5 49V53M1173.5 48V55M1174.5 48V55M1175.5 48V53M1176.5 48V55M1177.5 47V55M1178.5 47V54M1179.5 48V54M1180.5 48V55M1181.5 48V54M1182.5 48V54M1183.5 49V54M1184.5 47V53M1185.5 47V55M1186.5 49V53M1187.5 48V55M1188.5 48V55M1189.5 47V55M1190.5 47V55M1191.5 49V55M1192.5 49V54M1193.5 49V55M1194.5 48V55M1195.5 48V53M1196.5 49V55M1197.5 48V54M1198.5 48V54M1199.5 48V54M1200.5 48V54M1201.5 47V55M1202.5 48V55M1203.5 49V53M1204.5 49V55M1205.5 47V55M1206.5 49V55M1207.5 49V55M1208.5 48V54M1209.5 49V55M1210.5 48V54M1211.5 49V55M1212.5 48V55M1213.5 48V54M1214.5 48V55M1215.5 48V55M1216.5 48V54M1217.5 48V54M1218.5 49V53M1219.5 48V55M1220.5 48V53M1221.5 48V54M1222.5 49V55M1223.5 49V54M1224.5 47V54M1225.5 48V53M1226.5 49V53M1227.5 48V54M1228.5 48V53M1229.5 48V55M1230.5 48V53M1231.5 47V54M1232.5 48V53M1233.5 48V55M1234.5 49V55M1235.5 47V53M1236.5 49V53M1237.5 48V53M1238.5 48V55M1239.5 47V55M1240.5 48V55M1241.5 48V54M1242.5 48V54M1243.5 49V54M1244.5 48V53M1245.5 48V55M1246.5 48V55M1247.5 48V55M1248.5 48V54M1249.5 48V54M1250.5 47V55M1251.5 47V55M1252.5 48V55M1253.5 48V55M1254.5 49V54M1255.5 48V55M1256.5 48V55M1257.5 49V54M1258.5 48V55M1259.5 48V53M1260.5 48V54M1261.5 49V55M1262.5 48V54M1263.5 48V54M1264.5 49V54M1265.5 49V55M1266.5 47V54" stroke="#00a4ae" stroke-width="1"/>
<rect x="69" y="50" width="599" height="2" fill="#00ffff"/>
<rect x="675" y="50" width="592" height="2" fill="#00ffff"/>
<path d="M668.5 54V4M674.5 4V54" stroke="#00b4be" stroke-width="1"/>
<rect x="668" y="3" width="7" height="4" fill="#00f0f8"/>
<rect x="669" y="7" width="5" height="2" fill="#00a8b0"/>
<path d="M69 239L70 239L71 239L72 239L73 239L74 239L75 239L76 239L77 239L78 239L79 239L80 239L81 239L82 239L83 239L84 239L85 239L86 239L87 239L88 239L89 239L90 239L91 239L92 239L93 239L94 239L95 239L96 239L97 239L98 239L99 239L100 239L101 239L102 239L103 239L104 239L105 239L106 239L107 239L108 239L109 239L110 239L111 239L112 239L113 239L114 239L115 239L116 239L117 239L118 239L119 239L120 239L121 239L122 239L123 239L124 239L125 239L126 239L127 239L128 239L129 239L130 239L131 239L132 239L133 239L134 239L135 239L136 239L137 239L138 239L139 239L140 239L141 239L142 239L143 239L144 239L145 239L146 239L147 239L148 239L149 239L150 239L151 239L152 239L153 239L154 239L155 239L156 239L157 239L158 239L159 240L160 240L161 240L162 240L163 239L164 239L165 239L166 239L167 239L168 239L169 239L170 239L171 239L172 239L173 239L174 239L175 239L176 239L177 239L178 239L179 239L180 239L181 239L182 239L183 239L184 239L185 239L186 239L187 239L188 239L189 239L190 239L191 239L192 239L193 239L194 239L195 239L196 239L197 239L198 239L199 239L200 239L201 239L202 239L203 239L204 239L205 239L206 239L207 239L208 239L209 239L210 239L211 239L212 239L213 239L214 239L215 239L216 239L217 239L218 239L219 240L220 240L221 240L222 240L223 239L224 239L225 239L226 239L227 239L228 239L229 239L230 239L231 239L232 239L233 239L234 239L235 239L236 239L237 239L238 239L239 239L240 239L241 239L242 239L243 239L244 239L245 239L246 239L247 239L248 239L249 239L250 239L251 239L252 239L253 239L254 239L255 239L256 239L257 239L258 239L259 239L260 239L261 239L262 239L263 239L264 239L265 240L266 240L267 240L268 240L269 239L270 239L271 239L272 239L273 239L274 239L275 239L276 239L277 239L278 239L279 239L280 239L281 239L282 239L283 239L284 239L285 239L286 239L287 239L288 239L289 239L290 239L291 239L292 239L293 239L294 239L295 239L296 239L297 239L298 239L299 239L300 239L301 239L302 239L303 239L304 239L305 239L306 239L307 239L308 239L309 239L310 239L311 239L312 239L313 239L314 239L315 239L316 239L317 239L318 239L319 239L320 239L321 239L322 239L323 239L324 240L325 240L326 240L327 240L328 240L329 239L330 239L331 239L332 239L333 239L334 239L335 239L336 239L337 239L338 239L339 239L340 239L341 239L342 239L343 239L344 239L345 239L346 239L347 239L348 239L349 239L350 239L351 239L352 239L353 239L354 239L355 239L356 239L357 239L358 239L359 239L360 239L361 239L362 239L363 239L364 239L365 239L366 239L367 238L368 238L369 238L370 238L371 238L372 237L373 237L374 237L375 237L376 236L377 236L378 236L379 236L380 235L381 235L382 235L383 235L384 235L385 235L386 235L387 235L388 234L389 234L390 234L391 233L392 233L393 234L394 233L395 233L396 233L397 233L398 232L399 232L400 232L401 232L402 232L403 232L404 232L405 232L406 231L407 231L408 230L409 230L410 230L411 230L412 230L413 229L414 229L415 229L416 229L417 229L418 229L419 229L420 228L421 228L422 228L423 227L424 227L425 227L426 227L427 227L428 227L429 226L430 227L431 227L432 227L433 227L434 227L435 225L436 225L437 225L438 225L439 225L440 225L441 225L442 225L443 224L444 225L445 225L446 225L447 225L448 224L449 224L450 224L451 224L452 224L453 223L454 223L455 223L456 223L457 223L458 223L459 223L460 222L461 222L462 221L463 221L464 221L465 220L466 220L467 220L468 220L469 220L470 220L471 220L472 219L473 219L474 219L475 219L476 218L477 218L478 218L479 218L480 218L481 221L482 221L483 221L484 221L485 219L486 219L487 219L488 219L489 219L490 218L491 218L492 218L493 217L494 217L495 217L496 217L497 217L498 217L499 217L500 217L501 217L502 217L503 216L504 216L505 215L506 215L507 215L508 214L509 214L510 214L511 214L512 213L513 213L514 213L515 213L516 212L517 212L518 212L519 212L520 211L521 211L522 212L523 212L524 211L525 211L526 211L527 210L528 210L529 210L530 210L531 209L532 209L533 208L534 208L535 208L536 211L537 211L538 211L539 210L540 210L541 208L542 208L543 208L544 208L545 209L546 209L547 209L548 209L549 209L550 206L551 206L552 206L553 206L554 206L555 206L556 206L557 206L558 206L559 206L560 206L561 206L562 205L563 205L564 208L565 208L566 207L567 207L568 204L569 204L570 204L571 204L572 204L573 205L574 205L575 205L576 205L577 202L578 202L579 202L580 202L581 202L582 204L583 204L584 204L585 204L586 204L587 201L588 201L589 201L590 201L591 200L592 200L593 199L594 199L595 199L596 200L597 199L598 199L599 198L600 198L601 198L602 197L603 197L604 197L605 197L606 196L607 196L608 196L609 196L610 198L611 198L612 198L613 198L614 197L615 197L616 197L617 197L618 197L619 197L620 197L621 197L622 196L623 193L624 193L625 192L626 192L627 191L628 192L629 192L630 191L631 191L632 191L633 190L634 190L635 190L636 190L637 190L638 190L639 190L640 190L641 190L642 190L643 190L644 190L645 190L646 190L647 190L648 190L649 190L650 190L651 190L652 190L653 190L654 190L655 190L656 195L657 195L658 195L659 195L660 188L661 188L662 188L663 188L664 188L665 191L666 191L667 191L668 191L669 190L670 190L671 190L672 190L673 190L674 188L675 188L676 188L677 188L678 188L679 190L680 190L681 190L682 190L683 190L684 190L685 190L686 190L687 190L688 191L689 191L690 191L691 191L692 190L693 190L694 190L695 190L696 190L697 190L698 190L699 190L700 190L701 190L702 190L703 190L704 190L705 190L706 189L707 189L708 189L709 189L710 189L711 188L712 188L713 188L714 188L715 190L716 190L717 190L718 190L719 190L720 190L721 190L722 190L723 190L724 190L725 189L726 189L727 189L728 189L729 189L730 189L731 189L732 189L733 189L734 191L735 191L736 191L737 191L738 189L739 189L740 189L741 189L742 189L743 193L744 193L745 193L746 193L747 193L748 189L749 189L750 189L751 189L752 189L753 189L754 189L755 189L756 189L757 192L758 192L759 192L760 192L761 191L762 191L763 191L764 191L765 191L766 190L767 190L768 190L769 191L770 191L771 190L772 191L773 191L774 191L775 193L776 193L777 193L778 194L779 194L780 195L781 195L782 195L783 196L784 198L785 198L786 198L787 198L788 198L789 196L790 197L791 197L792 197L793 197L794 196L795 196L796 196L797 196L798 197L799 197L800 197L801 198L802 198L803 199L804 199L805 199L806 200L807 197L808 198L809 198L810 198L811 199L812 199L813 199L814 199L815 200L816 200L817 203L818 203L819 203L820 204L821 202L822 202L823 203L824 203L825 203L826 202L827 202L828 202L829 203L830 203L831 203L832 204L833 204L834 204L835 204L836 204L837 204L838 205L839 205L840 207L841 207L842 207L843 207L844 207L845 207L846 208L847 208L848 208L849 206L850 206L851 207L852 207L853 208L854 208L855 208L856 208L857 209L858 209L859 209L860 209L861 210L862 210L863 210L864 210L865 210L866 210L867 211L868 211L869 211L870 211L871 212L872 213L873 213L874 213L875 213L876 213L877 213L878 213L879 214L880 214L881 214L882 214L883 214L884 214L885 215L886 215L887 215L888 216L889 216L890 216L891 216L892 216L893 216L894 216L895 217L896 217L897 217L898 217L899 217L900 217L901 217L902 218L903 218L904 220L905 220L906 221L907 221L908 221L909 221L910 222L911 222L912 222L913 221L914 221L915 222L916 222L917 222L918 222L919 223L920 223L921 223L922 224L923 224L924 224L925 225L926 225L927 226L928 226L929 226L930 227L931 227L932 228L933 228L934 228L935 229L936 230L937 230L938 231L939 231L940 231L941 231L942 231L943 231L944 231L945 232L946 232L947 232L948 232L949 232L950 232L951 232L952 233L953 233L954 233L955 233L956 233L957 233L958 234L959 233L960 234L961 234L962 234L963 234L964 236L965 236L966 236L967 236L968 236L969 236L970 237L971 237L972 237L973 237L974 237L975 237L976 238L977 238L978 238L979 239L980 239L981 239L982 239L983 239L984 239L985 239L986 239L987 239L988 239L989 239L990 239L991 239L992 239L993 239L994 239L995 239L996 239L997 239L998 239L999 239L1000 239L1001 239L1002 239L1003 239L1004 239L1005 239L1006 239L1007 239L1008 239L1009 239L1010 239L1011 239L1012 239L1013 239L1014 239L1015 239L1016 239L1017 239L1018 239L1019 239L1020 239L1021 239L1022 239L1023 239L1024 240L1025 240L1026 240L1027 240L1028 239L1029 239L1030 239L1031 239L1032 239L1033 239L1034 239L1035 239L1036 239L1037 239L1038 239L1039 239L1040 239L1041 239L1042 239L1043 239L1044 239L1045 239L1046 239L1047 239L1048 239L1049 239L1050 239L1051 239L1052 239L1053 239L1054 239L1055 239L1056 239L1057 239L1058 239L1059 239L1060 239L1061 239L1062 239L1063 239L1064 239L1065 239L1066 239L1067 239L1068 239L1069 239L1070 239L1071 239L1072 239L1073 239L1074 239L1075 239L1076 239L1077 239L1078 239L1079 240L1080 240L1081 240L1082 240L1083 239L1084 239L1085 239L1086 239L1087 239L1088 239L1089 239L1090 239L1091 239L1092 239L1093 239L1094 239L1095 239L1096 239L1097 239L1098 239L1099 239L1100 239L1101 239L1102 239L1103 239L1104 239L1105 239L1106 239L1107 239L1108 239L1109 239L1110 239L1111 239L1112 239L1113 239L1114 239L1115 239L1116 239L1117 239L1118 239L1119 239L1120 239L1121 239L1122 239L1123 239L1124 239L1125 239L1126 239L1127 239L1128 239L1129 239L1130 239L1131 239L1132 239L1133 239L1134 239L1135 239L1136 239L1137 239L1138 239L1139 239L1140 239L1141 239L1142 239L1143 239L1144 239L1145 239L1146 239L1147 239L1148 239L1149 239L1150 239L1151 239L1152 239L1153 239L1154 239L1155 239L1156 239L1157 239L1158 239L1159 239L1160 239L1161 239L1162 239L1163 239L1164 239L1165 239L1166 239L1167 239L1168 239L1169 239L1170 239L1171 239L1172 239L1173 239L1174 239L1175 239L1176 239L1177 239L1178 239L1179 239L1180 239L1181 239L1182 239L1183 239L1184 239L1185 239L1186 239L1187 239L1188 239L1189 239L1190 239L1191 239L1192 239L1193 239L1194 239L1195 239L1196 239L1197 239L1198 239L1199 239L1200 239L1201 239L1202 239L1203 239L1204 239L1205 239L1206 239L1207 239L1208 239L1209 239L1210 239L1211 239L1212 240L1213 240L1214 240L1215 240L1216 240L1217 239L1218 239L1219 239L1220 239L1221 239L1222 239L1223 239L1224 239L1225 239L1226 239L1227 239L1228 239L1229 239L1230 239L1231 239L1232 239L1233 239L1234 239L1235 239L1236 239L1237 239L1238 239L1239 239L1240 239L1241 239L1242 239L1243 239L1244 239L1245 239L1246 239L1247 239L1248 239L1249 239L1250 239L1251 239L1252 239L1253 239L1254 239L1255 239L1256 239L1257 239L1258 240L1259 240L1260 240L1261 240L1262 240L1263 239L1264 239L1265 239L1266 239L1266 302L1265 302L1264 302L1263 302L1262 302L1261 302L1260 302L1259 302L1258 302L1257 302L1256 302L1255 302L1254 302L1253 302L1252 302L1251 302L1250 302L1249 302L1248 302L1247 302L1246 302L1245 302L1244 302L1243 302L1242 302L1241 302L1240 302L1239 302L1238 302L1237 302L1236 302L1235 302L1234 302L1233 302L1232 302L1231 302L1230 302L1229 302L1228 302L1227 302L1226 302L1225 302L1224 302L1223 302L1222 302L1221 302L1220 302L1219 302L1218 302L1217 302L1216 302L1215 302L1214 302L1213 302L1212 302L1211 302L1210 302L1209 302L1208 302L1207 302L1206 302L1205 302L1204 302L1203 302L1202 302L1201 302L1200 302L1199 302L1198 302L1197 302L1196 302L1195 302L1194 302L1193 302L1192 302L1191 302L1190 302L1189 302L1188 302L1187 302L1186 302L1185 302L1184 302L1183 302L1182 302L1181 302L1180 302L1179 302L1178 302L1177 302L1176 302L1175 302L1174 302L1173 302L1172 302L1171 302L1170 302L1169 302L1168 302L1167 302L1166 302L1165 302L1164 302L1163 302L1162 302L1161 302L1160 302L1159 302L1158 302L1157 302L1156 302L1155 302L1154 302L1153 302L1152 302L1151 301L1150 301L1149 301L1148 301L1147 302L1146 302L1145 302L1144 302L1143 302L1142 302L1141 302L1140 302L1139 302L1138 302L1137 302L1136 302L1135 302L1134 302L1133 302L1132 302L1131 302L1130 302L1129 302L1128 302L1127 302L1126 302L1125 302L1124 302L1123 302L1122 302L1121 302L1120 302L1119 302L1118 302L1117 302L1116 302L1115 302L1114 302L1113 302L1112 302L1111 302L1110 301L1109 301L1108 301L1107 301L1106 301L1105 302L1104 302L1103 302L1102 302L1101 302L1100 302L1099 302L1098 302L1097 302L1096 302L1095 302L1094 302L1093 302L1092 302L1091 302L1090 302L1089 302L1088 302L1087 302L1086 302L1085 302L1084 302L1083 302L1082 301L1081 301L1080 301L1079 301L1078 302L1077 302L1076 302L1075 302L1074 302L1073 302L1072 302L1071 302L1070 302L1069 302L1068 302L1067 302L1066 302L1065 302L1064 302L1063 302L1062 302L1061 302L1060 302L1059 302L1058 302L1057 302L1056 302L1055 301L1054 301L1053 301L1052 301L1051 301L1050 302L1049 302L1048 302L1047 302L1046 302L1045 302L1044 302L1043 302L1042 302L1041 302L1040 302L1039 302L1038 302L1037 302L1036 302L1035 302L1034 302L1033 302L1032 302L1031 302L1030 302L1029 302L1028 302L1027 302L1026 302L1025 302L1024 302L1023 301L1022 301L1021 301L1020 301L1019 301L1018 301L1017 301L1016 301L1015 301L1014 301L1013 302L1012 302L1011 302L1010 302L1009 301L1008 301L1007 301L1006 301L1005 301L1004 302L1003 302L1002 302L1001 302L1000 302L999 302L998 302L997 302L996 302L995 302L994 302L993 302L992 302L991 302L990 302L989 302L988 302L987 302L986 302L985 302L984 302L983 302L982 302L981 302L980 302L979 302L978 302L977 303L976 303L975 303L974 303L973 304L972 304L971 305L970 305L969 305L968 305L967 305L966 306L965 306L964 306L963 306L962 307L961 307L960 307L959 307L958 307L957 308L956 308L955 308L954 308L953 308L952 308L951 308L950 308L949 308L948 308L947 308L946 309L945 309L944 309L943 310L942 310L941 310L940 311L939 311L938 311L937 312L936 312L935 312L934 312L933 313L932 313L931 314L930 314L929 315L928 315L927 315L926 315L925 316L924 316L923 317L922 317L921 318L920 318L919 318L918 319L917 318L916 318L915 318L914 319L913 319L912 320L911 321L910 321L909 321L908 321L907 321L906 322L905 322L904 322L903 323L902 323L901 323L900 324L899 324L898 325L897 325L896 325L895 325L894 324L893 324L892 324L891 324L890 325L889 326L888 326L887 326L886 327L885 326L884 326L883 326L882 326L881 326L880 326L879 326L878 327L877 327L876 327L875 327L874 328L873 328L872 328L871 330L870 330L869 330L868 330L867 331L866 329L865 330L864 330L863 330L862 332L861 332L860 332L859 332L858 333L857 332L856 332L855 332L854 333L853 333L852 334L851 334L850 334L849 335L848 334L847 334L846 335L845 335L844 335L843 335L842 335L841 335L840 336L839 336L838 336L837 336L836 337L835 337L834 335L833 335L832 335L831 335L830 335L829 338L828 338L827 338L826 338L825 338L824 338L823 339L822 339L821 339L820 338L819 339L818 339L817 339L816 340L815 340L814 341L813 341L812 341L811 339L810 340L809 340L808 340L807 340L806 342L805 342L804 342L803 343L802 343L801 343L800 344L799 344L798 344L797 344L796 345L795 345L794 345L793 346L792 346L791 346L790 346L789 347L788 345L787 345L786 345L785 345L784 345L783 347L782 348L781 348L780 348L779 345L778 345L777 345L776 346L775 346L774 349L773 349L772 350L771 350L770 351L769 351L768 352L767 352L766 352L765 351L764 351L763 351L762 351L761 351L760 350L759 350L758 350L757 350L756 347L755 347L754 347L753 347L752 347L751 352L750 352L749 352L748 352L747 348L746 348L745 348L744 348L743 348L742 352L741 352L740 352L739 352L738 352L737 352L736 352L735 352L734 352L733 353L732 353L731 353L730 353L729 353L728 352L727 352L726 352L725 352L724 351L723 351L722 351L721 351L720 351L719 353L718 353L717 353L716 353L715 353L714 351L713 351L712 351L711 351L710 352L709 352L708 352L707 352L706 352L705 353L704 353L703 353L702 353L701 352L700 352L699 352L698 352L697 352L696 348L695 348L694 348L693 348L692 348L691 351L690 351L689 351L688 351L687 352L686 352L685 352L684 352L683 352L682 352L681 352L680 352L679 352L678 352L677 352L676 352L675 352L674 352L673 351L672 351L671 351L670 351L669 351L668 352L667 352L666 352L665 352L664 351L663 351L662 351L661 351L660 351L659 352L658 352L657 352L656 352L655 351L654 351L653 351L652 351L651 351L650 352L649 352L648 352L647 351L646 351L645 349L644 349L643 349L642 349L641 349L640 349L639 349L638 349L637 349L636 351L635 351L634 351L633 351L632 351L631 351L630 351L629 350L628 350L627 349L626 348L625 348L624 347L623 347L622 347L621 346L620 346L619 346L618 345L617 345L616 345L615 345L614 345L613 343L612 343L611 343L610 343L609 343L608 343L607 342L606 342L605 342L604 344L603 344L602 344L601 343L600 343L599 344L598 344L597 343L596 343L595 342L594 341L593 341L592 340L591 340L590 339L589 339L588 339L587 339L586 340L585 340L584 340L583 340L582 340L581 338L580 338L579 337L578 337L577 337L576 336L575 336L574 336L573 336L572 338L571 338L570 338L569 338L568 338L567 338L566 338L565 338L564 337L563 335L562 335L561 334L560 334L559 334L558 334L557 334L556 334L555 334L554 334L553 333L552 333L551 333L550 333L549 334L548 334L547 334L546 334L545 334L544 333L543 333L542 333L541 333L540 333L539 333L538 332L537 332L536 332L535 329L534 329L533 328L532 328L531 328L530 328L529 328L528 327L527 327L526 330L525 330L524 330L523 330L522 330L521 328L520 328L519 328L518 328L517 329L516 329L515 329L514 328L513 328L512 328L511 328L510 327L509 327L508 327L507 326L506 326L505 326L504 326L503 324L502 324L501 324L500 324L499 324L498 323L497 323L496 323L495 322L494 324L493 324L492 324L491 324L490 323L489 324L488 324L487 323L486 323L485 323L484 323L483 323L482 323L481 323L480 322L479 322L478 322L477 322L476 322L475 322L474 321L473 321L472 321L471 321L470 321L469 321L468 320L467 320L466 321L465 321L464 321L463 321L462 320L461 320L460 320L459 320L458 320L457 319L456 319L455 319L454 319L453 318L452 319L451 318L450 318L449 318L448 317L447 317L446 317L445 317L444 317L443 317L442 317L441 317L440 316L439 316L438 314L437 314L436 314L435 314L434 315L433 315L432 315L431 315L430 315L429 313L428 313L427 313L426 312L425 314L424 314L423 314L422 313L421 313L420 311L419 311L418 311L417 311L416 310L415 311L414 310L413 310L412 310L411 311L410 311L409 311L408 311L407 311L406 311L405 310L404 310L403 310L402 309L401 309L400 309L399 308L398 308L397 309L396 308L395 308L394 308L393 308L392 307L391 307L390 306L389 306L388 307L387 306L386 306L385 306L384 306L383 306L382 306L381 306L380 306L379 305L378 305L377 305L376 305L375 304L374 303L373 303L372 303L371 302L370 302L369 301L368 301L367 301L366 301L365 302L364 302L363 302L362 302L361 302L360 302L359 302L358 302L357 302L356 302L355 302L354 302L353 302L352 302L351 302L350 302L349 302L348 302L347 302L346 302L345 302L344 302L343 302L342 301L341 301L340 301L339 301L338 301L337 302L336 302L335 302L334 302L333 302L332 302L331 302L330 302L329 302L328 302L327 302L326 302L325 302L324 302L323 302L322 302L321 302L320 302L319 302L318 302L317 302L316 302L315 302L314 302L313 302L312 302L311 302L310 302L309 302L308 302L307 302L306 302L305 302L304 302L303 302L302 302L301 302L300 302L299 302L298 302L297 302L296 302L295 302L294 302L293 302L292 302L291 302L290 302L289 302L288 302L287 302L286 302L285 302L284 302L283 302L282 302L281 302L280 302L279 302L278 302L277 301L276 301L275 301L274 301L273 302L272 302L271 302L270 302L269 302L268 302L267 302L266 302L265 302L264 302L263 302L262 302L261 302L260 302L259 302L258 302L257 302L256 302L255 302L254 302L253 302L252 302L251 302L250 302L249 302L248 302L247 302L246 302L245 302L244 302L243 302L242 302L241 302L240 302L239 302L238 302L237 302L236 302L235 302L234 302L233 302L232 302L231 302L230 302L229 302L228 302L227 302L226 302L225 302L224 302L223 302L222 302L221 302L220 302L219 302L218 302L217 302L216 302L215 302L214 302L213 302L212 302L211 302L210 302L209 302L208 302L207 302L206 302L205 302L204 302L203 302L202 302L201 302L200 302L199 302L198 302L197 302L196 302L195 302L194 302L193 302L192 302L191 302L190 302L189 302L188 302L187 302L186 302L185 302L184 302L183 302L182 302L181 301L180 301L179 301L178 301L177 301L176 302L175 302L174 302L173 302L172 302L171 302L170 302L169 302L168 302L167 302L166 302L165 302L164 302L163 302L162 302L161 302L160 302L159 302L158 302L157 302L156 302L155 302L154 302L153 302L152 302L151 302L150 302L149 302L148 302L147 302L146 302L145 302L144 302L143 302L142 302L141 302L140 302L139 302L138 302L137 302L136 302L135 302L134 302L133 302L132 302L131 302L130 302L129 302L128 302L127 302L126 302L125 302L124 302L123 302L122 302L121 302L120 302L119 302L118 302L117 302L116 302L115 302L114 302L113 302L112 302L111 302L110 302L109 302L108 302L107 302L106 302L105 302L104 302L103 302L102 302L101 302L100 302L99 302L98 302L97 302L96 302L95 302L94 302L93 302L92 302L91 302L90 302L89 302L88 302L87 302L86 302L85 302L84 301L83 301L82 301L81 301L80 302L79 302L78 302L77 302L76 302L75 302L74 302L73 302L72 302L71 302L70 302L69 302Z" fill="#c2b800"/>
<path d="M71.5 238V270M71.5 278V304M73.5 238V267M73.5 304V290M76.5 238V261M76.5 270V304M78.5 238V262M78.5 304V282M80.5 238V276M80.5 281V304M82.5 238V256M82.5 304V287M85.5 238V264M85.5 272V304M87.5 238V263M87.5 304V281M89.5 238V271M89.5 278V304M91.5 238V264M91.5 304V274M94.5 238V261M94.5 269V304M96.5 238V267M96.5 304V287M98.5 238V271M98.5 277V304M101.5 238V257M101.5 304V283M103.5 238V260M103.5 268V304M105.5 238V249M105.5 304V291M107.5 238V269M107.5 277V304M110.5 238V255M110.5 304V288M112.5 238V263M112.5 270V304M114.5 238V254M114.5 304V287M116.5 238V274M116.5 279V304M119.5 238V253M119.5 304V281M121.5 238V263M121.5 270V304M123.5 238V253M123.5 304V278M126.5 238V273M126.5 280V304M128.5 238V264M128.5 304V278M130.5 238V261M130.5 269V304M132.5 238V251M132.5 304V288M135.5 238V272M135.5 277V304M137.5 238V262M137.5 304V283M139.5 238V264M139.5 269V304M142.5 238V266M142.5 304V274M144.5 238V272M144.5 277V304M146.5 238V255M146.5 304V289M148.5 238V262M148.5 269V304M151.5 238V251M151.5 304V290M153.5 238V271M153.5 279V304M155.5 238V243M155.5 304V277M157.5 238V264M157.5 269V304M160.5 238V260M160.5 304V289M162.5 238V272M162.5 280V304M164.5 238V265M164.5 304V280M167.5 238V262M167.5 270V304M169.5 238V266M169.5 304V280M171.5 238V272M171.5 278V304M173.5 238V253M173.5 304V294M176.5 238V264M176.5 270V304M178.5 238V254M178.5 304V285M180.5 238V274M180.5 281V304M182.5 238V250M182.5 304V284M185.5 238V260M185.5 267V304M187.5 238V259M187.5 304V274M189.5 238V274M189.5 279V304M192.5 238V256M192.5 304V282M194.5 238V263M194.5 271V304M196.5 238V247M196.5 304V274M198.5 238V272M198.5 280V304M201.5 238V260M201.5 304V274M203.5 238V263M203.5 269V304M205.5 238V267M205.5 304V277M208.5 238V272M208.5 278V304M210.5 238V254M210.5 304V292M212.5 238V263M212.5 270V304M214.5 238V263M214.5 304V291M217.5 238V272M217.5 280V304M219.5 238V255M219.5 304V298M221.5 238V263M221.5 270V304M223.5 238V261M223.5 304V294M226.5 238V269M226.5 276V304M228.5 238V263M228.5 304V280M230.5 238V261M230.5 269V304M233.5 238V255M233.5 304V285M235.5 238V270M235.5 278V304M237.5 238V256M237.5 304V277M239.5 238V265M239.5 270V304M242.5 238V267M242.5 304V290M244.5 238V273M244.5 280V304M246.5 238V266M246.5 304V297M248.5 238V264M248.5 271V304M251.5 238V267M251.5 304V297M253.5 238V271M253.5 278V304M255.5 238V255M255.5 304V275M258.5 238V261M258.5 269V304M260.5 238V262M260.5 304V292M262.5 238V271M262.5 276V304M264.5 238V259M264.5 304V277M267.5 238V261M267.5 268V304M269.5 238V248M269.5 304V301M271.5 238V271M271.5 278V304M273.5 238V256M273.5 304V289M276.5 238V263M276.5 270V304M278.5 238V257M278.5 304V287M280.5 238V272M280.5 278V304M283.5 238V258M283.5 304V279M285.5 238V264M285.5 272V304M287.5 238V252M287.5 304V277M289.5 238V273M289.5 281V304M292.5 238V264M292.5 304V286M294.5 238V262M294.5 270V304M296.5 238V263M296.5 304V287M299.5 238V271M299.5 279V304M301.5 238V257M301.5 304V285M303.5 238V262M303.5 268V304M305.5 238V257M305.5 304V284M308.5 238V269M308.5 275V304M310.5 238V254M310.5 304V284M312.5 238V261M312.5 267V304M314.5 238V252M314.5 304V280M317.5 238V273M317.5 280V304M319.5 238V265M319.5 304V279M321.5 238V261M321.5 269V304M324.5 238V265M324.5 304V278M326.5 238V274M326.5 280V304M328.5 238V255M328.5 304V276M330.5 238V265M330.5 271V304M333.5 238V264M333.5 304V281M335.5 238V274M335.5 280V304M337.5 238V265M337.5 304V277M339.5 238V263M339.5 270V304M342.5 238V263M342.5 304V283M344.5 238V270M344.5 276V304M346.5 238V250M346.5 304V277M349.5 238V264M349.5 270V304M351.5 238V264M351.5 304V280M353.5 238V273M353.5 278V304M355.5 238V262M355.5 304V282M358.5 238V263M358.5 270V304M360.5 238V265M360.5 304V281M362.5 238V273M362.5 280V304M364.5 238V259M364.5 304V277M367.5 237V264M367.5 270V304M369.5 237V255M369.5 304V278M371.5 237V274M371.5 281V304M374.5 237V263M374.5 304V280M376.5 235V260M376.5 269V306M378.5 235V266M378.5 306V287M380.5 234V269M380.5 277V307M383.5 234V253M383.5 307V274M385.5 233V261M385.5 267V308M387.5 233V252M387.5 308V283M390.5 232V270M390.5 278V309M392.5 232V256M392.5 309V290M394.5 232V263M394.5 270V309M396.5 232V255M396.5 309V290M399.5 231V269M399.5 279V310M401.5 231V240M401.5 310V275M403.5 230V259M403.5 268V311M405.5 230V267M405.5 311V302M408.5 229V270M408.5 281V312M410.5 229V256M410.5 312V290M412.5 228V260M412.5 271V313M415.5 228V256M415.5 313V275M417.5 227V272M417.5 281V314M419.5 227V264M419.5 314V275M421.5 227V258M421.5 268V314M424.5 227V249M424.5 314V292M426.5 226V270M426.5 280V315M428.5 226V239M428.5 315V304M430.5 225V258M430.5 265V316M433.5 225V264M433.5 316V292M435.5 224V272M435.5 280V317M437.5 224V260M437.5 317V289M440.5 223V260M440.5 268V318M442.5 223V250M442.5 318V293M444.5 223V269M444.5 281V318M446.5 223V250M446.5 318V275M449.5 222V259M449.5 269V319M451.5 222V261M451.5 319V275M453.5 221V272M453.5 281V320M455.5 221V252M455.5 320V290M458.5 220V257M458.5 269V321M460.5 220V248M460.5 321V312M462.5 219V273M462.5 284V322M465.5 219V242M465.5 322V290M467.5 219V260M467.5 273V322M469.5 219V247M469.5 322V275M471.5 218V269M471.5 281V323M474.5 218V245M474.5 323V293M476.5 217V258M476.5 269V324M478.5 217V243M478.5 324V292M481.5 217V272M481.5 285V324M483.5 217V250M483.5 324V298M485.5 216V257M485.5 268V324M487.5 216V240M487.5 324V287M490.5 216V272M490.5 287V325M492.5 216V244M492.5 325V296M494.5 216V257M494.5 271V325M496.5 216V248M496.5 325V300M499.5 215V278M499.5 287V326M501.5 215V251M501.5 326V282M503.5 214V258M503.5 267V327M506.5 214V250M506.5 327V276M508.5 213V273M508.5 286V328M510.5 213V244M510.5 328V286M512.5 212V258M512.5 273V329M515.5 212V260M515.5 329V279M517.5 211V275M517.5 285V330M519.5 211V250M519.5 330V288M521.5 210V254M521.5 267V331M524.5 210V251M524.5 331V292M526.5 209V276M526.5 292V332M528.5 209V247M528.5 332V303M531.5 208V257M531.5 269V333M533.5 208V253M533.5 333V296M535.5 207V274M535.5 286V334M537.5 207V245M537.5 334V301M540.5 206V258M540.5 270V335M542.5 206V248M542.5 335V309M544.5 206V274M544.5 287V335M546.5 206V248M546.5 335V295M549.5 205V249M549.5 267V336M551.5 205V237M551.5 336V277M553.5 205V271M553.5 284V336M556.5 205V257M556.5 336V290M558.5 205V254M558.5 271V336M560.5 205V232M560.5 336V277M562.5 203V272M562.5 288V338M565.5 203V247M565.5 338V284M567.5 202V253M567.5 265V339M569.5 202V244M569.5 339V288M572.5 201V274M572.5 292V340M574.5 201V233M574.5 340V329M576.5 201V255M576.5 274V340M578.5 201V239M578.5 340V277M581.5 200V272M581.5 289V341M583.5 200V241M583.5 341V288M585.5 200V253M585.5 266V341M587.5 200V261M587.5 341V301M590.5 199V269M590.5 282V342M592.5 199V250M592.5 342V313M594.5 198V253M594.5 267V343M597.5 198V263M597.5 343V307M599.5 196V276M599.5 288V345M601.5 196V236M601.5 345V298M603.5 195V253M603.5 268V346M606.5 195V240M606.5 346V308M608.5 194V276M608.5 288V347M610.5 194V249M610.5 347V291M612.5 194V255M612.5 274V347M615.5 194V215M615.5 347V307M617.5 194V276M617.5 290V347M619.5 194V256M619.5 347V289M622.5 192V250M622.5 270V349M624.5 192V259M624.5 349V306M626.5 190V272M626.5 289V350M628.5 190V247M628.5 350V280M631.5 189V247M631.5 268V352M633.5 189V231M633.5 352V316M635.5 188V273M635.5 287V353M637.5 188V245M637.5 353V287M640.5 188V249M640.5 265V353M642.5 188V255M642.5 353V303M644.5 188V275M644.5 296V353M647.5 188V250M647.5 353V288M649.5 187V251M649.5 272V354M651.5 187V243M651.5 354V301M653.5 187V281M653.5 296V354M656.5 187V234M656.5 354V292M658.5 187V248M658.5 267V354M660.5 187V227M660.5 354V296M662.5 187V276M662.5 296V354M665.5 187V246M665.5 354V314M667.5 187V250M667.5 266V354M669.5 187V260M669.5 354V336M672.5 187V271M672.5 293V354M674.5 187V249M674.5 354V296M676.5 187V247M676.5 268V354M678.5 187V244M678.5 354V313M681.5 187V271M681.5 294V354M683.5 187V236M683.5 354V302M685.5 187V246M685.5 263V354M688.5 187V230M688.5 354V314M690.5 187V272M690.5 294V354M692.5 187V234M692.5 354V283M694.5 187V252M694.5 274V354M697.5 187V261M697.5 354V317M699.5 187V276M699.5 297V354M701.5 187V262M701.5 354V325M703.5 187V248M703.5 261V354M706.5 187V233M706.5 354V318M708.5 187V275M708.5 291V354M710.5 187V203M710.5 354V303M713.5 187V248M713.5 265V354M715.5 187V253M715.5 354V300M717.5 187V271M717.5 288V354M719.5 187V213M719.5 354V310M722.5 187V249M722.5 271V354M724.5 187V262M724.5 354V305M726.5 187V266M726.5 288V354M728.5 187V254M728.5 354V321M731.5 187V247M731.5 263V354M733.5 187V249M733.5 354V320M735.5 187V274M735.5 294V354M738.5 187V220M738.5 354V323M740.5 187V250M740.5 271V354M742.5 187V228M742.5 354V344M744.5 187V278M744.5 300V354M747.5 187V236M747.5 354V320M749.5 187V251M749.5 266V354M751.5 187V240M751.5 354V306M753.5 188V277M753.5 290V353M756.5 188V228M756.5 353V306M758.5 188V253M758.5 272V353M760.5 188V243M760.5 353V313M763.5 188V275M763.5 289V353M765.5 188V241M765.5 353V298M767.5 188V250M767.5 269V353M769.5 188V235M769.5 353V328M772.5 189V274M772.5 292V352M774.5 189V235M774.5 352V291M776.5 190V254M776.5 271V351M779.5 190V256M779.5 351V337M781.5 192V276M781.5 295V349M783.5 192V239M783.5 349V320M785.5 192V255M785.5 268V349M788.5 192V255M788.5 349V302M790.5 193V275M790.5 291V348M792.5 193V263M792.5 348V283M794.5 194V248M794.5 267V347M797.5 194V243M797.5 347V297M799.5 194V271M799.5 285V347M801.5 194V231M801.5 347V311M804.5 196V250M804.5 268V345M806.5 196V238M806.5 345V328M808.5 197V278M808.5 289V344M810.5 197V240M810.5 344V293M813.5 198V254M813.5 270V343M815.5 198V263M815.5 343V305M817.5 199V277M817.5 294V342M819.5 199V258M819.5 342V277M822.5 200V255M822.5 266V341M824.5 200V233M824.5 341V284M826.5 201V274M826.5 287V340M829.5 201V260M829.5 340V286M831.5 201V251M831.5 264V340M833.5 201V246M833.5 340V277M835.5 202V278M835.5 289V339M838.5 202V240M838.5 339V308M840.5 203V250M840.5 268V338M842.5 203V253M842.5 338V296M844.5 204V268M844.5 282V338M847.5 204V262M847.5 338V282M849.5 205V253M849.5 268V336M851.5 205V243M851.5 336V296M854.5 206V271M854.5 283V335M856.5 206V238M856.5 335V294M858.5 207V250M858.5 264V334M860.5 207V262M860.5 334V321M863.5 208V276M863.5 293V333M865.5 208V238M865.5 333V313M867.5 209V257M867.5 272V332M870.5 209V254M870.5 332V297M872.5 210V270M872.5 284V330M874.5 210V237M874.5 330V284M876.5 212V249M876.5 265V330M879.5 212V232M879.5 330V279M881.5 213V266M881.5 281V328M883.5 213V255M883.5 328V290M885.5 213V260M885.5 271V328M888.5 213V255M888.5 328V285M890.5 214V270M890.5 280V327M892.5 214V245M892.5 327V294M895.5 214V255M895.5 266V327M897.5 214V240M897.5 327V281M899.5 215V277M899.5 285V326M901.5 215V246M901.5 326V289M904.5 216V256M904.5 269V325M906.5 216V232M906.5 325V285M908.5 218V276M908.5 285V323M910.5 218V255M910.5 323V287M913.5 219V260M913.5 273V322M915.5 219V238M915.5 322V300M917.5 221V271M917.5 284V320M920.5 221V258M920.5 320V282M922.5 223V256M922.5 269V318M924.5 223V246M924.5 318V305M926.5 224V272M926.5 279V317M929.5 224V254M929.5 317V290M931.5 226V257M931.5 265V315M933.5 226V260M933.5 315V299M935.5 228V274M935.5 281V313M938.5 228V252M938.5 313V280M940.5 229V262M940.5 270V312M942.5 229V256M942.5 312V287M945.5 230V274M945.5 282V311M947.5 230V257M947.5 311V289M949.5 231V261M949.5 267V310M951.5 231V251M951.5 310V284M954.5 232V272M954.5 279V309M956.5 232V256M956.5 309V284M958.5 232V263M958.5 270V309M961.5 232V252M961.5 309V282M963.5 233V270M963.5 279V308M965.5 233V255M965.5 308V289M967.5 234V259M967.5 267V307M970.5 234V258M970.5 307V277M972.5 236V270M972.5 278V306M974.5 236V255M974.5 306V282M976.5 236V262M976.5 268V304M979.5 236V257M979.5 304V298M981.5 237V273M981.5 279V304M983.5 237V243M983.5 304V279M986.5 238V264M986.5 269V304M988.5 238V260M988.5 304V286M990.5 238V270M990.5 278V304M992.5 238V255M992.5 304V274M995.5 238V265M995.5 271V304M997.5 238V255M997.5 304V281M999.5 238V272M999.5 278V304M1001.5 238V252M1001.5 304V274M1004.5 238V262M1004.5 270V304M1006.5 238V247M1006.5 304V288M1008.5 238V272M1008.5 277V304M1011.5 238V256M1011.5 304V293M1013.5 238V263M1013.5 269V304M1015.5 238V258M1015.5 304V286M1017.5 238V273M1017.5 280V304M1020.5 238V251M1020.5 304V283M1022.5 238V262M1022.5 269V304M1024.5 238V261M1024.5 304V289M1026.5 238V274M1026.5 279V304M1029.5 238V245M1029.5 304V284M1031.5 238V264M1031.5 272V304M1033.5 238V257M1033.5 304V292M1036.5 238V272M1036.5 278V304M1038.5 238V248M1038.5 304V286M1040.5 238V263M1040.5 268V304M1042.5 238V260M1042.5 304V276M1045.5 238V272M1045.5 279V304M1047.5 238V252M1047.5 304V284M1049.5 238V266M1049.5 272V304M1052.5 238V263M1052.5 304V279M1054.5 238V272M1054.5 280V304M1056.5 238V267M1056.5 304V285M1058.5 238V264M1058.5 269V304M1061.5 238V260M1061.5 304V274M1063.5 238V271M1063.5 276V304M1065.5 238V247M1065.5 304V287M1067.5 238V263M1067.5 270V304M1070.5 238V259M1070.5 304V288M1072.5 238V272M1072.5 278V304M1074.5 238V256M1074.5 304V292M1077.5 238V262M1077.5 270V304M1079.5 238V262M1079.5 304V286M1081.5 238V271M1081.5 277V304M1083.5 238V259M1083.5 304V295M1086.5 238V262M1086.5 269V304M1088.5 238V260M1088.5 304V286M1090.5 238V269M1090.5 276V304M1092.5 238V256M1092.5 304V274M1095.5 238V262M1095.5 269V304M1097.5 238V266M1097.5 304V287M1099.5 238V271M1099.5 279V304M1102.5 238V257M1102.5 304V282M1104.5 238V263M1104.5 270V304M1106.5 238V256M1106.5 304V289M1108.5 238V271M1108.5 277V304M1111.5 238V267M1111.5 304V274M1113.5 238V262M1113.5 270V304M1115.5 238V261M1115.5 304V275M1117.5 238V272M1117.5 278V304M1120.5 238V256M1120.5 304V276M1122.5 238V264M1122.5 273V304M1124.5 238V245M1124.5 304V278M1127.5 238V270M1127.5 278V304M1129.5 238V266M1129.5 304V283M1131.5 238V259M1131.5 268V304M1133.5 238V258M1133.5 304V290M1136.5 238V273M1136.5 278V304M1138.5 238V256M1138.5 304V292M1140.5 238V262M1140.5 270V304M1143.5 238V262M1143.5 304V275M1145.5 238V272M1145.5 279V304M1147.5 238V267M1147.5 304V281M1149.5 238V263M1149.5 271V304M1152.5 238V267M1152.5 304V277M1154.5 238V272M1154.5 280V304M1156.5 238V253M1156.5 304V287M1158.5 238V262M1158.5 268V304M1161.5 238V258M1161.5 304V281M1163.5 238V271M1163.5 278V304M1165.5 238V248M1165.5 304V278M1168.5 238V263M1168.5 268V304M1170.5 238V261M1170.5 304V281M1172.5 238V271M1172.5 278V304M1174.5 238V250M1174.5 304V287M1177.5 238V265M1177.5 271V304M1179.5 238V256M1179.5 304V290M1181.5 238V273M1181.5 278V304M1183.5 238V245M1183.5 304V301M1186.5 238V264M1186.5 271V304M1188.5 238V264M1188.5 304V287M1190.5 238V273M1190.5 281V304M1193.5 238V245M1193.5 304V284M1195.5 238V264M1195.5 271V304M1197.5 238V256M1197.5 304V277M1199.5 238V270M1199.5 279V304M1202.5 238V254M1202.5 304V291M1204.5 238V262M1204.5 270V304M1206.5 238V264M1206.5 304V293M1208.5 238V271M1208.5 278V304M1211.5 238V256M1211.5 304V277M1213.5 238V263M1213.5 270V304M1215.5 238V257M1215.5 304V282M1218.5 238V273M1218.5 278V304M1220.5 238V255M1220.5 304V276M1222.5 238V264M1222.5 270V304M1224.5 238V261M1224.5 304V279M1227.5 238V272M1227.5 278V304M1229.5 238V250M1229.5 304V285M1231.5 238V263M1231.5 270V304M1234.5 238V250M1234.5 304V274M1236.5 238V272M1236.5 278V304M1238.5 238V264M1238.5 304V299M1240.5 238V262M1240.5 268V304M1243.5 238V243M1243.5 304V278M1245.5 238V270M1245.5 276V304M1247.5 238V259M1247.5 304V295M1249.5 238V262M1249.5 268V304M1252.5 238V253M1252.5 304V279M1254.5 238V275M1254.5 283V304M1256.5 238V261M1256.5 304V283M1259.5 238V262M1259.5 268V304M1261.5 238V267M1261.5 304V282M1263.5 238V274M1263.5 279V304M1265.5 238V267M1265.5 304V293" stroke="#000" stroke-width="1"/>
<path d="M69.5 418V434M70.5 418V432M71.5 418V432M72.5 417V433M73.5 417V434M74.5 418V433M75.5 418V435M76.5 417V434M77.5 417V434M78.5 418V433M79.5 417V433M80.5 418V433M81.5 417V433M82.5 417V433M83.5 415V433M84.5 418V433M85.5 418V432M86.5 417V435M87.5 415V436M88.5 417V436M89.5 416V432M90.5 418V432M91.5 418V432M92.5 418V432M93.5 417V432M94.5 418V434M95.5 417V434M96.5 418V435M97.5 418V434M98.5 416V433M99.5 416V434M100.5 418V432M101.5 418V433M102.5 418V435M103.5 418V433M104.5 413V432M105.5 418V434M106.5 417V435M107.5 418V433M108.5 417V432M109.5 418V433M110.5 417V435M111.5 414V433M112.5 418V432M113.5 418V433M114.5 418V433M115.5 418V433M116.5 418V433M117.5 418V433M118.5 418V434M119.5 417V432M120.5 417V433M121.5 418V434M122.5 417V433M123.5 418V433M124.5 417V433M125.5 416V433M126.5 417V434M127.5 418V433M128.5 418V433M129.5 417V433M130.5 418V433M131.5 417V433M132.5 417V432M133.5 417V433M134.5 418V433M135.5 418V435M136.5 416V432M137.5 418V433M138.5 418V433M139.5 415V434M140.5 417V432M141.5 418V432M142.5 418V434M143.5 418V432M144.5 417V434M145.5 418V436M146.5 418V432M147.5 417V433M148.5 417V433M149.5 416V432M150.5 418V432M151.5 417V433M152.5 417V433M153.5 418V432M154.5 417V435M155.5 418V432M156.5 416V433M157.5 418V434M158.5 418V433M159.5 416V433M160.5 416V434M161.5 418V433M162.5 417V432M163.5 418V433M164.5 417V433M165.5 416V432M166.5 417V434M167.5 416V434M168.5 417V433M169.5 418V433M170.5 418V435M171.5 417V433M172.5 417V434M173.5 418V433M174.5 418V432M175.5 416V433M176.5 416V435M177.5 414V433M178.5 418V433M179.5 418V432M180.5 417V433M181.5 416V432M182.5 418V433M183.5 418V434M184.5 418V432M185.5 416V433M186.5 417V433M187.5 418V432M188.5 418V434M189.5 418V433M190.5 417V435M191.5 417V433M192.5 417V432M193.5 417V433M194.5 418V434M195.5 418V432M196.5 418V432M197.5 418V434M198.5 418V432M199.5 417V433M200.5 418V433M201.5 416V434M202.5 416V434M203.5 417V432M204.5 418V433M205.5 418V432M206.5 417V432M207.5 414V432M208.5 418V432M209.5 417V432M210.5 416V432M211.5 416V434M212.5 417V432M213.5 417V432M214.5 416V433M215.5 416V432M216.5 417V432M217.5 416V432M218.5 417V433M219.5 418V432M220.5 418V433M221.5 415V432M222.5 417V435M223.5 417V432M224.5 416V431M225.5 417V432M226.5 417V433M227.5 417V432M228.5 416V431M229.5 416V432M230.5 416V433M231.5 417V432M232.5 417V432M233.5 417V432M234.5 417V432M235.5 416V434M236.5 414V431M237.5 414V434M238.5 415V432M239.5 417V433M240.5 417V431M241.5 416V433M242.5 417V433M243.5 415V432M244.5 415V431M245.5 417V433M246.5 414V431M247.5 416V432M248.5 415V431M249.5 412V432M250.5 414V432M251.5 416V433M252.5 416V433M253.5 416V432M254.5 416V433M255.5 415V431M256.5 415V431M257.5 414V431M258.5 416V430M259.5 415V431M260.5 414V430M261.5 416V431M262.5 414V431M263.5 414V430M264.5 413V431M265.5 415V431M266.5 414V430M267.5 416V432M268.5 416V432M269.5 416V432M270.5 415V431M271.5 415V432M272.5 412V432M273.5 414V431M274.5 415V431M275.5 415V431M276.5 414V432M277.5 415V430M278.5 414V430M279.5 414V434M280.5 416V432M281.5 414V432M282.5 414V431M283.5 415V430M284.5 415V431M285.5 413V430M286.5 415V430M287.5 413V430M288.5 415V430M289.5 415V430M290.5 415V431M291.5 415V432M292.5 415V430M293.5 414V431M294.5 415V431M295.5 414V431M296.5 415V431M297.5 415V433M298.5 415V431M299.5 415V431M300.5 415V429M301.5 413V431M302.5 415V430M303.5 414V431M304.5 415V430M305.5 414V430M306.5 415V429M307.5 415V432M308.5 415V432M309.5 415V429M310.5 414V430M311.5 414V431M312.5 412V429M313.5 413V429M314.5 411V429M315.5 413V431M316.5 413V429M317.5 412V431M318.5 414V431M319.5 413V430M320.5 414V429M321.5 414V431M322.5 412V429M323.5 413V432M324.5 413V432M325.5 412V429M326.5 411V429M327.5 413V430M328.5 413V431M329.5 413V429M330.5 412V432M331.5 411V430M332.5 412V430M333.5 411V431M334.5 413V429M335.5 413V429M336.5 413V429M337.5 413V430M338.5 412V432M339.5 411V429M340.5 411V430M341.5 410V429M342.5 413V429M343.5 412V429M344.5 411V429M345.5 410V430M346.5 411V429M347.5 411V430M348.5 411V429M349.5 411V431M350.5 412V431M351.5 412V430M352.5 410V430M353.5 411V429M354.5 410V429M355.5 412V429M356.5 411V430M357.5 411V428M358.5 411V431M359.5 411V429M360.5 411V429M361.5 410V431M362.5 409V429M363.5 409V431M364.5 410V428M365.5 411V431M366.5 409V429M367.5 411V429M368.5 410V431M369.5 406V429M370.5 409V428M371.5 409V429M372.5 409V431M373.5 409V429M374.5 407V430M375.5 410V431M376.5 409V431M377.5 408V428M378.5 409V431M379.5 409V428M380.5 409V428M381.5 410V429M382.5 409V429M383.5 408V430M384.5 406V428M385.5 409V430M386.5 409V431M387.5 408V429M388.5 410V429M389.5 407V428M390.5 409V430M391.5 409V429M392.5 409V428M393.5 409V429M394.5 409V428M395.5 409V430M396.5 406V429M397.5 408V430M398.5 408V429M399.5 409V429M400.5 408V429M401.5 408V428M402.5 407V428M403.5 407V429M404.5 408V428M405.5 408V428M406.5 408V429M407.5 408V428M408.5 405V429M409.5 408V431M410.5 408V428M411.5 406V428M412.5 408V429M413.5 406V428M414.5 408V428M415.5 407V428M416.5 408V429M417.5 407V429M418.5 406V429M419.5 407V430M420.5 406V429M421.5 406V428M422.5 407V428M423.5 406V429M424.5 407V431M425.5 406V429M426.5 407V429M427.5 406V428M428.5 405V428M429.5 405V428M430.5 404V430M431.5 406V429M432.5 404V428M433.5 407V429M434.5 407V430M435.5 406V429M436.5 403V430M437.5 407V430M438.5 407V428M439.5 405V428M440.5 407V429M441.5 405V430M442.5 405V431M443.5 406V427M444.5 404V428M445.5 405V429M446.5 405V427M447.5 401V430M448.5 404V428M449.5 405V429M450.5 403V429M451.5 403V427M452.5 403V428M453.5 404V428M454.5 404V430M455.5 403V432M456.5 404V430M457.5 402V429M458.5 402V430M459.5 404V432M460.5 403V429M461.5 404V428M462.5 400V432M463.5 402V430M464.5 403V429M465.5 401V430M466.5 400V430M467.5 400V427M468.5 399V430M469.5 401V428M470.5 400V429M471.5 399V430M472.5 399V428M473.5 398V430M474.5 397V431M475.5 397V431M476.5 396V429M477.5 395V434M478.5 397V432M479.5 396V428M480.5 397V429M481.5 397V432M482.5 395V431M483.5 396V430M484.5 395V433M485.5 395V428M486.5 394V428M487.5 395V428M488.5 394V430M489.5 396V431M490.5 396V428M491.5 394V428M492.5 395V428M493.5 393V428M494.5 394V431M495.5 395V428M496.5 395V432M497.5 391V430M498.5 395V429M499.5 394V432M500.5 393V431M501.5 390V428M502.5 394V430M503.5 393V429M504.5 392V428M505.5 392V428M506.5 392V428M507.5 391V431M508.5 393V429M509.5 393V429M510.5 391V430M511.5 392V431M512.5 392V429M513.5 391V432M514.5 392V429M515.5 391V437M516.5 393V428M517.5 393V429M518.5 392V429M519.5 392V431M520.5 391V433M521.5 392V428M522.5 390V428M523.5 392V432M524.5 392V432M525.5 390V429M526.5 390V431M527.5 387V433M528.5 389V429M529.5 390V432M530.5 390V429M531.5 390V432M532.5 391V428M533.5 389V428M534.5 389V430M535.5 391V429M536.5 389V431M537.5 391V428M538.5 389V428M539.5 390V429M540.5 387V430M541.5 386V432M542.5 387V428M543.5 388V430M544.5 385V429M545.5 389V431M546.5 389V429M547.5 384V432M548.5 383V431M549.5 385V429M550.5 387V431M551.5 389V428M552.5 386V428M553.5 385V428M554.5 387V431M555.5 385V428M556.5 387V429M557.5 386V430M558.5 383V429M559.5 382V431M560.5 387V429M561.5 387V434M562.5 383V428M563.5 387V432M564.5 383V431M565.5 386V433M566.5 382V428M567.5 386V430M568.5 385V433M569.5 385V435M570.5 386V430M571.5 384V429M572.5 383V433M573.5 386V429M574.5 384V429M575.5 384V431M576.5 385V434M577.5 382V431M578.5 381V430M579.5 384V429M580.5 383V431M581.5 384V432M582.5 385V433M583.5 383V432M584.5 383V430M585.5 383V431M586.5 385V442M587.5 376V432M588.5 380V432M589.5 382V435M590.5 381V433M591.5 375V430M592.5 381V432M593.5 382V432M594.5 383V432M595.5 384V435M596.5 382V431M597.5 383V432M598.5 383V435M599.5 384V436M600.5 382V434M601.5 381V433M602.5 378V432M603.5 380V431M604.5 383V432M605.5 382V439M606.5 375V434M607.5 377V436M608.5 377V433M609.5 380V433M610.5 380V431M611.5 380V431M612.5 381V433M613.5 375V431M614.5 381V431M615.5 381V435M616.5 379V432M617.5 381V433M618.5 381V432M619.5 380V432M620.5 379V431M621.5 378V434M622.5 374V434M623.5 378V433M624.5 376V432M625.5 380V432M626.5 374V435M627.5 377V435M628.5 377V439M629.5 378V434M630.5 378V433M631.5 377V432M632.5 375V441M633.5 378V437M634.5 376V434M635.5 374V435M636.5 377V432M637.5 372V435M638.5 375V434M639.5 376V434M640.5 373V433M641.5 371V438M642.5 374V438M643.5 372V434M644.5 373V437M645.5 374V432M646.5 371V436M647.5 370V433M648.5 374V436M649.5 375V432M650.5 373V433M651.5 374V432M652.5 371V433M653.5 374V434M654.5 370V438M655.5 370V439M656.5 369V434M657.5 372V440M658.5 366V442M659.5 370V444M660.5 371V435M661.5 360V438M662.5 374V439M663.5 370V434M664.5 372V440M665.5 367V437M666.5 373V434M667.5 371V434M668.5 370V439M669.5 373V440M670.5 367V437M671.5 371V435M672.5 373V438M673.5 366V437M674.5 372V440M675.5 368V441M676.5 370V433M677.5 371V434M678.5 372V434M679.5 369V442M680.5 366V435M681.5 369V438M682.5 373V434M683.5 363V433M684.5 372V441M685.5 370V437M686.5 371V436M687.5 369V435M688.5 370V434M689.5 366V433M690.5 372V438M691.5 365V435M692.5 365V434M693.5 373V434M694.5 372V433M695.5 370V436M696.5 371V434M697.5 369V438M698.5 366V435M699.5 372V439M700.5 366V433M701.5 367V438M702.5 367V435M703.5 368V435M704.5 371V434M705.5 370V433M706.5 369V433M707.5 365V434M708.5 370V440M709.5 366V439M710.5 370V435M711.5 369V436M712.5 369V438M713.5 367V435M714.5 367V439M715.5 370V437M716.5 373V440M717.5 371V433M718.5 372V441M719.5 373V436M720.5 373V434M721.5 373V437M722.5 371V433M723.5 371V440M724.5 373V435M725.5 372V433M726.5 371V433M727.5 370V439M728.5 371V433M729.5 366V435M730.5 373V436M731.5 372V432M732.5 371V437M733.5 372V435M734.5 373V437M735.5 373V436M736.5 372V433M737.5 370V432M738.5 374V441M739.5 373V437M740.5 372V433M741.5 369V440M742.5 374V433M743.5 367V435M744.5 375V437M745.5 368V437M746.5 370V436M747.5 371V436M748.5 373V433M749.5 373V443M750.5 373V432M751.5 376V436M752.5 369V434M753.5 374V440M754.5 375V439M755.5 369V436M756.5 372V434M757.5 372V435M758.5 374V435M759.5 373V440M760.5 373V435M761.5 374V437M762.5 376V440M763.5 374V433M764.5 377V438M765.5 376V433M766.5 376V434M767.5 372V434M768.5 375V436M769.5 368V437M770.5 377V433M771.5 371V433M772.5 377V436M773.5 376V437M774.5 374V436M775.5 375V442M776.5 378V433M777.5 378V436M778.5 373V433M779.5 378V434M780.5 378V437M781.5 373V434M782.5 379V432M783.5 380V432M784.5 377V434M785.5 380V438M786.5 377V437M787.5 376V435M788.5 381V433M789.5 379V437M790.5 379V433M791.5 377V437M792.5 382V434M793.5 378V435M794.5 375V433M795.5 376V436M796.5 378V439M797.5 378V432M798.5 382V434M799.5 380V433M800.5 381V435M801.5 381V440M802.5 383V433M803.5 381V433M804.5 384V433M805.5 383V434M806.5 378V434M807.5 381V435M808.5 383V432M809.5 383V432M810.5 385V432M811.5 385V432M812.5 385V435M813.5 384V436M814.5 383V433M815.5 386V434M816.5 385V434M817.5 386V434M818.5 384V432M819.5 383V432M820.5 381V433M821.5 385V432M822.5 385V431M823.5 385V434M824.5 383V433M825.5 385V431M826.5 386V432M827.5 387V432M828.5 383V432M829.5 387V435M830.5 387V432M831.5 387V431M832.5 380V431M833.5 383V433M834.5 388V435M835.5 385V432M836.5 386V433M837.5 385V433M838.5 385V434M839.5 386V431M840.5 387V432M841.5 389V430M842.5 384V432M843.5 389V433M844.5 389V435M845.5 389V431M846.5 390V433M847.5 390V434M848.5 389V430M849.5 391V432M850.5 390V435M851.5 390V431M852.5 387V430M853.5 387V431M854.5 390V430M855.5 391V434M856.5 389V432M857.5 392V433M858.5 389V430M859.5 386V431M860.5 388V431M861.5 388V431M862.5 391V434M863.5 392V431M864.5 393V432M865.5 393V430M866.5 391V431M867.5 391V430M868.5 393V430M869.5 392V430M870.5 388V434M871.5 390V431M872.5 394V430M873.5 394V431M874.5 394V429M875.5 395V430M876.5 392V432M877.5 393V431M878.5 395V431M879.5 394V433M880.5 392V431M881.5 391V430M882.5 396V430M883.5 395V432M884.5 393V430M885.5 396V430M886.5 395V431M887.5 394V432M888.5 396V429M889.5 397V433M890.5 394V433M891.5 397V431M892.5 394V432M893.5 397V430M894.5 398V431M895.5 394V429M896.5 398V429M897.5 398V429M898.5 398V429M899.5 398V429M900.5 396V429M901.5 399V429M902.5 399V430M903.5 396V429M904.5 394V430M905.5 398V429M906.5 398V432M907.5 399V429M908.5 399V431M909.5 399V431M910.5 401V430M911.5 398V429M912.5 398V429M913.5 398V428M914.5 398V433M915.5 399V428M916.5 399V429M917.5 399V429M918.5 399V432M919.5 402V430M920.5 400V429M921.5 400V432M922.5 402V429M923.5 402V429M924.5 403V429M925.5 403V430M926.5 400V430M927.5 404V429M928.5 402V430M929.5 404V429M930.5 402V429M931.5 405V430M932.5 403V429M933.5 403V431M934.5 403V430M935.5 401V428M936.5 405V430M937.5 404V428M938.5 405V431M939.5 406V434M940.5 404V430M941.5 405V430M942.5 407V431M943.5 407V429M944.5 406V428M945.5 405V429M946.5 404V430M947.5 405V429M948.5 406V428M949.5 407V429M950.5 404V428M951.5 407V428M952.5 404V429M953.5 406V428M954.5 406V431M955.5 407V431M956.5 405V431M957.5 406V428M958.5 408V429M959.5 408V429M960.5 408V428M961.5 407V430M962.5 408V430M963.5 408V428M964.5 408V428M965.5 408V429M966.5 407V429M967.5 408V430M968.5 409V429M969.5 408V429M970.5 407V428M971.5 407V428M972.5 408V428M973.5 408V428M974.5 409V428M975.5 408V428M976.5 408V429M977.5 410V430M978.5 408V429M979.5 410V430M980.5 409V428M981.5 408V429M982.5 408V428M983.5 409V428M984.5 410V431M985.5 410V430M986.5 409V429M987.5 410V429M988.5 409V429M989.5 408V428M990.5 410V431M991.5 409V430M992.5 410V429M993.5 409V428M994.5 408V429M995.5 409V430M996.5 411V428M997.5 409V428M998.5 411V428M999.5 411V428M1000.5 411V430M1001.5 411V429M1002.5 409V429M1003.5 411V429M1004.5 410V428M1005.5 411V430M1006.5 411V428M1007.5 411V429M1008.5 412V429M1009.5 411V429M1010.5 411V430M1011.5 411V429M1012.5 412V427M1013.5 411V428M1014.5 412V428M1015.5 412V428M1016.5 409V427M1017.5 412V428M1018.5 410V430M1019.5 412V427M1020.5 410V427M1021.5 412V429M1022.5 412V427M1023.5 411V427M1024.5 412V429M1025.5 410V429M1026.5 411V428M1027.5 413V429M1028.5 412V428M1029.5 412V427M1030.5 411V427M1031.5 414V430M1032.5 413V427M1033.5 414V428M1034.5 412V429M1035.5 413V428M1036.5 413V428M1037.5 412V429M1038.5 411V427M1039.5 414V428M1040.5 413V429M1041.5 412V428M1042.5 413V428M1043.5 412V428M1044.5 414V428M1045.5 413V428M1046.5 413V431M1047.5 413V430M1048.5 414V430M1049.5 414V429M1050.5 414V428M1051.5 414V428M1052.5 413V430M1053.5 413V430M1054.5 414V430M1055.5 413V429M1056.5 413V429M1057.5 413V430M1058.5 411V430M1059.5 414V430M1060.5 413V429M1061.5 415V429M1062.5 415V429M1063.5 415V432M1064.5 415V429M1065.5 414V429M1066.5 415V432M1067.5 415V431M1068.5 414V429M1069.5 415V430M1070.5 414V429M1071.5 415V431M1072.5 414V429M1073.5 414V429M1074.5 415V430M1075.5 415V429M1076.5 413V429M1077.5 415V430M1078.5 414V431M1079.5 414V430M1080.5 416V430M1081.5 414V430M1082.5 415V430M1083.5 414V430M1084.5 414V431M1085.5 414V432M1086.5 414V430M1087.5 415V431M1088.5 415V433M1089.5 416V431M1090.5 412V431M1091.5 414V432M1092.5 415V432M1093.5 414V430M1094.5 416V431M1095.5 416V432M1096.5 416V432M1097.5 414V430M1098.5 414V432M1099.5 416V431M1100.5 416V431M1101.5 416V433M1102.5 414V432M1103.5 415V431M1104.5 417V431M1105.5 416V431M1106.5 414V431M1107.5 415V432M1108.5 416V431M1109.5 416V432M1110.5 415V431M1111.5 416V431M1112.5 417V432M1113.5 414V431M1114.5 417V432M1115.5 416V431M1116.5 415V433M1117.5 415V434M1118.5 414V431M1119.5 416V432M1120.5 416V433M1121.5 416V432M1122.5 417V432M1123.5 416V432M1124.5 416V432M1125.5 416V434M1126.5 417V432M1127.5 417V432M1128.5 417V435M1129.5 417V433M1130.5 417V433M1131.5 417V434M1132.5 416V433M1133.5 416V433M1134.5 417V434M1135.5 416V433M1136.5 415V432M1137.5 414V433M1138.5 417V432M1139.5 418V433M1140.5 416V434M1141.5 418V433M1142.5 418V432M1143.5 417V432M1144.5 417V433M1145.5 417V433M1146.5 417V433M1147.5 414V433M1148.5 416V433M1149.5 416V432M1150.5 418V434M1151.5 417V432M1152.5 415V433M1153.5 417V435M1154.5 417V432M1155.5 418V432M1156.5 417V433M1157.5 418V432M1158.5 416V433M1159.5 417V433M1160.5 418V436M1161.5 416V434M1162.5 416V434M1163.5 418V434M1164.5 418V433M1165.5 418V432M1166.5 417V433M1167.5 418V433M1168.5 418V435M1169.5 417V433M1170.5 418V434M1171.5 417V434M1172.5 418V432M1173.5 417V432M1174.5 416V433M1175.5 417V433M1176.5 418V433M1177.5 418V435M1178.5 418V432M1179.5 416V433M1180.5 418V432M1181.5 415V435M1182.5 418V433M1183.5 417V433M1184.5 416V433M1185.5 418V434M1186.5 418V434M1187.5 418V432M1188.5 417V432M1189.5 417V433M1190.5 418V434M1191.5 418V433M1192.5 415V433M1193.5 418V435M1194.5 416V432M1195.5 417V434M1196.5 414V433M1197.5 417V433M1198.5 413V433M1199.5 418V433M1200.5 417V432M1201.5 418V433M1202.5 418V434M1203.5 417V433M1204.5 417V435M1205.5 415V432M1206.5 417V433M1207.5 417V434M1208.5 418V433M1209.5 418V433M1210.5 418V432M1211.5 418V433M1212.5 418V435M1213.5 418V433M1214.5 418V433M1215.5 418V434M1216.5 417V433M1217.5 417V433M1218.5 417V433M1219.5 418V432M1220.5 416V433M1221.5 416V433M1222.5 418V434M1223.5 417V433M1224.5 418V434M1225.5 417V433M1226.5 418V434M1227.5 418V435M1228.5 418V433M1229.5 418V434M1230.5 415V435M1231.5 417V433M1232.5 418V433M1233.5 418V435M1234.5 417V432M1235.5 416V433M1236.5 418V432M1237.5 414V436M1238.5 417V432M1239.5 417V433M1240.5 416V434M1241.5 418V433M1242.5 418V435M1243.5 415V432M1244.5 417V433M1245.5 418V433M1246.5 418V433M1247.5 417V433M1248.5 417V432M1249.5 418V433M1250.5 418V433M1251.5 417V436M1252.5 416V432M1253.5 418V433M1254.5 415V433M1255.5 416V432M1256.5 418V432M1257.5 418V434M1258.5 418V434M1259.5 416V432M1260.5 418V432M1261.5 415V436M1262.5 417V435M1263.5 416V432M1264.5 416V432M1265.5 418V433M1266.5 417V434" stroke="#22ff22" stroke-width="1"/>
<path d="M69.5 422V429M70.5 422V429M71.5 422V429M72.5 422V429M73.5 422V429M74.5 421V428M75.5 421V428M76.5 421V428M77.5 421V428M78.5 421V428M79.5 421V428M80.5 422V429M81.5 422V429M82.5 422V429M83.5 422V429M84.5 422V429M85.5 422V429M86.5 422V429M87.5 422V429M88.5 422V429M89.5 421V428M90.5 421V428M91.5 421V428M92.5 422V429M93.5 422V429M94.5 422V429M95.5 422V429M96.5 422V429M97.5 422V429M98.5 422V429M99.5 422V429M100.5 421V428M101.5 421V428M102.5 421V428M103.5 421V428M104.5 421V428M105.5 421V428M106.5 421V428M107.5 422V429M108.5 422V429M109.5 422V429M110.5 421V428M111.5 421V428M112.5 421V428M113.5 421V428M114.5 421V428M115.5 422V429M116.5 422V429M117.5 421V428M118.5 422V429M119.5 421V428M120.5 421V428M121.5 421V428M122.5 422V429M123.5 421V428M124.5 421V428M125.5 422V429M126.5 421V428M127.5 421V428M128.5 422V429M129.5 421V428M130.5 421V428M131.5 422V429M132.5 422V429M133.5 422V429M134.5 422V429M135.5 422V429M136.5 422V429M137.5 422V429M138.5 422V429M139.5 422V429M140.5 422V429M141.5 422V429M142.5 422V429M143.5 421V428M144.5 421V428M145.5 422V429M146.5 422V429M147.5 422V429M148.5 422V429M149.5 422V429M150.5 422V429M151.5 422V429M152.5 422V429M153.5 422V429M154.5 422V429M155.5 422V429M156.5 422V429M157.5 422V429M158.5 422V429M159.5 422V429M160.5 422V429M161.5 422V429M162.5 422V429M163.5 422V429M164.5 422V429M165.5 421V428M166.5 421V428M167.5 421V428M168.5 421V428M169.5 421V428M170.5 421V428M171.5 421V428M172.5 422V429M173.5 422V429M174.5 422V429M175.5 421V428M176.5 421V428M177.5 421V428M178.5 421V428M179.5 421V428M180.5 422V429M181.5 421V428M182.5 421V428M183.5 422V429M184.5 421V428M185.5 421V428M186.5 421V428M187.5 422V429M188.5 421V428M189.5 421V428M190.5 422V429M191.5 422V429M192.5 422V429M193.5 421V428M194.5 421V428M195.5 421V428M196.5 421V428M197.5 421V428M198.5 422V429M199.5 422V429M200.5 421V428M201.5 421V428M202.5 422V429M203.5 422V429M204.5 422V429M205.5 421V428M206.5 421V428M207.5 421V428M208.5 421V428M209.5 420V427M210.5 421V428M211.5 421V428M212.5 421V428M213.5 421V428M214.5 421V428M215.5 421V428M216.5 421V428M217.5 421V428M218.5 421V428M219.5 421V428M220.5 421V428M221.5 421V428M222.5 420V427M223.5 420V427M224.5 420V427M225.5 420V427M226.5 420V427M227.5 421V428M228.5 421V428M229.5 422V429M230.5 422V429M231.5 422V429M232.5 421V428M233.5 421V428M234.5 421V428M235.5 421V428M236.5 421V428M237.5 421V428M238.5 421V428M239.5 421V428M240.5 421V428M241.5 421V428M242.5 420V427M243.5 421V428M244.5 420V427M245.5 420V427M246.5 420V427M247.5 420V427M248.5 420V427M249.5 420V427M250.5 421V428M251.5 421V428M252.5 421V428M253.5 420V427M254.5 420V427M255.5 420V427M256.5 420V427M257.5 420V427M258.5 420V427M259.5 420V427M260.5 420V427M261.5 420V427M262.5 420V427M263.5 420V427M264.5 420V427M265.5 420V427M266.5 420V427M267.5 420V427M268.5 420V427M269.5 420V427M270.5 420V427M271.5 420V427M272.5 420V427M273.5 420V427M274.5 420V427M275.5 419V426M276.5 420V427M277.5 420V427M278.5 420V427M279.5 420V427M280.5 420V427M281.5 420V427M282.5 420V427M283.5 419V426M284.5 419V426M285.5 420V427M286.5 420V427M287.5 420V427M288.5 420V427M289.5 420V427M290.5 420V427M291.5 420V427M292.5 420V427M293.5 420V427M294.5 420V427M295.5 420V427M296.5 420V427M297.5 420V427M298.5 420V427M299.5 420V427M300.5 420V427M301.5 420V427M302.5 420V427M303.5 420V427M304.5 420V427M305.5 420V427M306.5 420V427M307.5 420V427M308.5 420V427M309.5 420V427M310.5 420V427M311.5 420V427M312.5 420V427M313.5 420V427M314.5 420V427M315.5 420V427M316.5 420V427M317.5 420V427M318.5 420V427M319.5 420V427M320.5 419V426M321.5 419V426M322.5 419V426M323.5 419V426M324.5 419V426M325.5 419V426M326.5 419V426M327.5 419V426M328.5 419V426M329.5 419V426M330.5 419V426M331.5 419V426M332.5 419V426M333.5 420V427M334.5 419V426M335.5 419V426M336.5 419V426M337.5 419V426M338.5 419V426M339.5 419V426M340.5 420V427M341.5 419V426M342.5 419V426M343.5 419V426M344.5 419V426M345.5 419V426M346.5 419V426M347.5 419V426M348.5 419V426M349.5 419V426M350.5 419V426M351.5 419V426M352.5 419V426M353.5 419V426M354.5 419V426M355.5 419V426M356.5 419V426M357.5 419V426M358.5 419V426M359.5 419V426M360.5 419V426M361.5 419V426M362.5 419V426M363.5 419V426M364.5 419V426M365.5 419V426M366.5 419V426M367.5 419V426M368.5 419V426M369.5 419V426M370.5 419V426M371.5 419V426M372.5 419V426M373.5 419V426M374.5 419V426M375.5 418V425M376.5 419V426M377.5 418V425M378.5 418V425M379.5 418V425M380.5 418V425M381.5 418V425M382.5 418V425M383.5 418V425M384.5 418V425M385.5 418V425M386.5 418V425M387.5 418V425M388.5 418V425M389.5 418V425M390.5 418V425M391.5 417V424M392.5 417V424M393.5 417V424M394.5 417V424M395.5 417V424M396.5 417V424M397.5 417V424M398.5 417V424M399.5 417V424M400.5 417V424M401.5 417V424M402.5 417V424M403.5 417V424M404.5 417V424M405.5 416V423M406.5 416V423M407.5 416V423M408.5 416V423M409.5 416V423M410.5 417V424M411.5 416V423M412.5 416V423M413.5 416V423M414.5 415V422M415.5 415V422M416.5 415V422M417.5 415V422M418.5 415V422M419.5 415V422M420.5 415V422M421.5 416V423M422.5 416V423M423.5 416V423M424.5 416V423M425.5 416V423M426.5 415V422M427.5 415V422M428.5 415V422M429.5 415V422M430.5 415V422M431.5 415V422M432.5 415V422M433.5 415V422M434.5 415V422M435.5 416V423M436.5 415V422M437.5 416V423M438.5 416V423M439.5 416V423M440.5 416V423M441.5 416V423M442.5 415V422M443.5 415V422M444.5 415V422M445.5 414V421M446.5 415V422M447.5 414V422M448.5 414V422M449.5 414V422M450.5 414V422M451.5 414V422M452.5 414V422M453.5 413V421M454.5 413V421M455.5 413V421M456.5 413V421M457.5 413V421M458.5 413V421M459.5 413V421M460.5 413V421M461.5 413V421M462.5 413V421M463.5 413V421M464.5 413V421M465.5 413V421M466.5 414V422M467.5 413V421M468.5 413V421M469.5 413V421M470.5 413V421M471.5 413V421M472.5 412V420M473.5 413V421M474.5 412V420M475.5 412V420M476.5 413V421M477.5 413V421M478.5 413V421M479.5 413V421M480.5 413V421M481.5 412V420M482.5 412V420M483.5 412V420M484.5 412V420M485.5 412V420M486.5 412V420M487.5 412V420M488.5 412V420M489.5 412V420M490.5 412V420M491.5 412V420M492.5 412V420M493.5 412V420M494.5 412V420M495.5 412V420M496.5 412V420M497.5 412V420M498.5 412V420M499.5 412V420M500.5 412V420M501.5 412V420M502.5 412V420M503.5 411V419M504.5 411V419M505.5 411V419M506.5 411V419M507.5 411V419M508.5 411V419M509.5 411V419M510.5 411V419M511.5 411V419M512.5 411V419M513.5 411V419M514.5 411V419M515.5 411V419M516.5 411V419M517.5 411V419M518.5 410V418M519.5 410V418M520.5 410V418M521.5 410V418M522.5 410V418M523.5 411V419M524.5 411V419M525.5 411V419M526.5 411V419M527.5 411V419M528.5 411V419M529.5 411V419M530.5 410V418M531.5 410V418M532.5 410V418M533.5 410V418M534.5 410V418M535.5 411V419M536.5 410V418M537.5 410V418M538.5 411V419M539.5 411V419M540.5 411V419M541.5 410V418M542.5 410V418M543.5 410V418M544.5 409V417M545.5 409V417M546.5 410V417M547.5 410V417M548.5 411V418M549.5 411V418M550.5 411V418M551.5 411V418M552.5 411V418M553.5 410V417M554.5 410V417M555.5 410V417M556.5 410V417M557.5 410V417M558.5 410V417M559.5 410V417M560.5 410V417M561.5 410V417M562.5 410V417M563.5 410V417M564.5 410V417M565.5 410V417M566.5 409V416M567.5 409V416M568.5 410V417M569.5 410V417M570.5 410V417M571.5 411V418M572.5 410V417M573.5 410V417M574.5 410V417M575.5 409V416M576.5 409V416M577.5 408V415M578.5 409V416M579.5 409V416M580.5 409V416M581.5 409V416M582.5 409V416M583.5 409V416M584.5 409V416M585.5 409V416M586.5 408V415M587.5 408V415M588.5 409V416M589.5 408V415M590.5 409V416M591.5 409V416M592.5 408V415M593.5 408V415M594.5 408V415M595.5 408V415M596.5 408V415M597.5 409V416M598.5 408V415M599.5 408V415M600.5 409V416M601.5 408V415M602.5 408V415M603.5 408V415M604.5 408V415M605.5 408V415M606.5 408V415M607.5 408V415M608.5 408V415M609.5 408V415M610.5 408V415M611.5 408V415M612.5 407V414M613.5 407V414M614.5 407V414M615.5 407V414M616.5 407V414M617.5 407V414M618.5 407V414M619.5 407V414M620.5 407V414M621.5 407V414M622.5 407V414M623.5 407V414M624.5 407V414M625.5 408V415M626.5 407V414M627.5 408V415M628.5 408V415M629.5 407V414M630.5 407V414M631.5 407V414M632.5 407V414M633.5 407V414M634.5 407V414M635.5 407V414M636.5 407V414M637.5 407V414M638.5 407V414M639.5 407V414M640.5 407V414M641.5 407V414M642.5 407V414M643.5 407V414M644.5 407V414M645.5 406V413M646.5 407V414M647.5 407V414M648.5 407V414M649.5 407V414M650.5 407V414M651.5 406V413M652.5 406V413M653.5 406V413M654.5 406V413M655.5 406V413M656.5 406V413M657.5 406V413M658.5 406V413M659.5 406V413M660.5 406V413M661.5 406V413M662.5 406V413M663.5 406V413M664.5 406V413M665.5 406V413M666.5 406V413M667.5 406V413M668.5 406V413M669.5 406V413M670.5 406V413M671.5 406V413M672.5 405V412M673.5 405V412M674.5 405V412M675.5 405V412M676.5 405V412M677.5 405V412M678.5 405V412M679.5 405V412M680.5 406V413M681.5 405V412M682.5 405V412M683.5 405V412M684.5 405V412M685.5 405V412M686.5 405V412M687.5 405V412M688.5 405V412M689.5 405V412M690.5 405V412M691.5 405V412M692.5 406V413M693.5 406V413M694.5 406V413M695.5 406V413M696.5 406V413M697.5 406V413M698.5 406V413M699.5 406V413M700.5 406V413M701.5 406V413M702.5 407V414M703.5 406V413M704.5 407V414M705.5 407V414M706.5 407V414M707.5 406V413M708.5 406V413M709.5 406V413M710.5 406V413M711.5 406V413M712.5 406V413M713.5 406V413M714.5 406V413M715.5 406V413M716.5 406V413M717.5 406V413M718.5 406V413M719.5 406V413M720.5 407V414M721.5 407V414M722.5 407V414M723.5 407V414M724.5 407V414M725.5 407V414M726.5 407V414M727.5 407V414M728.5 407V414M729.5 407V414M730.5 407V414M731.5 407V414M732.5 407V414M733.5 407V414M734.5 408V415M735.5 407V414M736.5 407V414M737.5 408V415M738.5 408V415M739.5 407V414M740.5 407V414M741.5 407V414M742.5 407V414M743.5 407V414M744.5 408V415M745.5 408V415M746.5 408V415M747.5 408V415M748.5 407V414M749.5 407V414M750.5 408V415M751.5 408V415M752.5 408V415M753.5 407V414M754.5 407V414M755.5 407V414M756.5 407V414M757.5 407V414M758.5 407V414M759.5 407V414M760.5 408V415M761.5 408V415M762.5 408V415M763.5 408V415M764.5 408V415M765.5 408V415M766.5 408V415M767.5 407V414M768.5 407V414M769.5 407V414M770.5 407V414M771.5 407V414M772.5 408V415M773.5 408V415M774.5 408V415M775.5 408V415M776.5 408V415M777.5 408V415M778.5 408V415M779.5 408V415M780.5 408V415M781.5 408V415M782.5 407V414M783.5 408V415M784.5 408V415M785.5 408V415M786.5 408V415M787.5 408V415M788.5 408V415M789.5 409V416M790.5 409V416M791.5 408V415M792.5 408V415M793.5 408V415M794.5 408V415M795.5 408V415M796.5 408V415M797.5 408V415M798.5 408V415M799.5 408V415M800.5 408V415M801.5 408V415M802.5 409V416M803.5 409V416M804.5 409V416M805.5 409V416M806.5 409V416M807.5 409V416M808.5 409V416M809.5 409V416M810.5 409V416M811.5 409V416M812.5 409V416M813.5 409V416M814.5 409V416M815.5 410V417M816.5 409V416M817.5 409V416M818.5 410V417M819.5 410V417M820.5 410V417M821.5 410V417M822.5 410V417M823.5 410V417M824.5 410V417M825.5 409V416M826.5 409V416M827.5 410V417M828.5 410V417M829.5 410V417M830.5 410V417M831.5 410V417M832.5 410V417M833.5 410V417M834.5 410V417M835.5 410V417M836.5 411V418M837.5 410V417M838.5 411V418M839.5 411V418M840.5 411V418M841.5 411V418M842.5 411V418M843.5 411V418M844.5 411V418M845.5 411V418M846.5 411V418M847.5 411V418M848.5 411V418M849.5 411V418M850.5 411V418M851.5 411V418M852.5 412V419M853.5 412V419M854.5 412V419M855.5 412V419M856.5 412V419M857.5 411V419M858.5 411V419M859.5 412V420M860.5 411V419M861.5 412V420M862.5 412V420M863.5 412V420M864.5 412V420M865.5 412V420M866.5 412V420M867.5 412V420M868.5 412V420M869.5 412V420M870.5 412V420M871.5 413V421M872.5 412V420M873.5 413V421M874.5 413V421M875.5 413V421M876.5 412V420M877.5 412V420M878.5 412V420M879.5 412V420M880.5 412V420M881.5 412V420M882.5 413V421M883.5 413V421M884.5 413V421M885.5 414V422M886.5 413V421M887.5 414V422M888.5 413V421M889.5 413V421M890.5 413V421M891.5 413V421M892.5 413V421M893.5 413V421M894.5 413V421M895.5 413V421M896.5 413V421M897.5 413V421M898.5 414V422M899.5 414V422M900.5 414V422M901.5 414V422M902.5 415V423M903.5 414V422M904.5 414V422M905.5 414V422M906.5 414V422M907.5 414V422M908.5 414V422M909.5 414V422M910.5 415V423M911.5 415V423M912.5 415V423M913.5 415V423M914.5 414V422M915.5 414V422M916.5 414V422M917.5 414V422M918.5 414V422M919.5 414V422M920.5 414V422M921.5 414V422M922.5 414V422M923.5 414V422M924.5 414V422M925.5 414V422M926.5 415V423M927.5 415V423M928.5 415V423M929.5 415V423M930.5 416V424M931.5 415V423M932.5 416V424M933.5 416V424M934.5 416V424M935.5 416V424M936.5 415V423M937.5 416V424M938.5 416V424M939.5 416V424M940.5 416V424M941.5 416V423M942.5 416V423M943.5 417V424M944.5 417V424M945.5 416V423M946.5 416V423M947.5 416V423M948.5 416V423M949.5 416V423M950.5 416V423M951.5 417V424M952.5 417V424M953.5 417V424M954.5 417V424M955.5 417V424M956.5 417V424M957.5 417V424M958.5 417V424M959.5 417V424M960.5 417V424M961.5 416V423M962.5 417V424M963.5 417V424M964.5 417V424M965.5 417V424M966.5 417V424M967.5 418V425M968.5 417V424M969.5 417V424M970.5 417V424M971.5 418V425M972.5 417V424M973.5 418V425M974.5 418V425M975.5 418V425M976.5 417V424M977.5 417V424M978.5 417V424M979.5 417V424M980.5 417V424M981.5 418V425M982.5 418V425M983.5 418V425M984.5 418V425M985.5 418V425M986.5 418V425M987.5 418V425M988.5 418V425M989.5 418V425M990.5 418V425M991.5 418V425M992.5 419V426M993.5 418V425M994.5 418V425M995.5 419V426M996.5 419V426M997.5 419V426M998.5 419V426M999.5 418V425M1000.5 419V426M1001.5 418V425M1002.5 418V425M1003.5 418V425M1004.5 418V425M1005.5 418V425M1006.5 419V426M1007.5 419V426M1008.5 419V426M1009.5 419V426M1010.5 419V426M1011.5 419V426M1012.5 419V426M1013.5 419V426M1014.5 420V427M1015.5 420V427M1016.5 420V427M1017.5 419V426M1018.5 419V426M1019.5 419V426M1020.5 419V426M1021.5 419V426M1022.5 420V427M1023.5 420V427M1024.5 420V427M1025.5 420V427M1026.5 419V426M1027.5 420V427M1028.5 420V427M1029.5 420V427M1030.5 420V427M1031.5 420V427M1032.5 420V427M1033.5 420V427M1034.5 420V427M1035.5 420V427M1036.5 420V427M1037.5 420V427M1038.5 420V427M1039.5 420V427M1040.5 420V427M1041.5 420V427M1042.5 420V427M1043.5 419V426M1044.5 419V426M1045.5 420V427M1046.5 420V427M1047.5 420V427M1048.5 421V428M1049.5 421V428M1050.5 421V428M1051.5 420V427M1052.5 421V428M1053.5 421V428M1054.5 421V428M1055.5 421V428M1056.5 420V427M1057.5 420V427M1058.5 420V427M1059.5 420V427M1060.5 420V427M1061.5 420V427M1062.5 420V427M1063.5 420V427M1064.5 420V427M1065.5 420V427M1066.5 420V427M1067.5 420V427M1068.5 420V427M1069.5 420V427M1070.5 420V427M1071.5 420V427M1072.5 421V428M1073.5 420V427M1074.5 420V427M1075.5 420V427M1076.5 420V427M1077.5 419V426M1078.5 419V426M1079.5 419V426M1080.5 420V427M1081.5 420V427M1082.5 420V427M1083.5 420V427M1084.5 421V428M1085.5 421V428M1086.5 421V428M1087.5 421V428M1088.5 421V428M1089.5 421V428M1090.5 421V428M1091.5 420V427M1092.5 420V427M1093.5 420V427M1094.5 421V428M1095.5 421V428M1096.5 421V428M1097.5 421V428M1098.5 421V428M1099.5 421V428M1100.5 421V428M1101.5 421V428M1102.5 421V428M1103.5 421V428M1104.5 421V428M1105.5 421V428M1106.5 421V428M1107.5 421V428M1108.5 421V428M1109.5 421V428M1110.5 421V428M1111.5 421V428M1112.5 421V428M1113.5 421V428M1114.5 421V428M1115.5 421V428M1116.5 421V428M1117.5 421V428M1118.5 421V428M1119.5 422V429M1120.5 421V428M1121.5 422V429M1122.5 422V429M1123.5 422V429M1124.5 421V428M1125.5 422V429M1126.5 422V429M1127.5 421V428M1128.5 421V428M1129.5 421V428M1130.5 421V428M1131.5 421V428M1132.5 421V428M1133.5 422V429M1134.5 422V429M1135.5 422V429M1136.5 422V429M1137.5 422V429M1138.5 422V429M1139.5 422V429M1140.5 421V428M1141.5 421V428M1142.5 421V428M1143.5 421V428M1144.5 421V428M1145.5 421V428M1146.5 421V428M1147.5 421V428M1148.5 422V429M1149.5 421V428M1150.5 422V429M1151.5 422V429M1152.5 422V429M1153.5 421V428M1154.5 421V428M1155.5 421V428M1156.5 421V428M1157.5 421V428M1158.5 421V428M1159.5 421V428M1160.5 421V428M1161.5 421V428M1162.5 422V429M1163.5 422V429M1164.5 422V429M1165.5 422V429M1166.5 422V429M1167.5 421V428M1168.5 421V428M1169.5 421V428M1170.5 421V428M1171.5 421V428M1172.5 421V428M1173.5 422V429M1174.5 422V429M1175.5 422V429M1176.5 422V429M1177.5 422V429M1178.5 422V429M1179.5 422V429M1180.5 422V429M1181.5 422V429M1182.5 422V429M1183.5 422V429M1184.5 421V428M1185.5 422V429M1186.5 422V429M1187.5 422V429M1188.5 422V429M1189.5 422V429M1190.5 421V428M1191.5 421V428M1192.5 421V428M1193.5 421V428M1194.5 421V428M1195.5 421V428M1196.5 421V428M1197.5 422V429M1198.5 422V429M1199.5 421V428M1200.5 421V428M1201.5 421V428M1202.5 421V428M1203.5 421V428M1204.5 422V429M1205.5 422V429M1206.5 422V429M1207.5 422V429M1208.5 422V429M1209.5 422V429M1210.5 422V429M1211.5 422V429M1212.5 422V429M1213.5 421V428M1214.5 422V429M1215.5 421V428M1216.5 421V428M1217.5 422V429M1218.5 422V429M1219.5 422V429M1220.5 422V429M1221.5 422V429M1222.5 422V429M1223.5 421V428M1224.5 421V428M1225.5 421V428M1226.5 421V428M1227.5 421V428M1228.5 421V428M1229.5 421V428M1230.5 421V428M1231.5 421V428M1232.5 421V428M1233.5 421V428M1234.5 422V429M1235.5 422V429M1236.5 422V429M1237.5 422V429M1238.5 421V428M1239.5 421V428M1240.5 421V428M1241.5 421V428M1242.5 421V428M1243.5 422V429M1244.5 422V429M1245.5 422V429M1246.5 422V429M1247.5 421V428M1248.5 421V428M1249.5 421V428M1250.5 421V428M1251.5 421V428M1252.5 422V429M1253.5 422V429M1254.5 422V429M1255.5 422V429M1256.5 422V429M1257.5 422V429M1258.5 422V429M1259.5 421V428M1260.5 421V428M1261.5 421V428M1262.5 421V428M1263.5 421V428M1264.5 421V428M1265.5 421V428M1266.5 421V428" stroke="#80ff80" stroke-width="1"/>
<path d="M447.5 416V420M448.5 416V420M449.5 416V420M450.5 416V420M451.5 416V420M452.5 416V420M453.5 415V419M454.5 415V419M455.5 415V419M456.5 415V419M457.5 415V419M458.5 415V419M459.5 415V419M460.5 415V419M461.5 415V419M462.5 415V419M463.5 415V419M464.5 415V419M465.5 415V419M466.5 416V420M467.5 415V419M468.5 415V419M469.5 415V419M470.5 415V419M471.5 415V419M472.5 414V418M473.5 415V419M474.5 414V418M475.5 414V418M476.5 415V419M477.5 415V419M478.5 415V419M479.5 415V419M480.5 415V419M481.5 414V418M482.5 414V418M483.5 414V418M484.5 414V418M485.5 414V418M486.5 414V418M487.5 414V418M488.5 414V418M489.5 414V418M490.5 414V418M491.5 414V418M492.5 414V418M493.5 414V418M494.5 414V418M495.5 414V418M496.5 414V418M497.5 414V418M498.5 414V418M499.5 414V418M500.5 414V418M501.5 414V418M502.5 414V418M503.5 413V417M504.5 413V417M505.5 413V417M506.5 413V417M507.5 413V417M508.5 413V417M509.5 413V417M510.5 413V417M511.5 413V417M512.5 413V417M513.5 413V417M514.5 413V417M515.5 413V417M516.5 413V417M517.5 413V417M518.5 412V416M519.5 412V416M520.5 412V416M521.5 412V416M522.5 412V416M523.5 413V417M524.5 413V417M525.5 413V417M526.5 413V417M527.5 413V417M528.5 413V417M529.5 413V417M530.5 412V416M531.5 412V416M532.5 412V416M533.5 412V416M534.5 412V416M535.5 413V417M536.5 412V416M537.5 412V416M538.5 413V417M539.5 413V417M540.5 413V417M541.5 412V416M542.5 412V416M543.5 412V416M544.5 411V415M545.5 411V415M857.5 413V417M858.5 413V417M859.5 414V418M860.5 413V417M861.5 414V418M862.5 414V418M863.5 414V418M864.5 414V418M865.5 414V418M866.5 414V418M867.5 414V418M868.5 414V418M869.5 414V418M870.5 414V418M871.5 415V419M872.5 414V418M873.5 415V419M874.5 415V419M875.5 415V419M876.5 414V418M877.5 414V418M878.5 414V418M879.5 414V418M880.5 414V418M881.5 414V418M882.5 415V419M883.5 415V419M884.5 415V419M885.5 416V420M886.5 415V419M887.5 416V420M888.5 415V419M889.5 415V419M890.5 415V419M891.5 415V419M892.5 415V419M893.5 415V419M894.5 415V419M895.5 415V419M896.5 415V419M897.5 415V419M898.5 416V420M899.5 416V420M900.5 416V420M901.5 416V420M902.5 417V421M903.5 416V420M904.5 416V420M905.5 416V420M906.5 416V420M907.5 416V420M908.5 416V420M909.5 416V420M910.5 417V421M911.5 417V421M912.5 417V421M913.5 417V421M914.5 416V420M915.5 416V420M916.5 416V420M917.5 416V420M918.5 416V420M919.5 416V420M920.5 416V420M921.5 416V420M922.5 416V420M923.5 416V420M924.5 416V420M925.5 416V420M926.5 417V421M927.5 417V421M928.5 417V421M929.5 417V421M930.5 418V422M931.5 417V421M932.5 418V422M933.5 418V422M934.5 418V422M935.5 418V422M936.5 417V421M937.5 418V422M938.5 418V422M939.5 418V422M940.5 418V422" stroke="#a8ffa8" stroke-width="1"/>
<path d="M69.5 423V427M70.5 423V427M71.5 424V427M72.5 424V427M73.5 424V427M74.5 423V427M75.5 423V427M76.5 423V426M77.5 423V426M78.5 423V427M79.5 423V427M80.5 424V427M81.5 424V427M82.5 424V427M83.5 424V427M84.5 424V427M85.5 424V427M86.5 424V427M87.5 424V427M88.5 424V427M89.5 423V427M90.5 423V427M91.5 423V427M92.5 423V427M93.5 424V427M94.5 424V427M95.5 424V427M96.5 424V427M97.5 424V427M98.5 424V427M99.5 423V427M100.5 423V426M101.5 423V426M102.5 423V426M103.5 423V426M104.5 423V427M105.5 423V427M106.5 423V427M107.5 424V427M108.5 424V427M109.5 423V427M110.5 423V427M111.5 423V427M112.5 423V427M113.5 423V426M114.5 423V427M115.5 424V427M116.5 424V427M117.5 423V427M118.5 423V427M119.5 423V427M120.5 423V427M121.5 423V427M122.5 424V427M123.5 423V427M124.5 423V427M125.5 424V427M126.5 423V427M127.5 423V427M128.5 423V427M129.5 423V427M130.5 423V427M131.5 423V427M132.5 423V427M133.5 424V427M134.5 424V427M135.5 424V427M136.5 424V427M137.5 424V428M138.5 424V427M139.5 424V427M140.5 424V427M141.5 424V427M142.5 423V427M143.5 423V427M144.5 423V427M145.5 424V427M146.5 424V427M147.5 424V427M148.5 424V428M149.5 424V428M150.5 424V427M151.5 424V427M152.5 424V427M153.5 424V427M154.5 424V427M155.5 424V427M156.5 424V427M157.5 424V427M158.5 424V427M159.5 424V427M160.5 424V427M161.5 424V427M162.5 423V427M163.5 424V427M164.5 424V427M165.5 423V427M166.5 423V426M167.5 423V426M168.5 423V426M169.5 423V426M170.5 423V427M171.5 423V427M172.5 424V427M173.5 424V427M174.5 424V427M175.5 423V427M176.5 423V427M177.5 423V427M178.5 423V427M179.5 423V427M180.5 423V427M181.5 423V427M182.5 423V427M183.5 423V427M184.5 423V427M185.5 423V427M186.5 423V427M187.5 423V427M188.5 423V427M189.5 423V427M190.5 424V427M191.5 424V427M192.5 423V427M193.5 423V427M194.5 423V426M195.5 423V427M196.5 423V427M197.5 423V427M198.5 423V427M199.5 424V427M200.5 423V427M201.5 423V427M202.5 424V427M203.5 424V427M204.5 424V427M205.5 423V427M206.5 423V427M207.5 423V426M208.5 423V426M209.5 422V426M210.5 423V426M211.5 423V426M212.5 423V427M213.5 423V426M214.5 423V426M215.5 423V426M216.5 423V426M217.5 423V426M218.5 423V426M219.5 423V426M220.5 423V426M221.5 423V426M222.5 422V426M223.5 422V426M224.5 422V425M225.5 422V425M226.5 422V426M227.5 423V426M228.5 423V427M229.5 423V427M230.5 424V427M231.5 424V427M232.5 423V427M233.5 423V427M234.5 423V426M235.5 423V426M236.5 423V426M237.5 423V426M238.5 422V426M239.5 423V426M240.5 423V426M241.5 423V426M242.5 422V426M243.5 422V426M244.5 422V426M245.5 422V425M246.5 422V425M247.5 422V426M248.5 422V426M249.5 422V426M250.5 423V426M251.5 423V426M252.5 423V426M253.5 422V426M254.5 422V425M255.5 422V425M256.5 422V425M257.5 422V425M258.5 422V426M259.5 422V425M260.5 422V426M261.5 422V426M262.5 422V425M263.5 422V425M264.5 422V425M265.5 422V425M266.5 422V425M267.5 422V425M268.5 422V425M269.5 422V425M270.5 422V425M271.5 422V425M272.5 422V425M273.5 421V425M274.5 422V425M275.5 421V425M276.5 422V425M277.5 422V425M278.5 422V426M279.5 422V425M280.5 422V425M281.5 422V425M282.5 421V425M283.5 421V425M284.5 421V425M285.5 422V425M286.5 422V425M287.5 422V425M288.5 422V425M289.5 422V425M290.5 422V425M291.5 422V425M292.5 422V425M293.5 422V425M294.5 422V425M295.5 422V425M296.5 422V425M297.5 422V425M298.5 422V425M299.5 422V425M300.5 422V425M301.5 422V425M302.5 422V425M303.5 422V425M304.5 422V425M305.5 422V425M306.5 422V425M307.5 422V425M308.5 422V425M309.5 422V425M310.5 422V425M311.5 422V425M312.5 421V425M313.5 422V425M314.5 421V425M315.5 422V425M316.5 422V425M317.5 422V425M318.5 422V425M319.5 422V425M320.5 421V425M321.5 421V425M322.5 421V425M323.5 421V425M324.5 421V424M325.5 421V425M326.5 421V424M327.5 421V424M328.5 421V424M329.5 421V424M330.5 421V424M331.5 421V425M332.5 421V425M333.5 421V425M334.5 421V425M335.5 421V424M336.5 421V425M337.5 421V425M338.5 421V425M339.5 421V425M340.5 421V425M341.5 421V425M342.5 421V425M343.5 421V424M344.5 421V424M345.5 421V424M346.5 421V424M347.5 421V424M348.5 421V424M349.5 421V424M350.5 421V424M351.5 421V424M352.5 421V424M353.5 421V424M354.5 421V424M355.5 421V425M356.5 421V425M357.5 421V425M358.5 421V424M359.5 421V424M360.5 421V424M361.5 421V424M362.5 421V424M363.5 421V425M364.5 421V425M365.5 421V425M366.5 421V424M367.5 420V424M368.5 421V424M369.5 421V424M370.5 421V424M371.5 421V424M372.5 421V424M373.5 421V424M374.5 421V424M375.5 420V424M376.5 420V424M377.5 420V424M378.5 420V423M379.5 420V423M380.5 420V423M381.5 420V423M382.5 420V423M383.5 420V423M384.5 420V423M385.5 420V423M386.5 420V423M387.5 420V423M388.5 420V423M389.5 420V423M390.5 419V423M391.5 419V423M392.5 419V422M393.5 419V422M394.5 419V423M395.5 419V422M396.5 419V422M397.5 419V422M398.5 419V423M399.5 419V423M400.5 419V423M401.5 419V423M402.5 419V423M403.5 419V422M404.5 419V422M405.5 418V422M406.5 418V422M407.5 418V422M408.5 418V422M409.5 418V422M410.5 418V422M411.5 418V421M412.5 418V421M413.5 418V421M414.5 417V421M415.5 417V421M416.5 417V421M417.5 417V420M418.5 417V420M419.5 417V421M420.5 417V421M421.5 417V421M422.5 418V421M423.5 418V421M424.5 418V421M425.5 418V421M426.5 417V421M427.5 417V421M428.5 417V421M429.5 417V420M430.5 417V420M431.5 417V420M432.5 417V420M433.5 417V420M434.5 417V421M435.5 417V421M436.5 417V421M437.5 418V421M438.5 417V421M439.5 418V421M440.5 418V421M441.5 418V421M442.5 417V421M443.5 417V420M444.5 417V420M445.5 416V420M446.5 416V420M941.5 418V422M942.5 418V422M943.5 418V422M944.5 418V422M945.5 418V422M946.5 418V421M947.5 418V421M948.5 418V421M949.5 418V422M950.5 418V422M951.5 418V422M952.5 418V422M953.5 419V422M954.5 418V422M955.5 418V422M956.5 419V422M957.5 419V422M958.5 418V422M959.5 418V422M960.5 419V422M961.5 418V422M962.5 419V422M963.5 419V422M964.5 419V422M965.5 419V422M966.5 419V423M967.5 419V423M968.5 419V423M969.5 419V423M970.5 419V423M971.5 420V423M972.5 419V423M973.5 419V423M974.5 420V423M975.5 420V423M976.5 419V422M977.5 419V423M978.5 419V423M979.5 419V422M980.5 419V423M981.5 420V423M982.5 420V423M983.5 419V423M984.5 420V423M985.5 419V423M986.5 420V423M987.5 419V423M988.5 420V423M989.5 420V424M990.5 420V423M991.5 420V424M992.5 420V424M993.5 420V424M994.5 420V424M995.5 421V424M996.5 421V424M997.5 420V424M998.5 421V424M999.5 420V424M1000.5 420V424M1001.5 420V424M1002.5 420V423M1003.5 420V423M1004.5 420V424M1005.5 420V424M1006.5 421V424M1007.5 421V424M1008.5 421V424M1009.5 421V424M1010.5 421V424M1011.5 421V424M1012.5 421V425M1013.5 421V425M1014.5 421V425M1015.5 422V425M1016.5 421V425M1017.5 421V424M1018.5 421V424M1019.5 421V425M1020.5 421V425M1021.5 421V425M1022.5 421V425M1023.5 422V425M1024.5 421V425M1025.5 421V425M1026.5 421V425M1027.5 422V425M1028.5 422V425M1029.5 422V425M1030.5 422V425M1031.5 422V425M1032.5 422V426M1033.5 422V425M1034.5 422V426M1035.5 422V425M1036.5 422V425M1037.5 422V425M1038.5 422V425M1039.5 422V425M1040.5 422V425M1041.5 422V425M1042.5 422V425M1043.5 421V425M1044.5 421V425M1045.5 421V425M1046.5 422V425M1047.5 422V426M1048.5 423V426M1049.5 423V426M1050.5 423V426M1051.5 422V426M1052.5 422V426M1053.5 423V426M1054.5 422V426M1055.5 422V426M1056.5 422V426M1057.5 422V426M1058.5 422V425M1059.5 422V425M1060.5 422V425M1061.5 422V426M1062.5 422V425M1063.5 422V426M1064.5 422V426M1065.5 422V425M1066.5 422V425M1067.5 422V425M1068.5 422V425M1069.5 422V425M1070.5 422V426M1071.5 422V426M1072.5 422V426M1073.5 422V425M1074.5 422V425M1075.5 422V425M1076.5 422V425M1077.5 421V425M1078.5 421V425M1079.5 421V425M1080.5 422V425M1081.5 422V425M1082.5 422V426M1083.5 422V426M1084.5 422V426M1085.5 423V426M1086.5 423V426M1087.5 423V426M1088.5 423V426M1089.5 423V426M1090.5 423V426M1091.5 422V426M1092.5 422V426M1093.5 422V426M1094.5 423V426M1095.5 423V426M1096.5 423V427M1097.5 423V427M1098.5 423V427M1099.5 423V427M1100.5 423V426M1101.5 423V426M1102.5 423V426M1103.5 423V426M1104.5 422V426M1105.5 423V427M1106.5 423V426M1107.5 423V426M1108.5 423V427M1109.5 423V427M1110.5 423V426M1111.5 423V426M1112.5 423V426M1113.5 423V426M1114.5 423V426M1115.5 423V427M1116.5 423V426M1117.5 423V427M1118.5 423V427M1119.5 424V427M1120.5 423V427M1121.5 424V427M1122.5 424V427M1123.5 424V427M1124.5 423V427M1125.5 424V427M1126.5 423V427M1127.5 423V427M1128.5 423V426M1129.5 423V426M1130.5 423V426M1131.5 423V426M1132.5 423V427M1133.5 424V427M1134.5 424V427M1135.5 423V427M1136.5 423V427M1137.5 423V427M1138.5 423V427M1139.5 424V427M1140.5 423V427M1141.5 423V427M1142.5 423V427M1143.5 423V426M1144.5 423V427M1145.5 423V427M1146.5 423V427M1147.5 423V427M1148.5 424V427M1149.5 423V427M1150.5 424V427M1151.5 424V427M1152.5 423V427M1153.5 423V426M1154.5 423V426M1155.5 423V426M1156.5 423V426M1157.5 423V426M1158.5 423V426M1159.5 423V427M1160.5 423V426M1161.5 423V426M1162.5 424V427M1163.5 423V427M1164.5 424V427M1165.5 424V427M1166.5 423V427M1167.5 423V426M1168.5 423V426M1169.5 423V426M1170.5 423V427M1171.5 423V427M1172.5 423V427M1173.5 424V427M1174.5 423V427M1175.5 423V427M1176.5 424V427M1177.5 424V427M1178.5 424V427M1179.5 424V427M1180.5 424V427M1181.5 423V427M1182.5 424V427M1183.5 424V427M1184.5 423V427M1185.5 423V427M1186.5 424V427M1187.5 424V427M1188.5 423V427M1189.5 424V427M1190.5 423V427M1191.5 423V427M1192.5 423V426M1193.5 423V426M1194.5 423V426M1195.5 423V426M1196.5 423V427M1197.5 424V427M1198.5 424V427M1199.5 423V427M1200.5 423V427M1201.5 423V427M1202.5 423V427M1203.5 423V427M1204.5 424V427M1205.5 424V427M1206.5 424V427M1207.5 424V427M1208.5 424V427M1209.5 424V427M1210.5 424V427M1211.5 423V427M1212.5 424V427M1213.5 423V427M1214.5 423V427M1215.5 423V427M1216.5 423V427M1217.5 423V427M1218.5 424V427M1219.5 424V427M1220.5 424V427M1221.5 424V427M1222.5 424V427M1223.5 423V427M1224.5 423V427M1225.5 423V426M1226.5 423V426M1227.5 423V426M1228.5 423V426M1229.5 423V426M1230.5 423V426M1231.5 423V426M1232.5 423V426M1233.5 423V427M1234.5 424V427M1235.5 424V427M1236.5 424V427M1237.5 424V427M1238.5 423V427M1239.5 423V426M1240.5 423V426M1241.5 423V426M1242.5 423V427M1243.5 424V427M1244.5 424V427M1245.5 424V427M1246.5 424V427M1247.5 423V427M1248.5 423V426M1249.5 423V427M1250.5 423V426M1251.5 423V426M1252.5 423V427M1253.5 424V427M1254.5 424V427M1255.5 424V427M1256.5 424V427M1257.5 424V427M1258.5 423V427M1259.5 423V427M1260.5 423V427M1261.5 423V427M1262.5 423V426M1263.5 423V426M1264.5 423V426M1265.5 423V426M1266.5 423V427" stroke="#dcffdc" stroke-width="1"/>
<g stroke="#fff" stroke-width="1" fill="none">
<path d="M74 36.5H144M69 51L106 37"/>
<path d="M570 62.5H659"/>
<path d="M493 314.5H591M546 314.5L604 330"/>
<path d="M382 409.5H443M414 409.5L455 420.5"/>
</g>
<g font-family="Liberation Sans" font-size="11" fill="#fff">
<text x="74" y="33.5">torque_trigger</text>
<text x="570" y="59.5">Torque_Sensor</text>
<text x="493" y="311.5">AOUT1_CURRENT</text>
<text x="382" y="406.5">VM_Current</text>
</g>
<g font-family="Liberation Sans" font-size="9.5">
<text x="55" y="48" fill="#00e8f0">C3</text><path d="M58 50h10v2h-10z" fill="#00e8f0"/>
<text x="55" y="170" fill="#00c000">C4</text><path d="M58 172h10v2h-10zM58 172h1v3h-1z" fill="#00c000"/>
<rect x="52" y="260" width="16" height="11" rx="2" fill="#ffff00"/><text x="54" y="269.5" fill="#3a3000">C1</text><path d="M57 272h11v2h-11z" fill="#ffff00"/>
<text x="55" y="429" fill="#e0f0ff">C5</text><path d="M58 431h10v2h-10zM58 431h1v3h-1z" fill="#e0ffe0"/>
</g>
<path d="M68 50h1.5l5.5 6h-5v12h-2z" fill="#fff"/>
<path d="M68 170h1.5l5.5 6h-5v12h-2z" fill="#fff"/>
<path d="M68 289h1.5l5.5 6h-5v12h-2z" fill="#fff"/>
<path d="M68 423h1.5l5.5 6h-5v12h-2z" fill="#fff"/>
<path d="M1266 36h2v14h-1.5l-6-6h5.5z" fill="#fff"/>
<path d="M1266 130h2v14h-1.5l-6-6h5.5z" fill="#fff"/>
<path d="M1266 232h2v14h-1.5l-6-6h5.5z" fill="#fff"/>
<path d="M1266 410h2v15h-1.5l-6-6h5.5z" fill="#fff"/>
<path d="M1268 17.5L1276 14V21Z" fill="#00e8f0"/>
<path d="M668 542L672 549.5H664Z" fill="#00e8f0"/>
</svg>
<div class="t yl" style="top:4.0px">8.05 A</div>
<div class="t yl" style="top:63.5px">6.05 A</div>
<div class="t yl" style="top:131.0px">4.05 A</div>
<div class="t yl" style="top:198.5px">2.05 A</div>
<div class="t yl" style="top:266.0px">50 mA</div>
<div class="t yl" style="top:333.5px">-1.95 A</div>
<div class="t yl" style="top:401.0px">-3.95 A</div>
<div class="t yl" style="top:468.5px">-5.95 A</div>
<div class="t yl" style="top:530.0px">-7.95 A</div>
<div class="t xl" style="top:546px;left:68px">-5 s</div>
<div class="t xl" style="top:546px;left:138px;width:100px;text-align:center">-4 s</div>
<div class="t xl" style="top:546px;left:258px;width:100px;text-align:center">-3 s</div>
<div class="t xl" style="top:546px;left:378px;width:100px;text-align:center">-2 s</div>
<div class="t xl" style="top:546px;left:498px;width:100px;text-align:center">-1 s</div>
<div class="t xl" style="top:546px;left:618px;width:100px;text-align:center">0 s</div>
<div class="t xl" style="top:546px;left:738px;width:100px;text-align:center">1 s</div>
<div class="t xl" style="top:546px;left:858px;width:100px;text-align:center">2 s</div>
<div class="t xl" style="top:546px;left:978px;width:100px;text-align:center">3 s</div>
<div class="t xl" style="top:546px;left:1098px;width:100px;text-align:center">4 s</div>
<div class="t xl" style="top:546px;left:1168px;width:100px;text-align:right">5 s</div>
<div class="t" style="top:530px;left:72px;font-size:10px;font-weight:bold">C8</div>
<div class="t" style="top:530px;left:1249px;font-size:10px;font-weight:bold">C8</div>
<div class="box" style="left:1px;top:588px;width:1261px;height:1px;background:#6a6a6a"></div>
<div class="box" style="left:1px;top:589px;width:1261px;height:15px;background:#1a1a1a"></div>
<div class="t m" style="left:3px;top:575px;font-weight:bold">Measure</div>
<div class="t m" style="left:3px;top:591px">value</div>
<div class="t m" style="left:3px;top:607px">status</div>
<div class="t m" style="left:44px;width:150px;text-align:right;top:575px;color:#fff">P1:max(C1)</div>
<div class="t m" style="left:44px;width:150px;text-align:right;top:591px">2.51 A</div>
<svg style="left:182px;top:607px" width="12" height="11"><path d="M1 5.5L4.5 9L11 1.5" stroke="#00e000" stroke-width="2.4" fill="none"/></svg>
<div class="t m" style="left:141px;width:150px;text-align:right;top:575px;color:#fff">P2:pkpk(C4)</div>
<div class="t m" style="left:141px;width:150px;text-align:right;top:591px">3.732 V</div>
<svg style="left:279px;top:607px" width="12" height="11"><path d="M1 5.5L4.5 9L11 1.5" stroke="#00e000" stroke-width="2.4" fill="none"/></svg>
<div class="t m" style="left:238px;width:150px;text-align:right;top:575px;color:#fff">P3:mean(C5)</div>
<div class="t m" style="left:238px;width:150px;text-align:right;top:591px">405 mA</div>
<svg style="left:376px;top:607px" width="12" height="11"><path d="M1 5.5L4.5 9L11 1.5" stroke="#00e000" stroke-width="2.4" fill="none"/></svg>
<div class="t m" style="left:335px;width:150px;text-align:right;top:575px;color:#fff">P4:min(C4)</div>
<div class="t m" style="left:335px;width:150px;text-align:right;top:591px">-88 mV</div>
<svg style="left:473px;top:607px" width="12" height="11"><path d="M1 5.5L4.5 9L11 1.5" stroke="#00e000" stroke-width="2.4" fill="none"/></svg>
<div class="t m" style="left:432px;width:150px;text-align:right;top:575px;color:#fff">P5:max(C4)</div>
<div class="t m" style="left:432px;width:150px;text-align:right;top:591px">3.64 V</div>
<svg style="left:570px;top:607px" width="12" height="11"><path d="M1 5.5L4.5 9L11 1.5" stroke="#00e000" stroke-width="2.4" fill="none"/></svg>
<div class="t m" style="left:529px;width:150px;text-align:right;top:575px;color:#fff">P6:rms(C1)</div>
<div class="t m" style="left:529px;width:150px;text-align:right;top:591px">1.019 A</div>
<svg style="left:667px;top:607px" width="12" height="11"><path d="M1 5.5L4.5 9L11 1.5" stroke="#00e000" stroke-width="2.4" fill="none"/></svg>
<div class="t m" style="left:626px;width:150px;text-align:right;top:575px;color:#fff">P7:rms(C5)</div>
<div class="t m" style="left:626px;width:150px;text-align:right;top:591px">482 mA</div>
<svg style="left:764px;top:607px" width="12" height="11"><path d="M1 5.5L4.5 9L11 1.5" stroke="#00e000" stroke-width="2.4" fill="none"/></svg>
<div class="t m" style="left:723px;width:150px;text-align:right;top:575px;color:#fff">P8:freq(C1)</div>
<div class="t m" style="left:723px;width:150px;text-align:right;top:591px">46.879188 Hz</div>
<svg style="left:860px;top:605px" width="14" height="14"><path d="M2.5 2.5L6 6M11.5 2.5L8 6M2.5 11.5L6 8.5M11.5 11.5L8 8.5" stroke="#ffff00" stroke-width="1.2"/><path d="M5.5 3.5h3v6h-3z" fill="none" stroke="#f0f0ff" stroke-width="1"/><path d="M5 6h4v3.5h-4z" fill="#ffff00"/><path d="M2 9.5h3M9 9.5h3" stroke="#f0f0ff" stroke-width="1"/></svg>
<div class="t m" style="left:820px;width:150px;text-align:right;top:575px;color:#7c7c7c">P9:- - -</div>
<div class="t m" style="left:917px;width:150px;text-align:right;top:575px;color:#7c7c7c">P10:freq(C5)</div>
<div class="t m" style="left:1014px;width:150px;text-align:right;top:575px;color:#7c7c7c">P11:- - -</div>
<div class="t m" style="left:1111px;width:150px;text-align:right;top:575px;color:#7c7c7c">P12:- - -</div>
<div class="box" style="left:1px;top:620px;width:99px;height:84px;background:#1e90ff"></div><div class="box" style="left:2px;top:621px;width:96px;height:81px;background:#2b4a64"></div><div class="box" style="left:2px;top:621px;width:97px;height:16px;background:#ffff00"></div><div class="t" style="left:5px;top:622px;font-size:13px;color:#3a3000">C1</div><div class="t" style="left:75px;top:622px;width:22px;height:14px;background:#000;border-radius:3px;color:#ffff00;font-size:11px;text-align:center;padding-top:1px">DC</div><div class="t" style="left:48px;top:622px;width:26px;height:14px;background:#000;border-radius:3px;color:#ffff00;font-size:11px;text-align:center;padding-top:1px">BwL</div><div class="t m" style="left:-58px;width:156px;text-align:right;top:640px">2.00 A/div</div><div class="t m" style="left:-58px;width:156px;text-align:right;top:655px">-50.0 mA</div><div class="t m" style="left:-58px;width:156px;text-align:right;top:674px">752.0 mA</div><div class="t m" style="left:-58px;width:156px;text-align:right;top:689px">-515.7 mA</div><svg style="left:5px;top:675px" width="8" height="28"><path d="M3.5 0V10M0.5 7L3.5 10.5L6.5 7M3.5 18V28M0.5 21L3.5 17.5L6.5 21" stroke="#e8e4c0" stroke-width="1" fill="none"/></svg>
<div class="box" style="left:102px;top:621px;width:97px;height:83px;background:#444444"></div><div class="box" style="left:102px;top:621px;width:97px;height:16px;background:#00ffff"></div><div class="t" style="left:105px;top:622px;font-size:13px;color:#002040">C3</div><div class="t" style="left:161px;top:622px;width:36px;height:14px;background:#000;border-radius:3px;color:#00ffff;font-size:11px;text-align:center;padding-top:1px">DC1M</div><div class="t" style="left:134px;top:622px;width:26px;height:14px;background:#000;border-radius:3px;color:#00ffff;font-size:11px;text-align:center;padding-top:1px">BwL</div><div class="t m" style="left:42px;width:156px;text-align:right;top:640px">5.00 V/div</div><div class="t m" style="left:42px;width:156px;text-align:right;top:655px">16.340 V</div><div class="t m" style="left:42px;width:156px;text-align:right;top:674px">-31 mV</div><div class="t m" style="left:42px;width:156px;text-align:right;top:689px">-40 mV</div><svg style="left:105px;top:675px" width="8" height="28"><path d="M3.5 0V10M0.5 7L3.5 10.5L6.5 7M3.5 18V28M0.5 21L3.5 17.5L6.5 21" stroke="#e8e4c0" stroke-width="1" fill="none"/></svg>
<div class="box" style="left:202px;top:621px;width:97px;height:83px;background:#444444"></div><div class="box" style="left:202px;top:621px;width:97px;height:16px;background:#00c000"></div><div class="t" style="left:205px;top:622px;font-size:13px;color:#003000">C4</div><div class="t" style="left:261px;top:622px;width:36px;height:14px;background:#000;border-radius:3px;color:#00d000;font-size:11px;text-align:center;padding-top:1px">DC1M</div><div class="t" style="left:234px;top:622px;width:26px;height:14px;background:#000;border-radius:3px;color:#00d000;font-size:11px;text-align:center;padding-top:1px">BwL</div><div class="t m" style="left:142px;width:156px;text-align:right;top:640px">2.00 V/div</div><div class="t m" style="left:142px;width:156px;text-align:right;top:655px">2.9000 V</div><div class="t m" style="left:142px;width:156px;text-align:right;top:674px">866.0 mV</div><div class="t m" style="left:142px;width:156px;text-align:right;top:689px">57.0 mV</div><svg style="left:205px;top:675px" width="8" height="28"><path d="M3.5 0V10M0.5 7L3.5 10.5L6.5 7M3.5 18V28M0.5 21L3.5 17.5L6.5 21" stroke="#e8e4c0" stroke-width="1" fill="none"/></svg>
<div class="box" style="left:302px;top:621px;width:97px;height:83px;background:#444444"></div><div class="box" style="left:302px;top:621px;width:97px;height:16px;background:#d8ffd8"></div><div class="t" style="left:305px;top:622px;font-size:13px;color:#202020">C5</div><div class="t" style="left:375px;top:622px;width:22px;height:14px;background:#000;border-radius:3px;color:#d8ffd8;font-size:11px;text-align:center;padding-top:1px">DC</div><div class="t" style="left:348px;top:622px;width:26px;height:14px;background:#000;border-radius:3px;color:#d8ffd8;font-size:11px;text-align:center;padding-top:1px">BwL</div><div class="t m" style="left:242px;width:156px;text-align:right;top:640px">2.00 A/div</div><div class="t m" style="left:242px;width:156px;text-align:right;top:655px">-4.7500 A</div><div class="t m" style="left:242px;width:156px;text-align:right;top:674px">198.0 mA</div><div class="t m" style="left:242px;width:156px;text-align:right;top:689px">233.7 mA</div><svg style="left:305px;top:675px" width="8" height="28"><path d="M3.5 0V10M0.5 7L3.5 10.5L6.5 7M3.5 18V28M0.5 21L3.5 17.5L6.5 21" stroke="#e8e4c0" stroke-width="1" fill="none"/></svg>
<div class="box" style="left:402px;top:621px;width:97px;height:83px;border:1px dashed #fff"></div>
<div class="box" style="left:442px;top:661px;width:14px;height:2px;background:#fff"></div><div class="box" style="left:448px;top:655px;width:2px;height:14px;background:#fff"></div>
<div class="box" style="left:1001px;top:621px;width:57px;height:49px;background:#444444"></div>
<div class="box" style="left:1001px;top:621px;width:57px;height:15px;background:#00ff00"></div>
<div class="t" style="left:1001px;width:57px;text-align:center;top:623px;font-size:13px;font-weight:bold;color:#000">HD</div>
<div class="t m" style="left:1001px;width:57px;text-align:center;top:646px">12 Bits</div>
<div class="box" style="left:1062px;top:621px;width:111px;height:49px;background:#444444"></div>
<div class="box" style="left:1062px;top:621px;width:111px;height:15px;background:#fff"></div>
<div class="t m" style="left:1064px;top:623px;color:#000">Timebase</div>
<div class="t m" style="left:1062px;width:110px;text-align:right;top:623px;color:#000">0.00 s</div>
<div class="t m" style="left:1064px;top:640px">Roll</div>
<div class="t m" style="left:1062px;width:110px;text-align:right;top:640px">1.00 s/div</div>
<div class="t m" style="left:1064px;top:655px">50 MS</div>
<div class="t m" style="left:1062px;width:110px;text-align:right;top:655px">5 MS/s</div>
<div class="box" style="left:1177px;top:621px;width:96px;height:49px;background:#444444"></div>
<div class="box" style="left:1177px;top:621px;width:96px;height:15px;background:#fff"></div>
<div class="t m" style="left:1179px;top:623px;color:#000">Trigger</div>
<div class="t" style="left:1227px;top:622px;width:19px;height:13px;background:#000;border-radius:3px;color:#fff;font-size:11px;text-align:center;padding-top:1px">C3</div>
<div class="t" style="left:1249px;top:622px;width:21px;height:13px;background:#000;border-radius:3px;color:#fff;font-size:11px;text-align:center;padding-top:1px">DC</div>
<div class="t m" style="left:1179px;top:640px">Stop</div>
<div class="t m" style="left:1177px;width:94px;text-align:right;top:640px">2.50 V</div>
<div class="t m" style="left:1179px;top:655px">Edge</div>
<div class="t m" style="left:1177px;width:94px;text-align:right;top:655px">Positive</div>
<div class="t m" style="left:1007px;top:672px">X1=</div>
<div class="t m" style="left:1014px;width:100px;text-align:right;top:672px">4.9999998 s</div>
<div class="t m" style="left:1134px;top:672px">&#916;X=</div>
<div class="t m" style="left:1171px;width:100px;text-align:right;top:672px">-9.9999998 s</div>
<div class="t m" style="left:1007px;top:688px">X2=</div>
<div class="t m" style="left:1014px;width:100px;text-align:right;top:688px">-5.0000000 s</div>
<div class="t m" style="left:1124px;top:688px">1/&#916;X=</div>
<div class="t m" style="left:1131px;width:140px;text-align:right;top:688px">-100.000002 mHz</div>
<div class="box" style="left:0;top:706px;width:1278px;height:1px;background:#565b5e"></div>
<div class="box" style="left:0;top:707px;width:1278px;height:2px;background:#222"></div>
</body></html>
